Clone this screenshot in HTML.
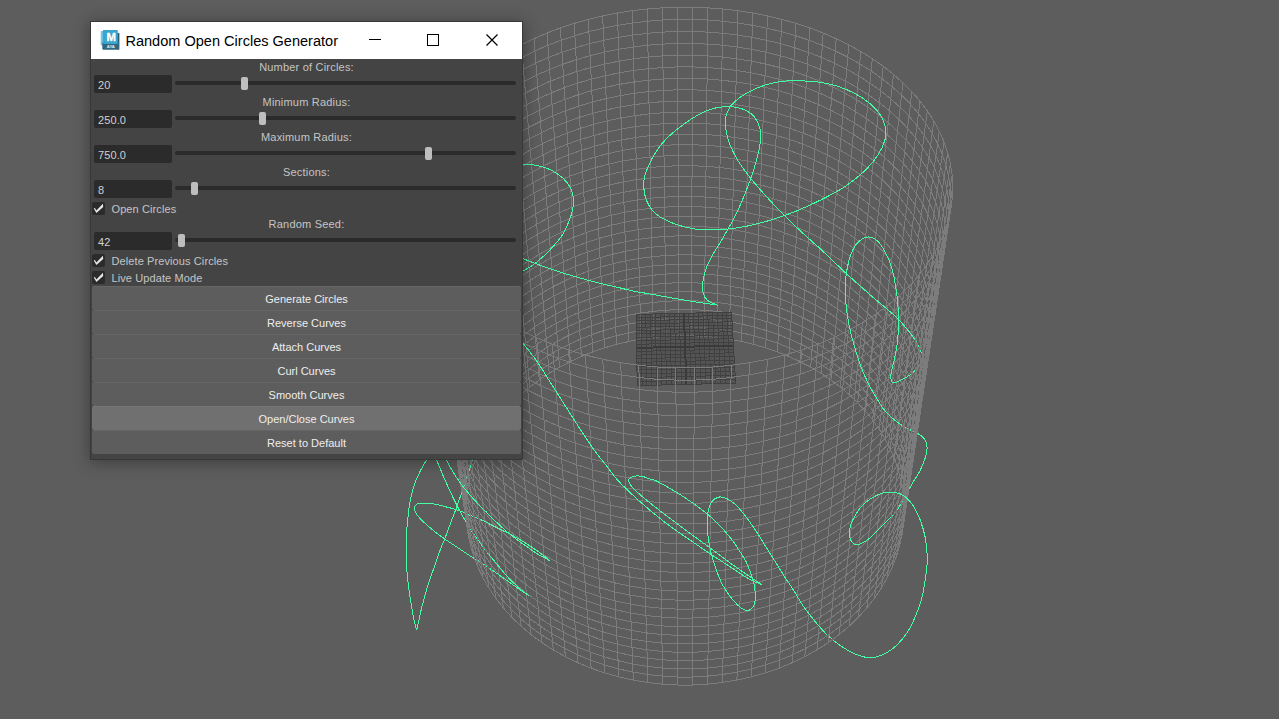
<!DOCTYPE html>
<html lang="en"><head><meta charset="utf-8"><title>Random Open Circles Generator</title>
<style>
html,body{margin:0;padding:0;}
body{width:1279px;height:719px;overflow:hidden;background:#5d5d5d;position:relative;font-family:"Liberation Sans",sans-serif;}
#vp{position:absolute;left:0;top:0;width:1279px;height:719px;}
#win{position:absolute;left:90px;top:21px;width:433px;height:439px;background:#383838;box-shadow:0 2px 15px 1px rgba(0,0,0,0.32);}
#tb{position:absolute;left:1px;top:1px;width:431px;height:37px;background:#fff;}
#ct{position:absolute;left:1px;top:38px;width:431px;height:400px;background:#444;}
#ttl{position:absolute;left:34.4px;top:9px;font:14.55px/20px "Liberation Sans",sans-serif;color:#000;white-space:nowrap;}
.ui{font:11px/14px "Liberation Sans",sans-serif;letter-spacing:0.1px;color:#c4c4c4;white-space:nowrap;}
.lbl{position:absolute;left:0;width:431px;text-align:center;letter-spacing:0.2px;}
.fld{position:absolute;left:3px;width:78px;height:18px;background:#2b2b2b;border-radius:2px;}
.fld span{position:absolute;left:4px;top:3px;color:#d0d0d0;}
.grv{position:absolute;left:84px;width:341px;height:4px;background:#2b2b2b;border-radius:2px;}
.hnd{position:absolute;width:7px;height:13px;background:#bebebe;border-radius:2px;}
.cb{position:absolute;left:1px;width:13px;height:13px;background:#2b2b2b;border-radius:2px;}
.cbl{position:absolute;left:20.5px;}
.btn{position:absolute;left:1px;width:429px;height:23px;background:#5d5d5d;border-top:1px solid #666;border-radius:2px;text-align:center;color:#eeeeee;}
.btn span{position:relative;top:5px;letter-spacing:0;}
.btn.hv{background:#707070;border-top-color:#777;}

</style></head><body>
<svg id="vp" width="1279" height="719" viewBox="0 0 1279 719">
<defs><clipPath id="bd"><path d="M416.0,188.5 464.5,511.7 464.6,514.4 464.7,517.2 464.9,520.0 465.1,522.7 465.3,525.5 465.7,528.3 466.1,531.0 466.5,533.8 467.0,536.6 467.6,539.3 468.2,542.1 468.8,544.9 469.6,547.6 470.3,550.3 471.2,553.1 472.1,555.8 473.0,558.5 474.0,561.2 475.1,563.9 476.2,566.6 477.4,569.3 478.6,572.0 479.9,574.6 481.2,577.3 482.6,579.9 484.1,582.5 485.6,585.1 487.1,587.7 488.7,590.2 490.4,592.8 492.1,595.3 493.9,597.8 495.8,600.3 497.6,602.7 499.6,605.1 501.6,607.6 503.6,609.9 505.7,612.3 507.8,614.6 510.0,617.0 512.3,619.2 514.6,621.5 516.9,623.7 519.3,625.9 521.7,628.1 524.2,630.2 526.8,632.3 529.3,634.4 532.0,636.5 534.6,638.5 537.4,640.4 553.9,638.4 551.1,636.5 548.5,634.5 545.8,632.4 543.3,630.3 540.7,628.2 538.2,626.1 535.8,623.9 533.4,621.7 531.1,619.5 528.8,617.2 526.5,615.0 524.3,612.6 522.2,610.3 520.1,607.9 518.1,605.6 516.1,603.1 514.1,600.7 512.3,598.3 510.4,595.8 508.6,593.3 506.9,590.8 505.2,588.2 503.6,585.7 502.1,583.1 500.6,580.5 499.1,577.9 497.7,575.3 496.4,572.6 495.1,570.0 493.9,567.3 492.7,564.6 491.6,561.9 490.5,559.2 489.5,556.5 488.6,553.8 487.7,551.1 486.8,548.3 486.1,545.6 485.3,542.9 484.7,540.1 484.1,537.3 483.5,534.6 483.0,531.8 482.6,529.0 482.2,526.3 481.8,523.5 481.6,520.7 481.4,518.0 481.2,515.2 481.1,512.4 481.0,509.7 432.5,186.5ZM954.2,188.5 905.7,511.7 905.6,514.4 905.5,517.2 905.3,520.0 905.1,522.7 904.9,525.5 904.5,528.3 904.1,531.0 903.7,533.8 903.2,536.6 902.6,539.3 902.0,542.1 901.4,544.9 900.6,547.6 899.9,550.3 899.0,553.1 898.1,555.8 897.2,558.5 896.2,561.2 895.1,563.9 894.0,566.6 892.8,569.3 891.6,572.0 890.3,574.6 889.0,577.3 887.6,579.9 886.1,582.5 884.6,585.1 883.1,587.7 881.5,590.2 879.8,592.8 878.1,595.3 876.3,597.8 874.4,600.3 872.6,602.7 870.6,605.1 868.6,607.6 866.6,609.9 864.5,612.3 862.4,614.6 860.2,617.0 857.9,619.2 855.6,621.5 853.3,623.7 850.9,625.9 848.5,628.1 846.0,630.2 843.4,632.3 840.9,634.4 838.2,636.5 835.6,638.5 832.8,640.4 816.3,638.4 819.1,636.5 821.7,634.5 824.4,632.4 826.9,630.3 829.5,628.2 832.0,626.1 834.4,623.9 836.8,621.7 839.1,619.5 841.4,617.2 843.7,615.0 845.9,612.6 848.0,610.3 850.1,607.9 852.1,605.6 854.1,603.1 856.1,600.7 857.9,598.3 859.8,595.8 861.6,593.3 863.3,590.8 865.0,588.2 866.6,585.7 868.1,583.1 869.6,580.5 871.1,577.9 872.5,575.3 873.8,572.6 875.1,570.0 876.3,567.3 877.5,564.6 878.6,561.9 879.7,559.2 880.7,556.5 881.6,553.8 882.5,551.1 883.4,548.3 884.1,545.6 884.9,542.9 885.5,540.1 886.1,537.3 886.7,534.6 887.2,531.8 887.6,529.0 888.0,526.3 888.4,523.5 888.6,520.7 888.8,518.0 889.0,515.2 889.1,512.4 889.2,509.7 937.7,186.5Z"/></clipPath><clipPath id="fc"><rect x="630" y="362" width="112" height="30"/></clipPath></defs>
<path id="cyl" d="M694.4,367.9 713.0,367.0 731.4,365.3 749.5,362.7 767.4,359.3 784.8,355.0 801.7,350.0 817.9,344.2 833.6,337.7 848.4,330.5 862.5,322.7 875.6,314.3 887.9,305.3 899.1,295.9 909.4,286.0 918.6,275.7 926.7,265.2 933.7,254.3 939.7,243.2 944.5,232.0 948.2,220.6 950.8,209.2 952.3,197.7 952.7,186.3 952.1,175.0 950.4,163.7 947.7,152.7 944.0,141.8 939.3,131.2 933.8,120.9 927.3,110.8 920.0,101.1 911.9,91.8 903.0,82.9 893.5,74.4 883.2,66.3 872.3,58.6 860.8,51.5 848.8,44.8 836.2,38.7 823.2,33.0 809.8,27.9 796.0,23.4 781.9,19.4 767.5,15.9 752.8,13.0 738.0,10.7 723.0,9.0 707.9,7.8 692.7,7.2 677.5,7.2 662.3,7.8 647.2,9.0 632.2,10.7 617.4,13.0 602.7,15.9 588.3,19.4 574.2,23.4 560.4,27.9 547.0,33.0 534.0,38.7 521.4,44.8 509.4,51.5 497.9,58.6 487.0,66.3 476.7,74.4 467.2,82.9 458.3,91.8 450.2,101.1 442.9,110.8 436.4,120.9 430.9,131.2 426.2,141.8 422.5,152.7 419.8,163.7 418.1,175.0 417.5,186.3 417.9,197.7 419.4,209.2 422.0,220.6 425.7,232.0 430.5,243.2 436.5,254.3 443.5,265.2 451.6,275.7 460.8,286.0 471.1,295.9 482.3,305.3 494.6,314.3 507.7,322.7 521.8,330.5 536.6,337.7 552.3,344.2 568.5,350.0 585.4,355.0 602.8,359.3 620.7,362.7 638.8,365.3 657.2,367.0 675.8,367.9ZM694.3,380.1 712.8,379.3 731.0,377.5 749.1,374.9 766.8,371.5 784.0,367.3 800.8,362.2 817.0,356.5 832.4,350.0 847.2,342.8 861.1,335.0 874.2,326.6 886.4,317.6 897.6,308.2 907.8,298.3 916.9,288.1 925.0,277.5 932.0,266.6 937.9,255.6 942.7,244.3 946.4,232.9 948.9,221.5 950.4,210.1 950.9,198.7 950.2,187.3 948.6,176.1 945.9,165.0 942.2,154.2 937.6,143.6 932.1,133.2 925.7,123.2 918.5,113.5 910.4,104.1 901.6,95.2 892.1,86.7 881.9,78.6 871.1,70.9 859.7,63.8 847.7,57.1 835.3,50.9 822.3,45.3 809.0,40.2 795.3,35.6 781.3,31.6 766.9,28.2 752.4,25.3 737.6,23.0 722.7,21.2 707.7,20.0 692.6,19.5 677.6,19.5 662.5,20.0 647.5,21.2 632.6,23.0 617.8,25.3 603.3,28.2 588.9,31.6 574.9,35.6 561.2,40.2 547.9,45.3 534.9,50.9 522.5,57.1 510.5,63.8 499.1,70.9 488.3,78.6 478.1,86.7 468.6,95.2 459.8,104.1 451.7,113.5 444.5,123.2 438.1,133.2 432.6,143.6 428.0,154.2 424.3,165.0 421.6,176.1 420.0,187.3 419.3,198.7 419.8,210.1 421.3,221.5 423.8,232.9 427.5,244.3 432.3,255.6 438.2,266.6 445.2,277.5 453.3,288.1 462.4,298.3 472.6,308.2 483.8,317.6 496.0,326.6 509.1,335.0 523.0,342.8 537.8,350.0 553.2,356.5 569.4,362.2 586.2,367.3 603.4,371.5 621.1,374.9 639.2,377.5 657.4,379.3 675.9,380.1ZM694.3,392.2 712.5,391.3 730.7,389.6 748.6,387.0 766.1,383.6 783.3,379.3 799.9,374.3 816.0,368.5 831.4,362.1 846.0,354.9 859.9,347.1 872.8,338.7 884.9,329.8 896.0,320.3 906.1,310.5 915.2,300.2 923.3,289.7 930.2,278.8 936.1,267.7 940.9,256.5 944.5,245.1 947.1,233.7 948.6,222.3 949.1,210.8 948.4,199.5 946.8,188.3 944.1,177.2 940.5,166.4 936.0,155.7 930.5,145.4 924.1,135.4 917.0,125.6 909.0,116.3 900.2,107.4 890.8,98.8 880.7,90.7 869.9,83.1 858.6,75.9 846.7,69.2 834.3,63.1 821.5,57.4 808.2,52.3 794.6,47.7 780.7,43.7 766.4,40.3 752.0,37.4 737.3,35.0 722.5,33.3 707.6,32.1 692.6,31.5 677.6,31.5 662.6,32.1 647.7,33.3 632.9,35.0 618.2,37.4 603.8,40.3 589.5,43.7 575.6,47.7 562.0,52.3 548.7,57.4 535.9,63.1 523.5,69.2 511.6,75.9 500.3,83.1 489.5,90.7 479.4,98.8 470.0,107.4 461.2,116.3 453.2,125.6 446.1,135.4 439.7,145.4 434.2,155.7 429.7,166.4 426.1,177.2 423.4,188.3 421.8,199.5 421.1,210.8 421.6,222.3 423.1,233.7 425.7,245.1 429.3,256.5 434.1,267.7 440.0,278.8 446.9,289.7 455.0,300.2 464.1,310.5 474.2,320.3 485.3,329.8 497.4,338.7 510.3,347.1 524.2,354.9 538.8,362.1 554.2,368.5 570.3,374.3 586.9,379.3 604.1,383.6 621.6,387.0 639.5,389.6 657.7,391.3 675.9,392.2ZM694.2,404.0 712.3,403.2 730.3,401.4 748.1,398.9 765.5,395.5 782.6,391.2 799.1,386.2 815.0,380.5 830.3,374.0 844.8,366.8 858.6,359.0 871.5,350.6 883.5,341.7 894.5,332.3 904.6,322.4 913.6,312.2 921.6,301.6 928.5,290.8 934.3,279.7 939.1,268.5 942.7,257.1 945.3,245.7 946.8,234.3 947.3,222.9 946.7,211.5 945.0,200.3 942.4,189.3 938.8,178.4 934.3,167.8 928.9,157.4 922.6,147.4 915.5,137.7 907.5,128.3 898.9,119.4 889.5,110.8 879.4,102.7 868.8,95.1 857.5,87.9 845.7,81.2 833.4,75.0 820.6,69.4 807.5,64.3 793.9,59.7 780.1,55.7 765.9,52.2 751.6,49.3 737.0,47.0 722.3,45.2 707.4,44.1 692.6,43.5 677.6,43.5 662.8,44.1 647.9,45.2 633.2,47.0 618.6,49.3 604.3,52.2 590.1,55.7 576.3,59.7 562.7,64.3 549.6,69.4 536.8,75.0 524.5,81.2 512.7,87.9 501.4,95.1 490.8,102.7 480.7,110.8 471.3,119.4 462.7,128.3 454.7,137.7 447.6,147.4 441.3,157.4 435.9,167.8 431.4,178.4 427.8,189.3 425.2,200.3 423.5,211.5 422.9,222.9 423.4,234.3 424.9,245.7 427.5,257.1 431.1,268.5 435.9,279.7 441.7,290.8 448.6,301.6 456.6,312.2 465.6,322.4 475.7,332.3 486.7,341.7 498.7,350.6 511.6,359.0 525.4,366.8 539.9,374.0 555.2,380.5 571.1,386.2 587.6,391.2 604.7,395.5 622.1,398.9 639.9,401.4 657.9,403.2 676.0,404.0ZM694.1,415.7 712.1,414.9 730.0,413.1 747.6,410.6 764.9,407.2 781.8,402.9 798.2,397.9 814.1,392.2 829.2,385.7 843.7,378.6 857.3,370.8 870.1,362.4 882.0,353.5 893.0,344.1 903.0,334.3 912.0,324.0 919.9,313.5 926.8,302.6 932.6,291.6 937.3,280.3 941.0,269.0 943.5,257.6 945.0,246.1 945.5,234.7 944.9,223.4 943.3,212.2 940.7,201.1 937.2,190.3 932.7,179.6 927.3,169.3 921.0,159.2 914.0,149.5 906.1,140.2 897.5,131.2 888.2,122.7 878.2,114.6 867.6,106.9 856.4,99.7 844.7,93.0 832.5,86.9 819.8,81.2 806.7,76.1 793.3,71.5 779.5,67.5 765.4,64.0 751.2,61.1 736.7,58.8 722.0,57.0 707.3,55.9 692.5,55.3 677.7,55.3 662.9,55.9 648.2,57.0 633.5,58.8 619.0,61.1 604.8,64.0 590.7,67.5 576.9,71.5 563.5,76.1 550.4,81.2 537.7,86.9 525.5,93.0 513.8,99.7 502.6,106.9 492.0,114.6 482.0,122.7 472.7,131.2 464.1,140.2 456.2,149.5 449.2,159.2 442.9,169.3 437.5,179.6 433.0,190.3 429.5,201.1 426.9,212.2 425.3,223.4 424.7,234.7 425.2,246.1 426.7,257.6 429.2,269.0 432.9,280.3 437.6,291.6 443.4,302.6 450.3,313.5 458.2,324.0 467.2,334.3 477.2,344.1 488.2,353.5 500.1,362.4 512.9,370.8 526.5,378.6 541.0,385.7 556.1,392.2 572.0,397.9 588.4,402.9 605.3,407.2 622.6,410.6 640.2,413.1 658.1,414.9 676.1,415.7ZM694.1,427.3 711.9,426.4 729.7,424.7 747.2,422.1 764.4,418.7 781.1,414.5 797.4,409.5 813.1,403.7 828.2,397.3 842.5,390.1 856.1,382.4 868.8,374.0 880.6,365.1 891.5,355.7 901.5,345.9 910.4,335.7 918.3,325.1 925.1,314.3 930.9,303.3 935.6,292.0 939.2,280.7 941.8,269.3 943.3,257.8 943.8,246.4 943.2,235.1 941.6,223.9 939.0,212.8 935.5,202.0 931.1,191.4 925.7,181.0 919.5,170.9 912.5,161.2 904.7,151.9 896.2,142.9 886.9,134.4 877.0,126.2 866.5,118.6 855.3,111.4 843.7,104.7 831.6,98.5 819.0,92.9 806.0,87.7 792.6,83.2 778.9,79.1 764.9,75.7 750.8,72.8 736.4,70.4 721.8,68.7 707.2,67.5 692.5,66.9 677.7,66.9 663.0,67.5 648.4,68.7 633.8,70.4 619.4,72.8 605.3,75.7 591.3,79.1 577.6,83.2 564.2,87.7 551.2,92.9 538.6,98.5 526.5,104.7 514.9,111.4 503.7,118.6 493.2,126.2 483.3,134.4 474.0,142.9 465.5,151.9 457.7,161.2 450.7,170.9 444.5,181.0 439.1,191.4 434.7,202.0 431.2,212.8 428.6,223.9 427.0,235.1 426.4,246.4 426.9,257.8 428.4,269.3 431.0,280.7 434.6,292.0 439.3,303.3 445.1,314.3 451.9,325.1 459.8,335.7 468.7,345.9 478.7,355.7 489.6,365.1 501.4,374.0 514.1,382.4 527.7,390.1 542.0,397.3 557.1,403.7 572.8,409.5 589.1,414.5 605.8,418.7 623.0,422.1 640.5,424.7 658.3,426.4 676.1,427.3ZM694.0,438.6 711.7,437.8 729.3,436.0 746.7,433.5 763.8,430.1 780.4,425.9 796.6,420.9 812.2,415.1 827.2,408.7 841.4,401.6 854.9,393.8 867.5,385.4 879.3,376.6 890.1,367.2 900.0,357.4 908.8,347.2 916.7,336.6 923.5,325.8 929.2,314.8 933.9,303.6 937.5,292.2 940.1,280.8 941.6,269.4 942.0,258.0 941.5,246.7 939.9,235.4 937.4,224.4 933.9,213.5 929.5,202.9 924.2,192.6 918.0,182.5 911.1,172.8 903.3,163.4 894.8,154.5 885.7,145.9 875.8,137.8 865.3,130.1 854.3,122.9 842.7,116.3 830.7,110.1 818.1,104.4 805.2,99.3 791.9,94.7 778.3,90.6 764.5,87.2 750.4,84.3 736.1,81.9 721.6,80.2 707.0,79.0 692.4,78.4 677.8,78.4 663.2,79.0 648.6,80.2 634.1,81.9 619.8,84.3 605.7,87.2 591.9,90.6 578.3,94.7 565.0,99.3 552.1,104.4 539.5,110.1 527.5,116.3 515.9,122.9 504.9,130.1 494.4,137.8 484.5,145.9 475.4,154.5 466.9,163.4 459.1,172.8 452.2,182.5 446.0,192.6 440.7,202.9 436.3,213.5 432.8,224.4 430.3,235.4 428.7,246.7 428.2,258.0 428.6,269.4 430.1,280.8 432.7,292.2 436.3,303.6 441.0,314.8 446.7,325.8 453.5,336.6 461.4,347.2 470.2,357.4 480.1,367.2 490.9,376.6 502.7,385.4 515.3,393.8 528.8,401.6 543.0,408.7 558.0,415.1 573.6,420.9 589.8,425.9 606.4,430.1 623.5,433.5 640.9,436.0 658.5,437.8 676.2,438.6ZM693.9,449.8 711.5,448.9 729.0,447.2 746.3,444.7 763.2,441.3 779.8,437.1 795.8,432.1 811.3,426.4 826.1,419.9 840.3,412.8 853.7,405.1 866.2,396.7 877.9,387.8 888.7,378.5 898.5,368.7 907.3,358.5 915.1,348.0 921.8,337.2 927.5,326.1 932.2,314.9 935.8,303.6 938.4,292.2 939.9,280.8 940.3,269.4 939.8,258.1 938.3,246.9 935.7,235.8 932.3,224.9 927.9,214.3 922.7,204.0 916.6,193.9 909.6,184.2 902.0,174.8 893.5,165.9 884.4,157.3 874.6,149.2 864.2,141.5 853.3,134.3 841.8,127.6 829.8,121.5 817.3,115.8 804.5,110.7 791.3,106.1 777.8,102.0 764.0,98.6 750.0,95.6 735.7,93.3 721.4,91.6 706.9,90.4 692.4,89.8 677.8,89.8 663.3,90.4 648.8,91.6 634.5,93.3 620.2,95.6 606.2,98.6 592.4,102.0 578.9,106.1 565.7,110.7 552.9,115.8 540.4,121.5 528.4,127.6 516.9,134.3 506.0,141.5 495.6,149.2 485.8,157.3 476.7,165.9 468.2,174.8 460.6,184.2 453.6,193.9 447.5,204.0 442.3,214.3 437.9,224.9 434.5,235.8 431.9,246.9 430.4,258.1 429.9,269.4 430.3,280.8 431.8,292.2 434.4,303.6 438.0,314.9 442.7,326.1 448.4,337.2 455.1,348.0 462.9,358.5 471.7,368.7 481.5,378.5 492.3,387.8 504.0,396.7 516.5,405.1 529.9,412.8 544.1,419.9 558.9,426.4 574.4,432.1 590.4,437.1 607.0,441.3 623.9,444.7 641.2,447.2 658.7,448.9 676.3,449.8ZM693.9,460.8 711.4,460.0 728.7,458.3 745.8,455.7 762.7,452.3 779.1,448.1 795.0,443.2 810.4,437.4 825.1,431.0 839.2,423.9 852.5,416.2 864.9,407.8 876.6,399.0 887.2,389.6 897.0,379.8 905.7,369.6 913.5,359.1 920.2,348.3 925.9,337.3 930.5,326.1 934.1,314.8 936.7,303.4 938.2,292.0 938.7,280.6 938.1,269.3 936.6,258.1 934.1,247.1 930.7,236.2 926.4,225.6 921.2,215.2 915.1,205.2 908.2,195.5 900.6,186.1 892.2,177.1 883.2,168.6 873.5,160.5 863.1,152.8 852.2,145.6 840.8,138.9 828.9,132.7 816.5,127.0 803.8,121.9 790.7,117.3 777.2,113.3 763.5,109.8 749.6,106.9 735.4,104.6 721.2,102.8 706.8,101.6 692.3,101.0 677.9,101.0 663.4,101.6 649.0,102.8 634.8,104.6 620.6,106.9 606.7,109.8 593.0,113.3 579.5,117.3 566.4,121.9 553.7,127.0 541.3,132.7 529.4,138.9 518.0,145.6 507.1,152.8 496.7,160.5 487.0,168.6 478.0,177.1 469.6,186.1 462.0,195.5 455.1,205.2 449.0,215.2 443.8,225.6 439.5,236.2 436.1,247.1 433.6,258.1 432.1,269.3 431.5,280.6 432.0,292.0 433.5,303.4 436.1,314.8 439.7,326.1 444.3,337.3 450.0,348.3 456.7,359.1 464.5,369.6 473.2,379.8 483.0,389.6 493.6,399.0 505.3,407.8 517.7,416.2 531.0,423.9 545.1,431.0 559.8,437.4 575.2,443.2 591.1,448.1 607.5,452.3 624.4,455.7 641.5,458.3 658.8,460.0 676.3,460.8ZM693.8,471.7 711.2,470.9 728.4,469.1 745.4,466.6 762.1,463.2 778.4,459.0 794.2,454.1 809.5,448.4 824.2,441.9 838.1,434.8 851.3,427.1 863.7,418.8 875.2,409.9 885.8,400.6 895.5,390.8 904.2,380.7 911.9,370.2 918.6,359.4 924.3,348.4 928.9,337.2 932.5,325.9 935.0,314.5 936.5,303.1 937.0,291.7 936.5,280.4 935.0,269.2 932.5,258.2 929.1,247.3 924.8,236.7 919.7,226.4 913.7,216.3 906.9,206.6 899.3,197.2 891.0,188.3 882.0,179.7 872.3,171.6 862.1,163.9 851.2,156.7 839.9,150.0 828.0,143.8 815.8,138.2 803.1,133.0 790.0,128.4 776.7,124.4 763.1,120.9 749.2,118.0 735.1,115.7 721.0,113.9 706.7,112.7 692.3,112.1 677.9,112.1 663.5,112.7 649.2,113.9 635.1,115.7 621.0,118.0 607.1,120.9 593.5,124.4 580.2,128.4 567.1,133.0 554.4,138.2 542.2,143.8 530.3,150.0 519.0,156.7 508.1,163.9 497.9,171.6 488.2,179.7 479.2,188.3 470.9,197.2 463.3,206.6 456.5,216.3 450.5,226.4 445.4,236.7 441.1,247.3 437.7,258.2 435.2,269.2 433.7,280.4 433.2,291.7 433.7,303.1 435.2,314.5 437.7,325.9 441.3,337.2 445.9,348.4 451.6,359.4 458.3,370.2 466.0,380.7 474.7,390.8 484.4,400.6 495.0,409.9 506.5,418.8 518.9,427.1 532.1,434.8 546.0,441.9 560.7,448.4 576.0,454.1 591.8,459.0 608.1,463.2 624.8,466.6 641.8,469.1 659.0,470.9 676.4,471.7ZM693.7,482.4 711.0,481.6 728.1,479.9 745.0,477.3 761.6,473.9 777.8,469.8 793.5,464.8 808.6,459.1 823.2,452.7 837.0,445.6 850.2,437.9 862.5,429.6 873.9,420.8 884.5,411.4 894.1,401.7 902.8,391.5 910.4,381.0 917.1,370.3 922.7,359.3 927.3,348.1 930.9,336.8 933.4,325.5 934.9,314.1 935.4,302.7 934.9,291.4 933.4,280.2 931.0,269.2 927.6,258.3 923.3,247.7 918.2,237.4 912.2,227.3 905.5,217.6 898.0,208.2 889.7,199.3 880.8,190.7 871.2,182.6 861.0,174.9 850.2,167.7 838.9,161.0 827.2,154.8 815.0,149.1 802.4,144.0 789.4,139.4 776.1,135.4 762.6,131.9 748.8,129.0 734.9,126.6 720.7,124.9 706.5,123.7 692.2,123.1 678.0,123.1 663.7,123.7 649.5,124.9 635.3,126.6 621.4,129.0 607.6,131.9 594.1,135.4 580.8,139.4 567.8,144.0 555.2,149.1 543.0,154.8 531.3,161.0 520.0,167.7 509.2,174.9 499.0,182.6 489.4,190.7 480.5,199.3 472.2,208.2 464.7,217.6 458.0,227.3 452.0,237.4 446.9,247.7 442.6,258.3 439.2,269.2 436.8,280.2 435.3,291.4 434.8,302.7 435.3,314.1 436.8,325.5 439.3,336.8 442.9,348.1 447.5,359.3 453.1,370.3 459.8,381.0 467.4,391.5 476.1,401.7 485.7,411.4 496.3,420.8 507.7,429.6 520.0,437.9 533.2,445.6 547.0,452.7 561.6,459.1 576.7,464.8 592.4,469.8 608.6,473.9 625.2,477.3 642.1,479.9 659.2,481.6 676.5,482.4ZM693.7,493.0 710.8,492.1 727.8,490.4 744.6,487.9 761.0,484.5 777.1,480.4 792.7,475.4 807.8,469.7 822.2,463.3 836.0,456.3 849.0,448.6 861.2,440.3 872.6,431.5 883.1,422.1 892.7,412.4 901.3,402.3 908.9,391.8 915.5,381.0 921.1,370.0 925.7,358.9 929.2,347.6 931.8,336.3 933.3,324.9 933.8,313.5 933.3,302.2 931.8,291.0 929.4,280.0 926.1,269.2 921.8,258.6 916.8,248.2 910.8,238.2 904.1,228.5 896.6,219.1 888.5,210.1 879.6,201.6 870.1,193.4 859.9,185.8 849.2,178.6 838.0,171.9 826.3,165.7 814.2,160.0 801.7,154.9 788.8,150.3 775.6,146.2 762.1,142.7 748.4,139.8 734.6,137.5 720.5,135.7 706.4,134.6 692.2,134.0 678.0,134.0 663.8,134.6 649.7,135.7 635.6,137.5 621.8,139.8 608.1,142.7 594.6,146.2 581.4,150.3 568.5,154.9 556.0,160.0 543.9,165.7 532.2,171.9 521.0,178.6 510.3,185.8 500.1,193.4 490.6,201.6 481.7,210.1 473.6,219.1 466.1,228.5 459.4,238.2 453.4,248.2 448.4,258.6 444.1,269.2 440.8,280.0 438.4,291.0 436.9,302.2 436.4,313.5 436.9,324.9 438.4,336.3 441.0,347.6 444.5,358.9 449.1,370.0 454.7,381.0 461.3,391.8 468.9,402.3 477.5,412.4 487.1,422.1 497.6,431.5 509.0,440.3 521.2,448.6 534.2,456.3 548.0,463.3 562.4,469.7 577.5,475.4 593.1,480.4 609.2,484.5 625.6,487.9 642.4,490.4 659.4,492.1 676.5,493.0ZM693.6,503.4 710.6,502.6 727.5,500.9 744.1,498.3 760.5,495.0 776.5,490.8 792.0,485.9 806.9,480.2 821.3,473.8 835.0,466.8 847.9,459.1 860.0,450.8 871.4,442.0 881.8,432.7 891.3,423.0 899.8,412.8 907.4,402.4 914.0,391.6 919.6,380.7 924.1,369.5 927.7,358.3 930.2,346.9 931.7,335.5 932.2,324.2 931.7,312.9 930.3,301.7 927.9,290.7 924.6,279.9 920.4,269.3 915.3,258.9 909.5,248.9 902.8,239.2 895.4,229.8 887.2,220.9 878.4,212.3 868.9,204.2 858.9,196.5 848.3,189.3 837.1,182.6 825.5,176.4 813.4,170.7 801.0,165.6 788.2,161.0 775.1,156.9 761.7,153.5 748.1,150.5 734.3,148.2 720.3,146.4 706.3,145.3 692.2,144.7 678.0,144.7 663.9,145.3 649.9,146.4 635.9,148.2 622.1,150.5 608.5,153.5 595.1,156.9 582.0,161.0 569.2,165.6 556.8,170.7 544.7,176.4 533.1,182.6 521.9,189.3 511.3,196.5 501.3,204.2 491.8,212.3 483.0,220.9 474.8,229.8 467.4,239.2 460.7,248.9 454.9,258.9 449.8,269.3 445.6,279.9 442.3,290.7 439.9,301.7 438.5,312.9 438.0,324.2 438.5,335.5 440.0,346.9 442.5,358.3 446.1,369.5 450.6,380.7 456.2,391.6 462.8,402.4 470.4,412.8 478.9,423.0 488.4,432.7 498.8,442.0 510.2,450.8 522.3,459.1 535.2,466.8 548.9,473.8 563.3,480.2 578.2,485.9 593.7,490.8 609.7,495.0 626.1,498.3 642.7,500.9 659.6,502.6 676.6,503.4ZM693.6,513.7 710.4,512.8 727.2,511.1 743.7,508.6 760.0,505.3 775.8,501.1 791.2,496.2 806.1,490.5 820.3,484.1 833.9,477.1 846.8,469.4 858.9,461.2 870.1,452.4 880.5,443.1 889.9,433.4 898.4,423.3 905.9,412.8 912.5,402.1 918.0,391.1 922.6,380.0 926.1,368.8 928.6,357.4 930.1,346.1 930.6,334.7 930.1,323.5 928.7,312.3 926.4,301.3 923.1,290.4 918.9,279.9 913.9,269.5 908.1,259.5 901.5,249.8 894.1,240.4 886.0,231.5 877.2,222.9 867.8,214.8 857.9,207.1 847.3,199.9 836.2,193.2 824.7,187.0 812.7,181.3 800.3,176.2 787.6,171.6 774.6,167.5 761.2,164.1 747.7,161.1 734.0,158.8 720.1,157.0 706.2,155.9 692.1,155.3 678.1,155.3 664.0,155.9 650.1,157.0 636.2,158.8 622.5,161.1 609.0,164.1 595.6,167.5 582.6,171.6 569.9,176.2 557.5,181.3 545.5,187.0 534.0,193.2 522.9,199.9 512.3,207.1 502.4,214.8 493.0,222.9 484.2,231.5 476.1,240.4 468.7,249.8 462.1,259.5 456.3,269.5 451.3,279.9 447.1,290.4 443.8,301.3 441.5,312.3 440.1,323.5 439.6,334.7 440.1,346.1 441.6,357.4 444.1,368.8 447.6,380.0 452.2,391.1 457.7,402.1 464.3,412.8 471.8,423.3 480.3,433.4 489.7,443.1 500.1,452.4 511.3,461.2 523.4,469.4 536.3,477.1 549.9,484.1 564.1,490.5 579.0,496.2 594.4,501.1 610.2,505.3 626.5,508.6 643.0,511.1 659.8,512.8 676.6,513.7ZM693.5,523.8 710.3,523.0 726.9,521.3 743.3,518.8 759.5,515.4 775.2,511.3 790.5,506.4 805.3,500.7 819.4,494.3 832.9,487.3 845.7,479.6 857.7,471.4 868.9,462.6 879.2,453.4 888.6,443.7 897.0,433.6 904.5,423.1 911.0,412.4 916.5,401.5 921.0,390.4 924.5,379.1 927.0,367.8 928.5,356.5 929.1,345.1 928.6,333.9 927.2,322.7 924.9,311.7 921.6,300.9 917.5,290.3 912.5,280.0 906.7,269.9 900.2,260.2 892.8,250.9 884.8,241.9 876.1,233.4 866.8,225.3 856.8,217.6 846.3,210.4 835.3,203.7 823.9,197.5 812.0,191.8 799.7,186.7 787.0,182.1 774.0,178.0 760.8,174.5 747.4,171.6 733.7,169.3 719.9,167.5 706.0,166.3 692.1,165.8 678.1,165.8 664.2,166.3 650.3,167.5 636.5,169.3 622.8,171.6 609.4,174.5 596.2,178.0 583.2,182.1 570.5,186.7 558.2,191.8 546.3,197.5 534.9,203.7 523.9,210.4 513.4,217.6 503.4,225.3 494.1,233.4 485.4,241.9 477.4,250.9 470.0,260.2 463.5,269.9 457.7,280.0 452.7,290.3 448.6,300.9 445.3,311.7 443.0,322.7 441.6,333.9 441.1,345.1 441.7,356.5 443.2,367.8 445.7,379.1 449.2,390.4 453.7,401.5 459.2,412.4 465.7,423.1 473.2,433.6 481.6,443.7 491.0,453.4 501.3,462.6 512.5,471.4 524.5,479.6 537.3,487.3 550.8,494.3 564.9,500.7 579.7,506.4 595.0,511.3 610.7,515.4 626.9,518.8 643.3,521.3 659.9,523.0 676.7,523.8ZM693.4,533.8 710.1,533.0 726.6,531.3 742.9,528.8 759.0,525.4 774.6,521.3 789.8,516.4 804.4,510.7 818.5,504.4 831.9,497.4 844.6,489.7 856.5,481.5 867.6,472.7 877.9,463.5 887.2,453.8 895.6,443.7 903.1,433.3 909.5,422.6 915.0,411.7 919.5,400.6 923.0,389.4 925.5,378.1 927.0,366.7 927.5,355.4 927.1,344.2 925.7,333.0 923.4,322.0 920.2,311.2 916.1,300.6 911.1,290.3 905.4,280.3 898.9,270.6 891.6,261.2 883.6,252.3 875.0,243.7 865.7,235.6 855.8,227.9 845.4,220.7 834.5,214.0 823.1,207.8 811.2,202.2 799.0,197.0 786.4,192.4 773.5,188.4 760.4,184.9 747.0,182.0 733.4,179.6 719.7,177.9 705.9,176.7 692.0,176.1 678.2,176.1 664.3,176.7 650.5,177.9 636.8,179.6 623.2,182.0 609.8,184.9 596.7,188.4 583.8,192.4 571.2,197.0 559.0,202.2 547.1,207.8 535.7,214.0 524.8,220.7 514.4,227.9 504.5,235.6 495.2,243.7 486.6,252.3 478.6,261.2 471.3,270.6 464.8,280.3 459.1,290.3 454.1,300.6 450.0,311.2 446.8,322.0 444.5,333.0 443.1,344.2 442.7,355.4 443.2,366.7 444.7,378.1 447.2,389.4 450.7,400.6 455.2,411.7 460.7,422.6 467.1,433.3 474.6,443.7 483.0,453.8 492.3,463.5 502.6,472.7 513.7,481.5 525.6,489.7 538.3,497.4 551.7,504.4 565.8,510.7 580.4,516.4 595.6,521.3 611.2,525.4 627.3,528.8 643.6,531.3 660.1,533.0 676.8,533.8ZM693.4,543.7 709.9,542.8 726.3,541.1 742.5,538.6 758.5,535.3 774.0,531.2 789.1,526.3 803.6,520.6 817.6,514.3 830.9,507.3 843.6,499.7 855.4,491.5 866.4,482.7 876.6,473.5 885.9,463.8 894.2,453.8 901.7,443.4 908.1,432.7 913.6,421.8 918.0,410.7 921.5,399.5 924.0,388.2 925.5,376.9 926.0,365.6 925.6,354.3 924.2,343.2 921.9,332.2 918.7,321.4 914.7,310.8 909.8,300.5 904.1,290.5 897.6,280.8 890.4,271.5 882.4,262.5 873.9,254.0 864.6,245.8 854.8,238.2 844.5,231.0 833.6,224.3 822.3,218.1 810.5,212.4 798.3,207.3 785.8,202.7 773.0,198.6 759.9,195.1 746.6,192.2 733.2,189.9 719.5,188.1 705.8,186.9 692.0,186.4 678.2,186.4 664.4,186.9 650.7,188.1 637.0,189.9 623.6,192.2 610.3,195.1 597.2,198.6 584.4,202.7 571.9,207.3 559.7,212.4 547.9,218.1 536.6,224.3 525.7,231.0 515.4,238.2 505.6,245.8 496.3,254.0 487.8,262.5 479.8,271.5 472.6,280.8 466.1,290.5 460.4,300.5 455.5,310.8 451.5,321.4 448.3,332.2 446.0,343.2 444.6,354.3 444.2,365.6 444.7,376.9 446.2,388.2 448.7,399.5 452.2,410.7 456.6,421.8 462.1,432.7 468.5,443.4 476.0,453.8 484.3,463.8 493.6,473.5 503.8,482.7 514.8,491.5 526.6,499.7 539.3,507.3 552.6,514.3 566.6,520.6 581.1,526.3 596.2,531.2 611.7,535.3 627.7,538.6 643.9,541.1 660.3,542.8 676.8,543.7ZM693.3,553.4 709.8,552.6 726.1,550.9 742.2,548.4 758.0,545.0 773.4,540.9 788.4,536.0 802.9,530.4 816.7,524.1 830.0,517.1 842.5,509.5 854.3,501.3 865.2,492.6 875.4,483.4 884.6,473.7 892.9,463.7 900.3,453.3 906.7,442.6 912.1,431.7 916.5,420.7 920.0,409.5 922.5,398.2 924.0,386.9 924.5,375.6 924.1,364.4 922.7,353.2 920.5,342.3 917.3,331.5 913.3,320.9 908.4,310.6 902.8,300.6 896.3,290.9 889.2,281.6 881.3,272.6 872.8,264.1 863.6,256.0 853.8,248.3 843.6,241.1 832.8,234.4 821.5,228.2 809.8,222.5 797.7,217.4 785.3,212.8 772.5,208.7 759.5,205.3 746.3,202.3 732.9,200.0 719.3,198.2 705.7,197.1 692.0,196.5 678.2,196.5 664.5,197.1 650.9,198.2 637.3,200.0 623.9,202.3 610.7,205.3 597.7,208.7 584.9,212.8 572.5,217.4 560.4,222.5 548.7,228.2 537.4,234.4 526.6,241.1 516.4,248.3 506.6,256.0 497.4,264.1 488.9,272.6 481.0,281.6 473.9,290.9 467.4,300.6 461.8,310.6 456.9,320.9 452.9,331.5 449.7,342.3 447.5,353.2 446.1,364.4 445.7,375.6 446.2,386.9 447.7,398.2 450.2,409.5 453.7,420.7 458.1,431.7 463.5,442.6 469.9,453.3 477.3,463.7 485.6,473.7 494.8,483.4 505.0,492.6 515.9,501.3 527.7,509.5 540.2,517.1 553.5,524.1 567.3,530.4 581.8,536.0 596.8,540.9 612.2,545.0 628.0,548.4 644.1,550.9 660.4,552.6 676.9,553.4ZM693.3,563.0 709.6,562.2 725.8,560.5 741.8,558.0 757.5,554.7 772.8,550.5 787.7,545.7 802.1,540.1 815.9,533.8 829.0,526.8 841.5,519.2 853.2,511.0 864.1,502.3 874.1,493.1 883.3,483.5 891.6,473.4 898.9,463.1 905.3,452.4 910.7,441.6 915.1,430.5 918.5,419.3 921.0,408.1 922.5,396.8 923.0,385.5 922.6,374.3 921.3,363.2 919.1,352.2 915.9,341.4 911.9,330.9 907.1,320.6 901.5,310.6 895.1,300.9 888.0,291.5 880.1,282.6 871.7,274.1 862.6,266.0 852.9,258.3 842.6,251.1 831.9,244.4 820.7,238.2 809.1,232.5 797.1,227.4 784.7,222.8 772.0,218.7 759.1,215.3 746.0,212.3 732.6,210.0 719.1,208.3 705.6,207.1 691.9,206.5 678.3,206.5 664.6,207.1 651.1,208.3 637.6,210.0 624.2,212.3 611.1,215.3 598.2,218.7 585.5,222.8 573.1,227.4 561.1,232.5 549.5,238.2 538.3,244.4 527.6,251.1 517.3,258.3 507.6,266.0 498.5,274.1 490.1,282.6 482.2,291.5 475.1,300.9 468.7,310.6 463.1,320.6 458.3,330.9 454.3,341.4 451.1,352.2 448.9,363.2 447.6,374.3 447.2,385.5 447.7,396.8 449.2,408.1 451.7,419.3 455.1,430.5 459.5,441.6 464.9,452.4 471.3,463.1 478.6,473.4 486.9,483.5 496.1,493.1 506.1,502.3 517.0,511.0 528.7,519.2 541.2,526.8 554.3,533.8 568.1,540.1 582.5,545.7 597.4,550.5 612.7,554.7 628.4,558.0 644.4,560.5 660.6,562.2 676.9,563.0ZM693.2,572.5 709.4,571.6 725.5,569.9 741.4,567.4 757.0,564.1 772.2,560.0 787.0,555.2 801.3,549.6 815.0,543.3 828.1,536.3 840.5,528.7 852.1,520.6 862.9,511.9 872.9,502.7 882.0,493.1 890.2,483.1 897.5,472.7 903.9,462.1 909.2,451.3 913.6,440.2 917.1,429.1 919.6,417.8 921.0,406.5 921.6,395.3 921.2,384.1 919.9,373.0 917.6,362.0 914.5,351.2 910.6,340.7 905.8,330.4 900.2,320.4 893.9,310.7 886.8,301.4 879.0,292.5 870.6,283.9 861.5,275.8 851.9,268.2 841.7,261.0 831.1,254.3 819.9,248.1 808.4,242.4 796.4,237.3 784.1,232.7 771.5,228.6 758.7,225.2 745.6,222.2 732.4,219.9 719.0,218.1 705.5,217.0 691.9,216.4 678.3,216.4 664.7,217.0 651.2,218.1 637.8,219.9 624.6,222.2 611.5,225.2 598.7,228.6 586.1,232.7 573.8,237.3 561.8,242.4 550.3,248.1 539.1,254.3 528.5,261.0 518.3,268.2 508.7,275.8 499.6,283.9 491.2,292.5 483.4,301.4 476.3,310.7 470.0,320.4 464.4,330.4 459.6,340.7 455.7,351.2 452.6,362.0 450.3,373.0 449.0,384.1 448.6,395.3 449.2,406.5 450.6,417.8 453.1,429.1 456.6,440.2 461.0,451.3 466.3,462.1 472.7,472.7 480.0,483.1 488.2,493.1 497.3,502.7 507.3,511.9 518.1,520.6 529.7,528.7 542.1,536.3 555.2,543.3 568.9,549.6 583.2,555.2 598.0,560.0 613.2,564.1 628.8,567.4 644.7,569.9 660.8,571.6 677.0,572.5ZM693.2,581.8 709.3,581.0 725.3,579.3 741.0,576.8 756.5,573.5 771.7,569.4 786.3,564.6 800.5,559.0 814.2,552.7 827.1,545.8 839.4,538.2 851.0,530.0 861.8,521.4 871.7,512.2 880.8,502.6 888.9,492.6 896.2,482.3 902.5,471.7 907.8,460.8 912.2,449.8 915.7,438.7 918.1,427.4 919.6,416.2 920.2,404.9 919.8,393.7 918.5,382.7 916.3,371.7 913.2,361.0 909.2,350.4 904.5,340.1 898.9,330.1 892.6,320.5 885.6,311.2 877.9,302.2 869.5,293.7 860.5,285.6 851.0,277.9 840.9,270.8 830.2,264.1 819.2,257.9 807.7,252.2 795.8,247.1 783.6,242.5 771.1,238.4 758.3,234.9 745.3,232.0 732.1,229.7 718.8,227.9 705.3,226.8 691.9,226.2 678.3,226.2 664.9,226.8 651.4,227.9 638.1,229.7 624.9,232.0 611.9,234.9 599.1,238.4 586.6,242.5 574.4,247.1 562.5,252.2 551.0,257.9 540.0,264.1 529.3,270.8 519.2,277.9 509.7,285.6 500.7,293.7 492.3,302.2 484.6,311.2 477.6,320.5 471.3,330.1 465.7,340.1 461.0,350.4 457.0,361.0 453.9,371.7 451.7,382.7 450.4,393.7 450.0,404.9 450.6,416.2 452.1,427.4 454.5,438.7 458.0,449.8 462.4,460.8 467.7,471.7 474.0,482.3 481.3,492.6 489.4,502.6 498.5,512.2 508.4,521.4 519.2,530.0 530.8,538.2 543.1,545.8 556.0,552.7 569.7,559.0 583.9,564.6 598.5,569.4 613.7,573.5 629.2,576.8 644.9,579.3 660.9,581.0 677.0,581.8ZM693.1,591.0 709.1,590.2 725.0,588.5 740.7,586.0 756.1,582.7 771.1,578.7 785.7,573.8 799.8,568.3 813.3,562.0 826.2,555.1 838.5,547.5 849.9,539.4 860.6,530.7 870.5,521.6 879.5,512.0 887.6,502.0 894.9,491.7 901.1,481.1 906.5,470.3 910.8,459.3 914.2,448.2 916.7,437.0 918.2,425.7 918.7,414.5 918.4,403.3 917.1,392.2 914.9,381.3 911.8,370.5 907.9,360.0 903.2,349.8 897.7,339.8 891.4,330.1 884.5,320.8 876.8,311.9 868.5,303.4 859.5,295.3 850.0,287.6 840.0,280.4 829.4,273.7 818.4,267.6 807.0,261.9 795.2,256.7 783.0,252.1 770.6,248.1 757.9,244.6 744.9,241.7 731.8,239.4 718.6,237.6 705.2,236.4 691.8,235.9 678.4,235.9 665.0,236.4 651.6,237.6 638.4,239.4 625.3,241.7 612.3,244.6 599.6,248.1 587.2,252.1 575.0,256.7 563.2,261.9 551.8,267.6 540.8,273.7 530.2,280.4 520.2,287.6 510.7,295.3 501.7,303.4 493.4,311.9 485.7,320.8 478.8,330.1 472.5,339.8 467.0,349.8 462.3,360.0 458.4,370.5 455.3,381.3 453.1,392.2 451.8,403.3 451.5,414.5 452.0,425.7 453.5,437.0 456.0,448.2 459.4,459.3 463.7,470.3 469.1,481.1 475.3,491.7 482.6,502.0 490.7,512.0 499.7,521.6 509.6,530.7 520.3,539.4 531.7,547.5 544.0,555.1 556.9,562.0 570.4,568.3 584.5,573.8 599.1,578.7 614.1,582.7 629.5,586.0 645.2,588.5 661.1,590.2 677.1,591.0ZM693.1,600.1 709.0,599.3 724.7,597.6 740.3,595.1 755.6,591.9 770.5,587.8 785.0,583.0 799.0,577.4 812.5,571.1 825.3,564.2 837.5,556.7 848.9,548.6 859.5,539.9 869.3,530.8 878.3,521.3 886.4,511.3 893.5,501.0 899.8,490.5 905.1,479.7 909.4,468.7 912.8,457.6 915.3,446.4 916.8,435.1 917.3,423.9 917.0,412.7 915.7,401.7 913.5,390.8 910.5,380.0 906.6,369.5 901.9,359.3 896.5,349.3 890.2,339.6 883.3,330.3 875.7,321.4 867.4,312.9 858.5,304.8 849.1,297.2 839.1,290.0 828.6,283.3 817.7,277.1 806.3,271.4 794.6,266.3 782.5,261.7 770.1,257.7 757.5,254.2 744.6,251.3 731.6,248.9 718.4,247.2 705.1,246.0 691.8,245.4 678.4,245.4 665.1,246.0 651.8,247.2 638.6,248.9 625.6,251.3 612.7,254.2 600.1,257.7 587.7,261.7 575.6,266.3 563.9,271.4 552.5,277.1 541.6,283.3 531.1,290.0 521.1,297.2 511.7,304.8 502.8,312.9 494.5,321.4 486.9,330.3 480.0,339.6 473.7,349.3 468.3,359.3 463.6,369.5 459.7,380.0 456.7,390.8 454.5,401.7 453.2,412.7 452.9,423.9 453.4,435.1 454.9,446.4 457.4,457.6 460.8,468.7 465.1,479.7 470.4,490.5 476.7,501.0 483.8,511.3 491.9,521.3 500.9,530.8 510.7,539.9 521.3,548.6 532.7,556.7 544.9,564.2 557.7,571.1 571.2,577.4 585.2,583.0 599.7,587.8 614.6,591.9 629.9,595.1 645.5,597.6 661.2,599.3 677.1,600.1ZM693.0,609.1 708.8,608.3 724.5,606.6 739.9,604.1 755.1,600.9 770.0,596.8 784.4,592.0 798.3,586.4 811.7,580.2 824.4,573.3 836.5,565.8 847.8,557.7 858.4,549.1 868.2,540.0 877.1,530.4 885.1,520.5 892.3,510.2 898.5,499.7 903.7,488.9 908.1,477.9 911.5,466.8 913.9,455.6 915.4,444.4 915.9,433.2 915.6,422.1 914.3,411.0 912.2,400.1 909.2,389.4 905.3,378.9 900.7,368.6 895.2,358.7 889.1,349.0 882.2,339.8 874.6,330.8 866.4,322.3 857.6,314.2 848.2,306.6 838.2,299.4 827.8,292.8 816.9,286.6 805.6,280.9 794.0,275.8 782.0,271.2 769.7,267.1 757.1,263.7 744.3,260.8 731.3,258.4 718.2,256.7 705.0,255.5 691.7,254.9 678.5,254.9 665.2,255.5 652.0,256.7 638.9,258.4 625.9,260.8 613.1,263.7 600.5,267.1 588.2,271.2 576.2,275.8 564.6,280.9 553.3,286.6 542.4,292.8 532.0,299.4 522.0,306.6 512.6,314.2 503.8,322.3 495.6,330.8 488.0,339.8 481.1,349.0 475.0,358.7 469.5,368.6 464.9,378.9 461.0,389.4 458.0,400.1 455.9,411.0 454.6,422.1 454.3,433.2 454.8,444.4 456.3,455.6 458.7,466.8 462.1,477.9 466.5,488.9 471.7,499.7 477.9,510.2 485.1,520.5 493.1,530.4 502.0,540.0 511.8,549.1 522.4,557.7 533.7,565.8 545.8,573.3 558.5,580.2 571.9,586.4 585.8,592.0 600.2,596.8 615.1,600.9 630.3,604.1 645.7,606.6 661.4,608.3 677.2,609.1ZM693.0,618.0 708.7,617.1 724.2,615.5 739.6,613.0 754.7,609.7 769.4,605.7 783.8,600.9 797.6,595.4 810.9,589.1 823.5,582.2 835.5,574.7 846.8,566.7 857.3,558.1 867.0,549.0 875.9,539.4 883.9,529.5 891.0,519.3 897.2,508.8 902.4,498.0 906.7,487.1 910.1,476.0 912.5,464.8 914.0,453.6 914.6,442.4 914.2,431.3 913.0,420.3 910.8,409.4 907.9,398.7 904.1,388.2 899.4,377.9 894.0,368.0 887.9,358.4 881.1,349.1 873.5,340.2 865.4,331.7 856.6,323.6 847.3,315.9 837.4,308.8 827.0,302.1 816.2,295.9 805.0,290.3 793.4,285.1 781.4,280.5 769.2,276.5 756.7,273.0 744.0,270.1 731.1,267.8 718.0,266.0 704.9,264.9 691.7,264.3 678.5,264.3 665.3,264.9 652.2,266.0 639.1,267.8 626.2,270.1 613.5,273.0 601.0,276.5 588.8,280.5 576.8,285.1 565.2,290.3 554.0,295.9 543.2,302.1 532.8,308.8 522.9,315.9 513.6,323.6 504.8,331.7 496.7,340.2 489.1,349.1 482.3,358.4 476.2,368.0 470.8,377.9 466.1,388.2 462.3,398.7 459.4,409.4 457.2,420.3 456.0,431.3 455.6,442.4 456.2,453.6 457.7,464.8 460.1,476.0 463.5,487.1 467.8,498.0 473.0,508.8 479.2,519.3 486.3,529.5 494.3,539.4 503.2,549.0 512.9,558.1 523.4,566.7 534.7,574.7 546.7,582.2 559.3,589.1 572.6,595.4 586.4,600.9 600.8,605.7 615.5,609.7 630.6,613.0 646.0,615.5 661.5,617.1 677.2,618.0ZM692.9,626.7 708.5,625.9 724.0,624.2 739.2,621.8 754.2,618.5 768.9,614.5 783.1,609.7 796.9,604.2 810.1,597.9 822.7,591.1 834.6,583.6 845.8,575.5 856.3,567.0 865.9,557.9 874.7,548.4 882.7,538.5 889.7,528.3 895.9,517.7 901.1,507.0 905.4,496.1 908.7,485.0 911.2,473.9 912.6,462.7 913.2,451.5 912.9,440.4 911.6,429.4 909.5,418.5 906.6,407.8 902.8,397.3 898.2,387.1 892.9,377.2 886.8,367.6 880.0,358.3 872.5,349.4 864.4,340.9 855.7,332.8 846.4,325.2 836.6,318.0 826.3,311.3 815.5,305.2 804.3,299.5 792.8,294.4 780.9,289.8 768.7,285.8 756.3,282.3 743.7,279.4 730.8,277.0 717.9,275.3 704.8,274.1 691.7,273.5 678.5,273.5 665.4,274.1 652.3,275.3 639.4,277.0 626.5,279.4 613.9,282.3 601.5,285.8 589.3,289.8 577.4,294.4 565.9,299.5 554.7,305.2 543.9,311.3 533.6,318.0 523.8,325.2 514.5,332.8 505.8,340.9 497.7,349.4 490.2,358.3 483.4,367.6 477.3,377.2 472.0,387.1 467.4,397.3 463.6,407.8 460.7,418.5 458.6,429.4 457.3,440.4 457.0,451.5 457.6,462.7 459.0,473.9 461.5,485.0 464.8,496.1 469.1,507.0 474.3,517.7 480.5,528.3 487.5,538.5 495.5,548.4 504.3,557.9 513.9,567.0 524.4,575.5 535.6,583.6 547.5,591.1 560.1,597.9 573.3,604.2 587.1,609.7 601.3,614.5 616.0,618.5 631.0,621.8 646.2,624.2 661.7,625.9 677.3,626.7ZM692.9,635.4 708.4,634.5 723.7,632.9 738.9,630.4 753.8,627.2 768.4,623.1 782.5,618.4 796.2,612.9 809.3,606.7 821.8,599.8 833.7,592.3 844.8,584.3 855.2,575.7 864.8,566.7 873.5,557.2 881.5,547.3 888.5,537.1 894.6,526.6 899.8,515.9 904.1,505.0 907.4,494.0 909.8,482.8 911.3,471.7 911.9,460.5 911.5,449.4 910.3,438.4 908.2,427.6 905.3,416.9 901.6,406.4 897.0,396.2 891.7,386.3 885.6,376.6 878.9,367.4 871.4,358.5 863.4,350.0 854.7,341.9 845.5,334.3 835.7,327.2 825.5,320.5 814.8,314.3 803.7,308.7 792.2,303.5 780.4,299.0 768.3,294.9 755.9,291.5 743.3,288.5 730.6,286.2 717.7,284.5 704.7,283.3 691.6,282.7 678.6,282.7 665.5,283.3 652.5,284.5 639.6,286.2 626.9,288.5 614.3,291.5 601.9,294.9 589.8,299.0 578.0,303.5 566.5,308.7 555.4,314.3 544.7,320.5 534.5,327.2 524.7,334.3 515.5,341.9 506.8,350.0 498.8,358.5 491.3,367.4 484.6,376.6 478.5,386.3 473.2,396.2 468.6,406.4 464.9,416.9 462.0,427.6 459.9,438.4 458.7,449.4 458.3,460.5 458.9,471.7 460.4,482.8 462.8,494.0 466.1,505.0 470.4,515.9 475.6,526.6 481.7,537.1 488.7,547.3 496.7,557.2 505.4,566.7 515.0,575.7 525.4,584.3 536.5,592.3 548.4,599.8 560.9,606.7 574.0,612.9 587.7,618.4 601.8,623.1 616.4,627.2 631.3,630.4 646.5,632.9 661.8,634.5 677.3,635.4ZM692.8,643.9 708.2,643.1 723.5,641.4 738.6,639.0 753.4,635.7 767.8,631.7 781.9,626.9 795.5,621.4 808.5,615.3 821.0,608.4 832.7,601.0 843.8,593.0 854.1,584.4 863.7,575.4 872.4,565.9 880.3,556.1 887.2,545.9 893.3,535.4 898.5,524.7 902.8,513.8 906.1,502.8 908.5,491.7 910.0,480.5 910.6,469.4 910.2,458.3 909.0,447.3 907.0,436.5 904.1,425.8 900.3,415.4 895.8,405.2 890.5,395.2 884.5,385.6 877.8,376.4 870.4,367.5 862.4,359.0 853.8,351.0 844.6,343.4 834.9,336.2 824.7,329.5 814.1,323.4 803.0,317.7 791.6,312.6 779.9,308.0 767.8,304.0 755.5,300.5 743.0,297.6 730.3,295.3 717.5,293.5 704.6,292.4 691.6,291.8 678.6,291.8 665.6,292.4 652.7,293.5 639.9,295.3 627.2,297.6 614.7,300.5 602.4,304.0 590.3,308.0 578.6,312.6 567.2,317.7 556.1,323.4 545.5,329.5 535.3,336.2 525.6,343.4 516.4,351.0 507.8,359.0 499.8,367.5 492.4,376.4 485.7,385.6 479.7,395.2 474.4,405.2 469.9,415.4 466.1,425.8 463.2,436.5 461.2,447.3 460.0,458.3 459.6,469.4 460.2,480.5 461.7,491.7 464.1,502.8 467.4,513.8 471.7,524.7 476.9,535.4 483.0,545.9 489.9,556.1 497.8,565.9 506.5,575.4 516.1,584.4 526.4,593.0 537.5,601.0 549.2,608.4 561.7,615.3 574.7,621.4 588.3,626.9 602.4,631.7 616.8,635.7 631.6,639.0 646.7,641.4 662.0,643.1 677.4,643.9ZM692.8,652.3 708.1,651.5 723.2,649.8 738.2,647.4 752.9,644.2 767.3,640.2 781.3,635.4 794.8,629.9 807.8,623.8 820.1,616.9 831.8,609.5 842.8,601.5 853.1,593.0 862.6,584.0 871.3,574.5 879.1,564.7 886.0,554.5 892.1,544.1 897.2,533.4 901.5,522.5 904.8,511.5 907.2,500.4 908.7,489.3 909.2,478.2 908.9,467.1 907.7,456.2 905.7,445.3 902.8,434.7 899.1,424.2 894.6,414.0 889.4,404.1 883.4,394.5 876.7,385.3 869.4,376.4 861.4,367.9 852.9,359.9 843.7,352.3 834.1,345.1 824.0,338.5 813.4,332.3 802.4,326.7 791.1,321.6 779.4,317.0 767.4,313.0 755.2,309.5 742.7,306.6 730.1,304.3 717.3,302.5 704.5,301.3 691.6,300.7 678.6,300.7 665.7,301.3 652.9,302.5 640.1,304.3 627.5,306.6 615.0,309.5 602.8,313.0 590.8,317.0 579.1,321.6 567.8,326.7 556.8,332.3 546.2,338.5 536.1,345.1 526.5,352.3 517.3,359.9 508.8,367.9 500.8,376.4 493.5,385.3 486.8,394.5 480.8,404.1 475.6,414.0 471.1,424.2 467.4,434.7 464.5,445.3 462.5,456.2 461.3,467.1 461.0,478.2 461.5,489.3 463.0,500.4 465.4,511.5 468.7,522.5 473.0,533.4 478.1,544.1 484.2,554.5 491.1,564.7 498.9,574.5 507.6,584.0 517.1,593.0 527.4,601.5 538.4,609.5 550.1,616.9 562.4,623.8 575.4,629.9 588.9,635.4 602.9,640.2 617.3,644.2 632.0,647.4 647.0,649.8 662.1,651.5 677.4,652.3ZM692.7,660.6 707.9,659.8 723.0,658.2 737.9,655.7 752.5,652.5 766.8,648.5 780.7,643.8 794.1,638.3 807.0,632.1 819.3,625.3 830.9,617.9 841.9,609.9 852.1,601.4 861.5,592.4 870.1,583.0 877.9,573.2 884.8,563.1 890.8,552.6 896.0,542.0 900.2,531.1 903.5,520.1 905.9,509.1 907.4,498.0 908.0,486.9 907.6,475.8 906.5,464.9 904.4,454.1 901.6,443.4 897.9,433.0 893.4,422.8 888.2,412.9 882.3,403.3 875.7,394.1 868.4,385.2 860.5,376.8 851.9,368.7 842.9,361.1 833.3,354.0 823.2,347.3 812.7,341.2 801.8,335.5 790.5,330.4 778.9,325.9 767.0,321.8 754.8,318.4 742.4,315.5 729.9,313.1 717.2,311.4 704.4,310.2 691.5,309.6 678.7,309.6 665.8,310.2 653.0,311.4 640.3,313.1 627.8,315.5 615.4,318.4 603.2,321.8 591.3,325.9 579.7,330.4 568.4,335.5 557.5,341.2 547.0,347.3 536.9,354.0 527.3,361.1 518.3,368.7 509.7,376.8 501.8,385.2 494.5,394.1 487.9,403.3 482.0,412.9 476.8,422.8 472.3,433.0 468.6,443.4 465.8,454.1 463.7,464.9 462.6,475.8 462.2,486.9 462.8,498.0 464.3,509.1 466.7,520.1 470.0,531.1 474.2,542.0 479.4,552.6 485.4,563.1 492.3,573.2 500.1,583.0 508.7,592.4 518.1,601.4 528.3,609.9 539.3,617.9 550.9,625.3 563.2,632.1 576.1,638.3 589.5,643.8 603.4,648.5 617.7,652.5 632.3,655.7 647.2,658.2 662.3,659.8 677.5,660.6ZM692.7,668.8 707.8,668.0 722.8,666.4 737.6,664.0 752.1,660.7 766.3,656.7 780.1,652.0 793.4,646.6 806.2,640.4 818.5,633.6 830.0,626.2 840.9,618.3 851.1,609.8 860.5,600.8 869.0,591.4 876.8,581.6 883.6,571.5 889.6,561.1 894.7,550.4 898.9,539.6 902.2,528.7 904.6,517.6 906.1,506.5 906.7,495.4 906.4,484.4 905.2,473.5 903.2,462.7 900.4,452.1 896.7,441.6 892.3,431.5 887.1,421.6 881.2,412.0 874.6,402.8 867.4,394.0 859.5,385.5 851.0,377.5 842.0,369.9 832.5,362.7 822.5,356.1 812.0,349.9 801.2,344.3 789.9,339.2 778.4,334.6 766.5,330.6 754.4,327.1 742.1,324.2 729.6,321.9 717.0,320.2 704.3,319.0 691.5,318.4 678.7,318.4 665.9,319.0 653.2,320.2 640.6,321.9 628.1,324.2 615.8,327.1 603.7,330.6 591.8,334.6 580.3,339.2 569.0,344.3 558.2,349.9 547.7,356.1 537.7,362.7 528.2,369.9 519.2,377.5 510.7,385.5 502.8,394.0 495.6,402.8 489.0,412.0 483.1,421.6 477.9,431.5 473.5,441.6 469.8,452.1 467.0,462.7 465.0,473.5 463.8,484.4 463.5,495.4 464.1,506.5 465.6,517.6 468.0,528.7 471.3,539.6 475.5,550.4 480.6,561.1 486.6,571.5 493.4,581.6 501.2,591.4 509.7,600.8 519.1,609.8 529.3,618.3 540.2,626.2 551.7,633.6 564.0,640.4 576.8,646.6 590.1,652.0 603.9,656.7 618.1,660.7 632.6,664.0 647.4,666.4 662.4,668.0 677.5,668.8ZM692.6,677.0 707.6,676.1 722.5,674.5 737.2,672.1 751.7,668.9 765.8,664.9 779.5,660.2 792.8,654.7 805.5,648.6 817.7,641.8 829.2,634.5 840.0,626.5 850.1,618.0 859.4,609.1 867.9,599.7 875.6,589.9 882.5,579.8 888.4,569.5 893.5,558.8 897.7,548.0 901.0,537.1 903.3,526.1 904.8,515.0 905.4,503.9 905.1,492.9 904.0,482.0 902.0,471.2 899.2,460.6 895.5,450.2 891.1,440.1 886.0,430.2 880.1,420.6 873.6,411.4 866.4,402.6 858.6,394.1 850.1,386.1 841.2,378.5 831.7,371.4 821.7,364.8 811.3,358.6 800.5,353.0 789.4,347.9 777.9,343.3 766.1,339.3 754.1,335.8 741.8,332.9 729.4,330.6 716.8,328.9 704.2,327.7 691.5,327.1 678.7,327.1 666.0,327.7 653.4,328.9 640.8,330.6 628.4,332.9 616.1,335.8 604.1,339.3 592.3,343.3 580.8,347.9 569.7,353.0 558.9,358.6 548.5,364.8 538.5,371.4 529.0,378.5 520.1,386.1 511.6,394.1 503.8,402.6 496.6,411.4 490.1,420.6 484.2,430.2 479.1,440.1 474.7,450.2 471.0,460.6 468.2,471.2 466.2,482.0 465.1,492.9 464.8,503.9 465.4,515.0 466.9,526.1 469.2,537.1 472.5,548.0 476.7,558.8 481.8,569.5 487.7,579.8 494.6,589.9 502.3,599.7 510.8,609.1 520.1,618.0 530.2,626.5 541.0,634.5 552.5,641.8 564.7,648.6 577.4,654.7 590.7,660.2 604.4,664.9 618.5,668.9 633.0,672.1 647.7,674.5 662.6,676.1 677.6,677.0ZM692.6,685.0 707.5,684.2 722.3,682.5 736.9,680.1 751.3,676.9 765.3,672.9 779.0,668.2 792.1,662.8 804.8,656.7 816.9,649.9 828.3,642.6 839.1,634.7 849.1,626.2 858.4,617.3 866.8,607.9 874.5,598.2 881.3,588.1 887.2,577.7 892.3,567.1 896.5,556.3 899.7,545.4 902.1,534.4 903.6,523.4 904.2,512.3 903.9,501.3 902.7,490.4 900.8,479.7 898.0,469.1 894.4,458.7 890.0,448.5 884.9,438.7 879.1,429.1 872.6,419.9 865.4,411.1 857.6,402.7 849.3,394.7 840.3,387.1 830.9,380.0 821.0,373.3 810.7,367.2 799.9,361.6 788.8,356.5 777.4,351.9 765.7,347.9 753.7,344.4 741.5,341.5 729.2,339.2 716.7,337.5 704.1,336.3 691.4,335.7 678.8,335.7 666.1,336.3 653.5,337.5 641.0,339.2 628.7,341.5 616.5,344.4 604.5,347.9 592.8,351.9 581.4,356.5 570.3,361.6 559.5,367.2 549.2,373.3 539.3,380.0 529.9,387.1 520.9,394.7 512.6,402.7 504.8,411.1 497.6,419.9 491.1,429.1 485.3,438.7 480.2,448.5 475.8,458.7 472.2,469.1 469.4,479.7 467.5,490.4 466.3,501.3 466.0,512.3 466.6,523.4 468.1,534.4 470.5,545.4 473.7,556.3 477.9,567.1 483.0,577.7 488.9,588.1 495.7,598.2 503.4,607.9 511.8,617.3 521.1,626.2 531.1,634.7 541.9,642.6 553.3,649.9 565.4,656.7 578.1,662.8 591.2,668.2 604.9,672.9 618.9,676.9 633.3,680.1 647.9,682.5 662.7,684.2 677.6,685.0ZM694.4,367.9L692.6,685.0M713.0,367.0L707.5,684.2M731.4,365.3L722.3,682.5M749.5,362.7L736.9,680.1M767.4,359.3L751.3,676.9M784.8,355.0L765.3,672.9M801.7,350.0L779.0,668.2M817.9,344.2L792.1,662.8M833.6,337.7L804.8,656.7M848.4,330.5L816.9,649.9M862.5,322.7L828.3,642.6M875.6,314.3L839.1,634.7M887.9,305.3L849.1,626.2M899.1,295.9L858.4,617.3M909.4,286.0L866.8,607.9M918.6,275.7L874.5,598.2M926.7,265.2L881.3,588.1M933.7,254.3L887.2,577.7M939.7,243.2L892.3,567.1M944.5,232.0L896.5,556.3M948.2,220.6L899.7,545.4M950.8,209.2L902.1,534.4M952.3,197.7L903.6,523.4M952.7,186.3L904.2,512.3M952.1,175.0L903.9,501.3M950.4,163.7L902.7,490.4M947.7,152.7L900.8,479.7M944.0,141.8L898.0,469.1M939.3,131.2L894.4,458.7M933.8,120.9L890.0,448.5M927.3,110.8L884.9,438.7M920.0,101.1L879.1,429.1M911.9,91.8L872.6,419.9M903.0,82.9L865.4,411.1M893.5,74.4L857.6,402.7M883.2,66.3L849.3,394.7M872.3,58.6L840.3,387.1M860.8,51.5L830.9,380.0M848.8,44.8L821.0,373.3M836.2,38.7L810.7,367.2M823.2,33.0L799.9,361.6M809.8,27.9L788.8,356.5M796.0,23.4L777.4,351.9M781.9,19.4L765.7,347.9M767.5,15.9L753.7,344.4M752.8,13.0L741.5,341.5M738.0,10.7L729.2,339.2M723.0,9.0L716.7,337.5M707.9,7.8L704.1,336.3M692.7,7.2L691.4,335.7M677.5,7.2L678.8,335.7M662.3,7.8L666.1,336.3M647.2,9.0L653.5,337.5M632.2,10.7L641.0,339.2M617.4,13.0L628.7,341.5M602.7,15.9L616.5,344.4M588.3,19.4L604.5,347.9M574.2,23.4L592.8,351.9M560.4,27.9L581.4,356.5M547.0,33.0L570.3,361.6M534.0,38.7L559.5,367.2M521.4,44.8L549.2,373.3M509.4,51.5L539.3,380.0M497.9,58.6L529.9,387.1M487.0,66.3L520.9,394.7M476.7,74.4L512.6,402.7M467.2,82.9L504.8,411.1M458.3,91.8L497.6,419.9M450.2,101.1L491.1,429.1M442.9,110.8L485.3,438.7M436.4,120.9L480.2,448.5M430.9,131.2L475.8,458.7M426.2,141.8L472.2,469.1M422.5,152.7L469.4,479.7M419.8,163.7L467.5,490.4M418.1,175.0L466.3,501.3M417.5,186.3L466.0,512.3M417.9,197.7L466.6,523.4M419.4,209.2L468.1,534.4M422.0,220.6L470.5,545.4M425.7,232.0L473.7,556.3M430.5,243.2L477.9,567.1M436.5,254.3L483.0,577.7M443.5,265.2L488.9,588.1M451.6,275.7L495.7,598.2M460.8,286.0L503.4,607.9M471.1,295.9L511.8,617.3M482.3,305.3L521.1,626.2M494.6,314.3L531.1,634.7M507.7,322.7L541.9,642.6M521.8,330.5L553.3,649.9M536.6,337.7L565.4,656.7M552.3,344.2L578.1,662.8M568.5,350.0L591.2,668.2M585.4,355.0L604.9,672.9M602.8,359.3L618.9,676.9M620.7,362.7L633.3,680.1M638.8,365.3L647.9,682.5M657.2,367.0L662.7,684.2M675.8,367.9L677.6,685.0" fill="none" stroke="#7c7c7c" stroke-width="1" shape-rendering="crispEdges"/>
<g fill="none" stroke-width="1"><path d="M637.8,314.4L638.8,385.6M636.3,315.4L731.6,313.2M639.4,314.3L640.5,385.5M636.3,316.5L731.6,314.3M642.6,314.3L643.8,385.4M636.3,318.6L731.7,316.4M644.2,314.2L645.4,385.4M636.3,319.7L731.8,317.5M647.4,314.1L648.7,385.3M636.3,321.8L731.9,319.6M649.0,314.1L650.3,385.3M636.4,322.9L732.0,320.7M652.1,314.0L653.6,385.2M636.4,325.1L732.1,322.8M653.7,314.0L655.2,385.2M636.4,326.2L732.2,323.9M656.9,313.9L658.5,385.1M636.4,328.4L732.3,326.1M658.5,313.9L660.2,385.0M636.5,329.5L732.4,327.2M661.6,313.8L663.4,385.0M636.5,331.7L732.5,329.5M663.2,313.8L665.1,384.9M636.5,332.8L732.6,330.6M666.4,313.7L668.4,384.8M636.5,335.1L732.7,332.8M668.0,313.7L670.0,384.8M636.5,336.2L732.8,334.0M671.2,313.6L673.3,384.7M636.6,338.5L732.9,336.3M672.8,313.6L674.9,384.7M636.6,339.7L733.0,337.4M675.9,313.5L678.2,384.6M636.6,342.0L733.1,339.7M677.5,313.4L679.8,384.6M636.6,343.2L733.2,340.9M680.7,313.4L683.1,384.5M636.7,345.5L733.3,343.2M682.3,313.3L684.8,384.4M636.7,346.7L733.4,344.4M685.5,313.3L688.0,384.4M636.7,349.1L733.5,346.8M687.0,313.2L689.7,384.3M636.7,350.2L733.6,347.9M690.2,313.2L693.0,384.2M636.8,352.6L733.7,350.3M691.8,313.1L694.6,384.2M636.8,353.9L733.8,351.5M695.0,313.0L697.9,384.1M636.8,356.3L733.9,354.0M696.6,313.0L699.5,384.1M636.8,357.5L734.0,355.2M699.8,312.9L702.8,384.0M636.9,360.0L734.1,357.6M701.3,312.9L704.4,384.0M636.9,361.2L734.2,358.9M704.5,312.8L707.7,383.9M636.9,363.7L734.3,361.4M706.1,312.8L709.4,383.8M636.9,364.9L734.4,362.6M709.3,312.7L712.6,383.8M637.0,367.5L734.6,365.1M710.9,312.7L714.3,383.7M637.0,368.7L734.6,366.4M714.0,312.6L717.6,383.6M637.0,371.3L734.8,368.9M715.6,312.6L719.2,383.6M637.0,372.5L734.8,370.2M718.8,312.5L722.5,383.5M637.1,375.1L735.0,372.7M720.4,312.5L724.1,383.5M637.1,376.4L735.1,374.0M723.6,312.4L727.4,383.4M637.1,379.0L735.2,376.6M725.1,312.3L729.0,383.4M637.1,380.3L735.3,377.9M728.3,312.3L732.3,383.3M637.2,383.0L735.4,380.6M729.9,312.2L734.0,383.2M637.2,384.3L735.5,381.9" stroke="#4c4c4c" stroke-opacity="0.45"/><path d="M636.2,314.4L637.2,385.6M636.2,314.4L731.5,312.2M641.0,314.3L642.1,385.5M636.3,317.6L731.7,315.3M645.8,314.2L647.0,385.4M636.3,320.8L731.9,318.5M650.5,314.1L652.0,385.2M636.4,324.0L732.1,321.8M655.3,314.0L656.9,385.1M636.4,327.3L732.2,325.0M660.1,313.8L661.8,385.0M636.5,330.6L732.4,328.4M664.8,313.7L666.7,384.9M636.5,334.0L732.6,331.7M669.6,313.6L671.6,384.8M636.6,337.4L732.8,335.1M674.4,313.5L676.6,384.6M636.6,340.8L733.0,338.6M679.1,313.4L681.5,384.5M636.6,344.3L733.2,342.0M688.6,313.2L691.3,384.3M636.7,351.4L733.6,349.1M693.4,313.1L696.2,384.2M636.8,355.1L733.8,352.8M698.2,313.0L701.2,384.0M636.8,358.7L734.1,356.4M702.9,312.9L706.1,383.9M636.9,362.4L734.3,360.1M707.7,312.8L711.0,383.8M636.9,366.2L734.5,363.9M712.5,312.6L715.9,383.7M637.0,370.0L734.7,367.6M717.2,312.5L720.8,383.6M637.0,373.8L734.9,371.5M722.0,312.4L725.8,383.4M637.1,377.7L735.1,375.3M726.7,312.3L730.7,383.3M637.1,381.6L735.4,379.2M731.5,312.2L735.6,383.2M637.2,385.6L735.6,383.2" stroke="#404040" shape-rendering="crispEdges"/><path d="M683.9,313.3L686.4,384.4M636.7,347.9L733.4,345.6" stroke="#3a3a3a" stroke-width="2" shape-rendering="crispEdges"/></g>
<path d="M694.4,367.9 713.0,367.0 731.4,365.3 749.5,362.7 767.4,359.3 784.8,355.0 801.7,350.0 817.9,344.2 833.6,337.7 848.4,330.5 862.5,322.7 875.6,314.3 887.9,305.3 899.1,295.9 909.4,286.0 918.6,275.7 926.7,265.2 933.7,254.3 939.7,243.2 944.5,232.0 948.2,220.6 950.8,209.2 952.3,197.7 952.7,186.3 952.1,175.0 950.4,163.7 947.7,152.7 944.0,141.8 939.3,131.2 933.8,120.9 927.3,110.8 920.0,101.1 911.9,91.8 903.0,82.9 893.5,74.4 883.2,66.3 872.3,58.6 860.8,51.5 848.8,44.8 836.2,38.7 823.2,33.0 809.8,27.9 796.0,23.4 781.9,19.4 767.5,15.9 752.8,13.0 738.0,10.7 723.0,9.0 707.9,7.8 692.7,7.2 677.5,7.2 662.3,7.8 647.2,9.0 632.2,10.7 617.4,13.0 602.7,15.9 588.3,19.4 574.2,23.4 560.4,27.9 547.0,33.0 534.0,38.7 521.4,44.8 509.4,51.5 497.9,58.6 487.0,66.3 476.7,74.4 467.2,82.9 458.3,91.8 450.2,101.1 442.9,110.8 436.4,120.9 430.9,131.2 426.2,141.8 422.5,152.7 419.8,163.7 418.1,175.0 417.5,186.3 417.9,197.7 419.4,209.2 422.0,220.6 425.7,232.0 430.5,243.2 436.5,254.3 443.5,265.2 451.6,275.7 460.8,286.0 471.1,295.9 482.3,305.3 494.6,314.3 507.7,322.7 521.8,330.5 536.6,337.7 552.3,344.2 568.5,350.0 585.4,355.0 602.8,359.3 620.7,362.7 638.8,365.3 657.2,367.0 675.8,367.9ZM694.3,380.1 712.8,379.3 731.0,377.5 749.1,374.9 766.8,371.5 784.0,367.3 800.8,362.2 817.0,356.5 832.4,350.0 847.2,342.8 861.1,335.0 874.2,326.6 886.4,317.6 897.6,308.2 907.8,298.3 916.9,288.1 925.0,277.5 932.0,266.6 937.9,255.6 942.7,244.3 946.4,232.9 948.9,221.5 950.4,210.1 950.9,198.7 950.2,187.3 948.6,176.1 945.9,165.0 942.2,154.2 937.6,143.6 932.1,133.2 925.7,123.2 918.5,113.5 910.4,104.1 901.6,95.2 892.1,86.7 881.9,78.6 871.1,70.9 859.7,63.8 847.7,57.1 835.3,50.9 822.3,45.3 809.0,40.2 795.3,35.6 781.3,31.6 766.9,28.2 752.4,25.3 737.6,23.0 722.7,21.2 707.7,20.0 692.6,19.5 677.6,19.5 662.5,20.0 647.5,21.2 632.6,23.0 617.8,25.3 603.3,28.2 588.9,31.6 574.9,35.6 561.2,40.2 547.9,45.3 534.9,50.9 522.5,57.1 510.5,63.8 499.1,70.9 488.3,78.6 478.1,86.7 468.6,95.2 459.8,104.1 451.7,113.5 444.5,123.2 438.1,133.2 432.6,143.6 428.0,154.2 424.3,165.0 421.6,176.1 420.0,187.3 419.3,198.7 419.8,210.1 421.3,221.5 423.8,232.9 427.5,244.3 432.3,255.6 438.2,266.6 445.2,277.5 453.3,288.1 462.4,298.3 472.6,308.2 483.8,317.6 496.0,326.6 509.1,335.0 523.0,342.8 537.8,350.0 553.2,356.5 569.4,362.2 586.2,367.3 603.4,371.5 621.1,374.9 639.2,377.5 657.4,379.3 675.9,380.1ZM694.3,392.2 712.5,391.3 730.7,389.6 748.6,387.0 766.1,383.6 783.3,379.3 799.9,374.3 816.0,368.5 831.4,362.1 846.0,354.9 859.9,347.1 872.8,338.7 884.9,329.8 896.0,320.3 906.1,310.5 915.2,300.2 923.3,289.7 930.2,278.8 936.1,267.7 940.9,256.5 944.5,245.1 947.1,233.7 948.6,222.3 949.1,210.8 948.4,199.5 946.8,188.3 944.1,177.2 940.5,166.4 936.0,155.7 930.5,145.4 924.1,135.4 917.0,125.6 909.0,116.3 900.2,107.4 890.8,98.8 880.7,90.7 869.9,83.1 858.6,75.9 846.7,69.2 834.3,63.1 821.5,57.4 808.2,52.3 794.6,47.7 780.7,43.7 766.4,40.3 752.0,37.4 737.3,35.0 722.5,33.3 707.6,32.1 692.6,31.5 677.6,31.5 662.6,32.1 647.7,33.3 632.9,35.0 618.2,37.4 603.8,40.3 589.5,43.7 575.6,47.7 562.0,52.3 548.7,57.4 535.9,63.1 523.5,69.2 511.6,75.9 500.3,83.1 489.5,90.7 479.4,98.8 470.0,107.4 461.2,116.3 453.2,125.6 446.1,135.4 439.7,145.4 434.2,155.7 429.7,166.4 426.1,177.2 423.4,188.3 421.8,199.5 421.1,210.8 421.6,222.3 423.1,233.7 425.7,245.1 429.3,256.5 434.1,267.7 440.0,278.8 446.9,289.7 455.0,300.2 464.1,310.5 474.2,320.3 485.3,329.8 497.4,338.7 510.3,347.1 524.2,354.9 538.8,362.1 554.2,368.5 570.3,374.3 586.9,379.3 604.1,383.6 621.6,387.0 639.5,389.6 657.7,391.3 675.9,392.2ZM694.2,404.0 712.3,403.2 730.3,401.4 748.1,398.9 765.5,395.5 782.6,391.2 799.1,386.2 815.0,380.5 830.3,374.0 844.8,366.8 858.6,359.0 871.5,350.6 883.5,341.7 894.5,332.3 904.6,322.4 913.6,312.2 921.6,301.6 928.5,290.8 934.3,279.7 939.1,268.5 942.7,257.1 945.3,245.7 946.8,234.3 947.3,222.9 946.7,211.5 945.0,200.3 942.4,189.3 938.8,178.4 934.3,167.8 928.9,157.4 922.6,147.4 915.5,137.7 907.5,128.3 898.9,119.4 889.5,110.8 879.4,102.7 868.8,95.1 857.5,87.9 845.7,81.2 833.4,75.0 820.6,69.4 807.5,64.3 793.9,59.7 780.1,55.7 765.9,52.2 751.6,49.3 737.0,47.0 722.3,45.2 707.4,44.1 692.6,43.5 677.6,43.5 662.8,44.1 647.9,45.2 633.2,47.0 618.6,49.3 604.3,52.2 590.1,55.7 576.3,59.7 562.7,64.3 549.6,69.4 536.8,75.0 524.5,81.2 512.7,87.9 501.4,95.1 490.8,102.7 480.7,110.8 471.3,119.4 462.7,128.3 454.7,137.7 447.6,147.4 441.3,157.4 435.9,167.8 431.4,178.4 427.8,189.3 425.2,200.3 423.5,211.5 422.9,222.9 423.4,234.3 424.9,245.7 427.5,257.1 431.1,268.5 435.9,279.7 441.7,290.8 448.6,301.6 456.6,312.2 465.6,322.4 475.7,332.3 486.7,341.7 498.7,350.6 511.6,359.0 525.4,366.8 539.9,374.0 555.2,380.5 571.1,386.2 587.6,391.2 604.7,395.5 622.1,398.9 639.9,401.4 657.9,403.2 676.0,404.0ZM694.1,415.7 712.1,414.9 730.0,413.1 747.6,410.6 764.9,407.2 781.8,402.9 798.2,397.9 814.1,392.2 829.2,385.7 843.7,378.6 857.3,370.8 870.1,362.4 882.0,353.5 893.0,344.1 903.0,334.3 912.0,324.0 919.9,313.5 926.8,302.6 932.6,291.6 937.3,280.3 941.0,269.0 943.5,257.6 945.0,246.1 945.5,234.7 944.9,223.4 943.3,212.2 940.7,201.1 937.2,190.3 932.7,179.6 927.3,169.3 921.0,159.2 914.0,149.5 906.1,140.2 897.5,131.2 888.2,122.7 878.2,114.6 867.6,106.9 856.4,99.7 844.7,93.0 832.5,86.9 819.8,81.2 806.7,76.1 793.3,71.5 779.5,67.5 765.4,64.0 751.2,61.1 736.7,58.8 722.0,57.0 707.3,55.9 692.5,55.3 677.7,55.3 662.9,55.9 648.2,57.0 633.5,58.8 619.0,61.1 604.8,64.0 590.7,67.5 576.9,71.5 563.5,76.1 550.4,81.2 537.7,86.9 525.5,93.0 513.8,99.7 502.6,106.9 492.0,114.6 482.0,122.7 472.7,131.2 464.1,140.2 456.2,149.5 449.2,159.2 442.9,169.3 437.5,179.6 433.0,190.3 429.5,201.1 426.9,212.2 425.3,223.4 424.7,234.7 425.2,246.1 426.7,257.6 429.2,269.0 432.9,280.3 437.6,291.6 443.4,302.6 450.3,313.5 458.2,324.0 467.2,334.3 477.2,344.1 488.2,353.5 500.1,362.4 512.9,370.8 526.5,378.6 541.0,385.7 556.1,392.2 572.0,397.9 588.4,402.9 605.3,407.2 622.6,410.6 640.2,413.1 658.1,414.9 676.1,415.7ZM694.1,427.3 711.9,426.4 729.7,424.7 747.2,422.1 764.4,418.7 781.1,414.5 797.4,409.5 813.1,403.7 828.2,397.3 842.5,390.1 856.1,382.4 868.8,374.0 880.6,365.1 891.5,355.7 901.5,345.9 910.4,335.7 918.3,325.1 925.1,314.3 930.9,303.3 935.6,292.0 939.2,280.7 941.8,269.3 943.3,257.8 943.8,246.4 943.2,235.1 941.6,223.9 939.0,212.8 935.5,202.0 931.1,191.4 925.7,181.0 919.5,170.9 912.5,161.2 904.7,151.9 896.2,142.9 886.9,134.4 877.0,126.2 866.5,118.6 855.3,111.4 843.7,104.7 831.6,98.5 819.0,92.9 806.0,87.7 792.6,83.2 778.9,79.1 764.9,75.7 750.8,72.8 736.4,70.4 721.8,68.7 707.2,67.5 692.5,66.9 677.7,66.9 663.0,67.5 648.4,68.7 633.8,70.4 619.4,72.8 605.3,75.7 591.3,79.1 577.6,83.2 564.2,87.7 551.2,92.9 538.6,98.5 526.5,104.7 514.9,111.4 503.7,118.6 493.2,126.2 483.3,134.4 474.0,142.9 465.5,151.9 457.7,161.2 450.7,170.9 444.5,181.0 439.1,191.4 434.7,202.0 431.2,212.8 428.6,223.9 427.0,235.1 426.4,246.4 426.9,257.8 428.4,269.3 431.0,280.7 434.6,292.0 439.3,303.3 445.1,314.3 451.9,325.1 459.8,335.7 468.7,345.9 478.7,355.7 489.6,365.1 501.4,374.0 514.1,382.4 527.7,390.1 542.0,397.3 557.1,403.7 572.8,409.5 589.1,414.5 605.8,418.7 623.0,422.1 640.5,424.7 658.3,426.4 676.1,427.3ZM694.0,438.6 711.7,437.8 729.3,436.0 746.7,433.5 763.8,430.1 780.4,425.9 796.6,420.9 812.2,415.1 827.2,408.7 841.4,401.6 854.9,393.8 867.5,385.4 879.3,376.6 890.1,367.2 900.0,357.4 908.8,347.2 916.7,336.6 923.5,325.8 929.2,314.8 933.9,303.6 937.5,292.2 940.1,280.8 941.6,269.4 942.0,258.0 941.5,246.7 939.9,235.4 937.4,224.4 933.9,213.5 929.5,202.9 924.2,192.6 918.0,182.5 911.1,172.8 903.3,163.4 894.8,154.5 885.7,145.9 875.8,137.8 865.3,130.1 854.3,122.9 842.7,116.3 830.7,110.1 818.1,104.4 805.2,99.3 791.9,94.7 778.3,90.6 764.5,87.2 750.4,84.3 736.1,81.9 721.6,80.2 707.0,79.0 692.4,78.4 677.8,78.4 663.2,79.0 648.6,80.2 634.1,81.9 619.8,84.3 605.7,87.2 591.9,90.6 578.3,94.7 565.0,99.3 552.1,104.4 539.5,110.1 527.5,116.3 515.9,122.9 504.9,130.1 494.4,137.8 484.5,145.9 475.4,154.5 466.9,163.4 459.1,172.8 452.2,182.5 446.0,192.6 440.7,202.9 436.3,213.5 432.8,224.4 430.3,235.4 428.7,246.7 428.2,258.0 428.6,269.4 430.1,280.8 432.7,292.2 436.3,303.6 441.0,314.8 446.7,325.8 453.5,336.6 461.4,347.2 470.2,357.4 480.1,367.2 490.9,376.6 502.7,385.4 515.3,393.8 528.8,401.6 543.0,408.7 558.0,415.1 573.6,420.9 589.8,425.9 606.4,430.1 623.5,433.5 640.9,436.0 658.5,437.8 676.2,438.6ZM693.9,449.8 711.5,448.9 729.0,447.2 746.3,444.7 763.2,441.3 779.8,437.1 795.8,432.1 811.3,426.4 826.1,419.9 840.3,412.8 853.7,405.1 866.2,396.7 877.9,387.8 888.7,378.5 898.5,368.7 907.3,358.5 915.1,348.0 921.8,337.2 927.5,326.1 932.2,314.9 935.8,303.6 938.4,292.2 939.9,280.8 940.3,269.4 939.8,258.1 938.3,246.9 935.7,235.8 932.3,224.9 927.9,214.3 922.7,204.0 916.6,193.9 909.6,184.2 902.0,174.8 893.5,165.9 884.4,157.3 874.6,149.2 864.2,141.5 853.3,134.3 841.8,127.6 829.8,121.5 817.3,115.8 804.5,110.7 791.3,106.1 777.8,102.0 764.0,98.6 750.0,95.6 735.7,93.3 721.4,91.6 706.9,90.4 692.4,89.8 677.8,89.8 663.3,90.4 648.8,91.6 634.5,93.3 620.2,95.6 606.2,98.6 592.4,102.0 578.9,106.1 565.7,110.7 552.9,115.8 540.4,121.5 528.4,127.6 516.9,134.3 506.0,141.5 495.6,149.2 485.8,157.3 476.7,165.9 468.2,174.8 460.6,184.2 453.6,193.9 447.5,204.0 442.3,214.3 437.9,224.9 434.5,235.8 431.9,246.9 430.4,258.1 429.9,269.4 430.3,280.8 431.8,292.2 434.4,303.6 438.0,314.9 442.7,326.1 448.4,337.2 455.1,348.0 462.9,358.5 471.7,368.7 481.5,378.5 492.3,387.8 504.0,396.7 516.5,405.1 529.9,412.8 544.1,419.9 558.9,426.4 574.4,432.1 590.4,437.1 607.0,441.3 623.9,444.7 641.2,447.2 658.7,448.9 676.3,449.8ZM693.9,460.8 711.4,460.0 728.7,458.3 745.8,455.7 762.7,452.3 779.1,448.1 795.0,443.2 810.4,437.4 825.1,431.0 839.2,423.9 852.5,416.2 864.9,407.8 876.6,399.0 887.2,389.6 897.0,379.8 905.7,369.6 913.5,359.1 920.2,348.3 925.9,337.3 930.5,326.1 934.1,314.8 936.7,303.4 938.2,292.0 938.7,280.6 938.1,269.3 936.6,258.1 934.1,247.1 930.7,236.2 926.4,225.6 921.2,215.2 915.1,205.2 908.2,195.5 900.6,186.1 892.2,177.1 883.2,168.6 873.5,160.5 863.1,152.8 852.2,145.6 840.8,138.9 828.9,132.7 816.5,127.0 803.8,121.9 790.7,117.3 777.2,113.3 763.5,109.8 749.6,106.9 735.4,104.6 721.2,102.8 706.8,101.6 692.3,101.0 677.9,101.0 663.4,101.6 649.0,102.8 634.8,104.6 620.6,106.9 606.7,109.8 593.0,113.3 579.5,117.3 566.4,121.9 553.7,127.0 541.3,132.7 529.4,138.9 518.0,145.6 507.1,152.8 496.7,160.5 487.0,168.6 478.0,177.1 469.6,186.1 462.0,195.5 455.1,205.2 449.0,215.2 443.8,225.6 439.5,236.2 436.1,247.1 433.6,258.1 432.1,269.3 431.5,280.6 432.0,292.0 433.5,303.4 436.1,314.8 439.7,326.1 444.3,337.3 450.0,348.3 456.7,359.1 464.5,369.6 473.2,379.8 483.0,389.6 493.6,399.0 505.3,407.8 517.7,416.2 531.0,423.9 545.1,431.0 559.8,437.4 575.2,443.2 591.1,448.1 607.5,452.3 624.4,455.7 641.5,458.3 658.8,460.0 676.3,460.8ZM693.8,471.7 711.2,470.9 728.4,469.1 745.4,466.6 762.1,463.2 778.4,459.0 794.2,454.1 809.5,448.4 824.2,441.9 838.1,434.8 851.3,427.1 863.7,418.8 875.2,409.9 885.8,400.6 895.5,390.8 904.2,380.7 911.9,370.2 918.6,359.4 924.3,348.4 928.9,337.2 932.5,325.9 935.0,314.5 936.5,303.1 937.0,291.7 936.5,280.4 935.0,269.2 932.5,258.2 929.1,247.3 924.8,236.7 919.7,226.4 913.7,216.3 906.9,206.6 899.3,197.2 891.0,188.3 882.0,179.7 872.3,171.6 862.1,163.9 851.2,156.7 839.9,150.0 828.0,143.8 815.8,138.2 803.1,133.0 790.0,128.4 776.7,124.4 763.1,120.9 749.2,118.0 735.1,115.7 721.0,113.9 706.7,112.7 692.3,112.1 677.9,112.1 663.5,112.7 649.2,113.9 635.1,115.7 621.0,118.0 607.1,120.9 593.5,124.4 580.2,128.4 567.1,133.0 554.4,138.2 542.2,143.8 530.3,150.0 519.0,156.7 508.1,163.9 497.9,171.6 488.2,179.7 479.2,188.3 470.9,197.2 463.3,206.6 456.5,216.3 450.5,226.4 445.4,236.7 441.1,247.3 437.7,258.2 435.2,269.2 433.7,280.4 433.2,291.7 433.7,303.1 435.2,314.5 437.7,325.9 441.3,337.2 445.9,348.4 451.6,359.4 458.3,370.2 466.0,380.7 474.7,390.8 484.4,400.6 495.0,409.9 506.5,418.8 518.9,427.1 532.1,434.8 546.0,441.9 560.7,448.4 576.0,454.1 591.8,459.0 608.1,463.2 624.8,466.6 641.8,469.1 659.0,470.9 676.4,471.7ZM693.7,482.4 711.0,481.6 728.1,479.9 745.0,477.3 761.6,473.9 777.8,469.8 793.5,464.8 808.6,459.1 823.2,452.7 837.0,445.6 850.2,437.9 862.5,429.6 873.9,420.8 884.5,411.4 894.1,401.7 902.8,391.5 910.4,381.0 917.1,370.3 922.7,359.3 927.3,348.1 930.9,336.8 933.4,325.5 934.9,314.1 935.4,302.7 934.9,291.4 933.4,280.2 931.0,269.2 927.6,258.3 923.3,247.7 918.2,237.4 912.2,227.3 905.5,217.6 898.0,208.2 889.7,199.3 880.8,190.7 871.2,182.6 861.0,174.9 850.2,167.7 838.9,161.0 827.2,154.8 815.0,149.1 802.4,144.0 789.4,139.4 776.1,135.4 762.6,131.9 748.8,129.0 734.9,126.6 720.7,124.9 706.5,123.7 692.2,123.1 678.0,123.1 663.7,123.7 649.5,124.9 635.3,126.6 621.4,129.0 607.6,131.9 594.1,135.4 580.8,139.4 567.8,144.0 555.2,149.1 543.0,154.8 531.3,161.0 520.0,167.7 509.2,174.9 499.0,182.6 489.4,190.7 480.5,199.3 472.2,208.2 464.7,217.6 458.0,227.3 452.0,237.4 446.9,247.7 442.6,258.3 439.2,269.2 436.8,280.2 435.3,291.4 434.8,302.7 435.3,314.1 436.8,325.5 439.3,336.8 442.9,348.1 447.5,359.3 453.1,370.3 459.8,381.0 467.4,391.5 476.1,401.7 485.7,411.4 496.3,420.8 507.7,429.6 520.0,437.9 533.2,445.6 547.0,452.7 561.6,459.1 576.7,464.8 592.4,469.8 608.6,473.9 625.2,477.3 642.1,479.9 659.2,481.6 676.5,482.4ZM693.7,493.0 710.8,492.1 727.8,490.4 744.6,487.9 761.0,484.5 777.1,480.4 792.7,475.4 807.8,469.7 822.2,463.3 836.0,456.3 849.0,448.6 861.2,440.3 872.6,431.5 883.1,422.1 892.7,412.4 901.3,402.3 908.9,391.8 915.5,381.0 921.1,370.0 925.7,358.9 929.2,347.6 931.8,336.3 933.3,324.9 933.8,313.5 933.3,302.2 931.8,291.0 929.4,280.0 926.1,269.2 921.8,258.6 916.8,248.2 910.8,238.2 904.1,228.5 896.6,219.1 888.5,210.1 879.6,201.6 870.1,193.4 859.9,185.8 849.2,178.6 838.0,171.9 826.3,165.7 814.2,160.0 801.7,154.9 788.8,150.3 775.6,146.2 762.1,142.7 748.4,139.8 734.6,137.5 720.5,135.7 706.4,134.6 692.2,134.0 678.0,134.0 663.8,134.6 649.7,135.7 635.6,137.5 621.8,139.8 608.1,142.7 594.6,146.2 581.4,150.3 568.5,154.9 556.0,160.0 543.9,165.7 532.2,171.9 521.0,178.6 510.3,185.8 500.1,193.4 490.6,201.6 481.7,210.1 473.6,219.1 466.1,228.5 459.4,238.2 453.4,248.2 448.4,258.6 444.1,269.2 440.8,280.0 438.4,291.0 436.9,302.2 436.4,313.5 436.9,324.9 438.4,336.3 441.0,347.6 444.5,358.9 449.1,370.0 454.7,381.0 461.3,391.8 468.9,402.3 477.5,412.4 487.1,422.1 497.6,431.5 509.0,440.3 521.2,448.6 534.2,456.3 548.0,463.3 562.4,469.7 577.5,475.4 593.1,480.4 609.2,484.5 625.6,487.9 642.4,490.4 659.4,492.1 676.5,493.0ZM693.6,503.4 710.6,502.6 727.5,500.9 744.1,498.3 760.5,495.0 776.5,490.8 792.0,485.9 806.9,480.2 821.3,473.8 835.0,466.8 847.9,459.1 860.0,450.8 871.4,442.0 881.8,432.7 891.3,423.0 899.8,412.8 907.4,402.4 914.0,391.6 919.6,380.7 924.1,369.5 927.7,358.3 930.2,346.9 931.7,335.5 932.2,324.2 931.7,312.9 930.3,301.7 927.9,290.7 924.6,279.9 920.4,269.3 915.3,258.9 909.5,248.9 902.8,239.2 895.4,229.8 887.2,220.9 878.4,212.3 868.9,204.2 858.9,196.5 848.3,189.3 837.1,182.6 825.5,176.4 813.4,170.7 801.0,165.6 788.2,161.0 775.1,156.9 761.7,153.5 748.1,150.5 734.3,148.2 720.3,146.4 706.3,145.3 692.2,144.7 678.0,144.7 663.9,145.3 649.9,146.4 635.9,148.2 622.1,150.5 608.5,153.5 595.1,156.9 582.0,161.0 569.2,165.6 556.8,170.7 544.7,176.4 533.1,182.6 521.9,189.3 511.3,196.5 501.3,204.2 491.8,212.3 483.0,220.9 474.8,229.8 467.4,239.2 460.7,248.9 454.9,258.9 449.8,269.3 445.6,279.9 442.3,290.7 439.9,301.7 438.5,312.9 438.0,324.2 438.5,335.5 440.0,346.9 442.5,358.3 446.1,369.5 450.6,380.7 456.2,391.6 462.8,402.4 470.4,412.8 478.9,423.0 488.4,432.7 498.8,442.0 510.2,450.8 522.3,459.1 535.2,466.8 548.9,473.8 563.3,480.2 578.2,485.9 593.7,490.8 609.7,495.0 626.1,498.3 642.7,500.9 659.6,502.6 676.6,503.4ZM693.6,513.7 710.4,512.8 727.2,511.1 743.7,508.6 760.0,505.3 775.8,501.1 791.2,496.2 806.1,490.5 820.3,484.1 833.9,477.1 846.8,469.4 858.9,461.2 870.1,452.4 880.5,443.1 889.9,433.4 898.4,423.3 905.9,412.8 912.5,402.1 918.0,391.1 922.6,380.0 926.1,368.8 928.6,357.4 930.1,346.1 930.6,334.7 930.1,323.5 928.7,312.3 926.4,301.3 923.1,290.4 918.9,279.9 913.9,269.5 908.1,259.5 901.5,249.8 894.1,240.4 886.0,231.5 877.2,222.9 867.8,214.8 857.9,207.1 847.3,199.9 836.2,193.2 824.7,187.0 812.7,181.3 800.3,176.2 787.6,171.6 774.6,167.5 761.2,164.1 747.7,161.1 734.0,158.8 720.1,157.0 706.2,155.9 692.1,155.3 678.1,155.3 664.0,155.9 650.1,157.0 636.2,158.8 622.5,161.1 609.0,164.1 595.6,167.5 582.6,171.6 569.9,176.2 557.5,181.3 545.5,187.0 534.0,193.2 522.9,199.9 512.3,207.1 502.4,214.8 493.0,222.9 484.2,231.5 476.1,240.4 468.7,249.8 462.1,259.5 456.3,269.5 451.3,279.9 447.1,290.4 443.8,301.3 441.5,312.3 440.1,323.5 439.6,334.7 440.1,346.1 441.6,357.4 444.1,368.8 447.6,380.0 452.2,391.1 457.7,402.1 464.3,412.8 471.8,423.3 480.3,433.4 489.7,443.1 500.1,452.4 511.3,461.2 523.4,469.4 536.3,477.1 549.9,484.1 564.1,490.5 579.0,496.2 594.4,501.1 610.2,505.3 626.5,508.6 643.0,511.1 659.8,512.8 676.6,513.7ZM693.5,523.8 710.3,523.0 726.9,521.3 743.3,518.8 759.5,515.4 775.2,511.3 790.5,506.4 805.3,500.7 819.4,494.3 832.9,487.3 845.7,479.6 857.7,471.4 868.9,462.6 879.2,453.4 888.6,443.7 897.0,433.6 904.5,423.1 911.0,412.4 916.5,401.5 921.0,390.4 924.5,379.1 927.0,367.8 928.5,356.5 929.1,345.1 928.6,333.9 927.2,322.7 924.9,311.7 921.6,300.9 917.5,290.3 912.5,280.0 906.7,269.9 900.2,260.2 892.8,250.9 884.8,241.9 876.1,233.4 866.8,225.3 856.8,217.6 846.3,210.4 835.3,203.7 823.9,197.5 812.0,191.8 799.7,186.7 787.0,182.1 774.0,178.0 760.8,174.5 747.4,171.6 733.7,169.3 719.9,167.5 706.0,166.3 692.1,165.8 678.1,165.8 664.2,166.3 650.3,167.5 636.5,169.3 622.8,171.6 609.4,174.5 596.2,178.0 583.2,182.1 570.5,186.7 558.2,191.8 546.3,197.5 534.9,203.7 523.9,210.4 513.4,217.6 503.4,225.3 494.1,233.4 485.4,241.9 477.4,250.9 470.0,260.2 463.5,269.9 457.7,280.0 452.7,290.3 448.6,300.9 445.3,311.7 443.0,322.7 441.6,333.9 441.1,345.1 441.7,356.5 443.2,367.8 445.7,379.1 449.2,390.4 453.7,401.5 459.2,412.4 465.7,423.1 473.2,433.6 481.6,443.7 491.0,453.4 501.3,462.6 512.5,471.4 524.5,479.6 537.3,487.3 550.8,494.3 564.9,500.7 579.7,506.4 595.0,511.3 610.7,515.4 626.9,518.8 643.3,521.3 659.9,523.0 676.7,523.8ZM693.4,533.8 710.1,533.0 726.6,531.3 742.9,528.8 759.0,525.4 774.6,521.3 789.8,516.4 804.4,510.7 818.5,504.4 831.9,497.4 844.6,489.7 856.5,481.5 867.6,472.7 877.9,463.5 887.2,453.8 895.6,443.7 903.1,433.3 909.5,422.6 915.0,411.7 919.5,400.6 923.0,389.4 925.5,378.1 927.0,366.7 927.5,355.4 927.1,344.2 925.7,333.0 923.4,322.0 920.2,311.2 916.1,300.6 911.1,290.3 905.4,280.3 898.9,270.6 891.6,261.2 883.6,252.3 875.0,243.7 865.7,235.6 855.8,227.9 845.4,220.7 834.5,214.0 823.1,207.8 811.2,202.2 799.0,197.0 786.4,192.4 773.5,188.4 760.4,184.9 747.0,182.0 733.4,179.6 719.7,177.9 705.9,176.7 692.0,176.1 678.2,176.1 664.3,176.7 650.5,177.9 636.8,179.6 623.2,182.0 609.8,184.9 596.7,188.4 583.8,192.4 571.2,197.0 559.0,202.2 547.1,207.8 535.7,214.0 524.8,220.7 514.4,227.9 504.5,235.6 495.2,243.7 486.6,252.3 478.6,261.2 471.3,270.6 464.8,280.3 459.1,290.3 454.1,300.6 450.0,311.2 446.8,322.0 444.5,333.0 443.1,344.2 442.7,355.4 443.2,366.7 444.7,378.1 447.2,389.4 450.7,400.6 455.2,411.7 460.7,422.6 467.1,433.3 474.6,443.7 483.0,453.8 492.3,463.5 502.6,472.7 513.7,481.5 525.6,489.7 538.3,497.4 551.7,504.4 565.8,510.7 580.4,516.4 595.6,521.3 611.2,525.4 627.3,528.8 643.6,531.3 660.1,533.0 676.8,533.8ZM693.4,543.7 709.9,542.8 726.3,541.1 742.5,538.6 758.5,535.3 774.0,531.2 789.1,526.3 803.6,520.6 817.6,514.3 830.9,507.3 843.6,499.7 855.4,491.5 866.4,482.7 876.6,473.5 885.9,463.8 894.2,453.8 901.7,443.4 908.1,432.7 913.6,421.8 918.0,410.7 921.5,399.5 924.0,388.2 925.5,376.9 926.0,365.6 925.6,354.3 924.2,343.2 921.9,332.2 918.7,321.4 914.7,310.8 909.8,300.5 904.1,290.5 897.6,280.8 890.4,271.5 882.4,262.5 873.9,254.0 864.6,245.8 854.8,238.2 844.5,231.0 833.6,224.3 822.3,218.1 810.5,212.4 798.3,207.3 785.8,202.7 773.0,198.6 759.9,195.1 746.6,192.2 733.2,189.9 719.5,188.1 705.8,186.9 692.0,186.4 678.2,186.4 664.4,186.9 650.7,188.1 637.0,189.9 623.6,192.2 610.3,195.1 597.2,198.6 584.4,202.7 571.9,207.3 559.7,212.4 547.9,218.1 536.6,224.3 525.7,231.0 515.4,238.2 505.6,245.8 496.3,254.0 487.8,262.5 479.8,271.5 472.6,280.8 466.1,290.5 460.4,300.5 455.5,310.8 451.5,321.4 448.3,332.2 446.0,343.2 444.6,354.3 444.2,365.6 444.7,376.9 446.2,388.2 448.7,399.5 452.2,410.7 456.6,421.8 462.1,432.7 468.5,443.4 476.0,453.8 484.3,463.8 493.6,473.5 503.8,482.7 514.8,491.5 526.6,499.7 539.3,507.3 552.6,514.3 566.6,520.6 581.1,526.3 596.2,531.2 611.7,535.3 627.7,538.6 643.9,541.1 660.3,542.8 676.8,543.7ZM693.3,553.4 709.8,552.6 726.1,550.9 742.2,548.4 758.0,545.0 773.4,540.9 788.4,536.0 802.9,530.4 816.7,524.1 830.0,517.1 842.5,509.5 854.3,501.3 865.2,492.6 875.4,483.4 884.6,473.7 892.9,463.7 900.3,453.3 906.7,442.6 912.1,431.7 916.5,420.7 920.0,409.5 922.5,398.2 924.0,386.9 924.5,375.6 924.1,364.4 922.7,353.2 920.5,342.3 917.3,331.5 913.3,320.9 908.4,310.6 902.8,300.6 896.3,290.9 889.2,281.6 881.3,272.6 872.8,264.1 863.6,256.0 853.8,248.3 843.6,241.1 832.8,234.4 821.5,228.2 809.8,222.5 797.7,217.4 785.3,212.8 772.5,208.7 759.5,205.3 746.3,202.3 732.9,200.0 719.3,198.2 705.7,197.1 692.0,196.5 678.2,196.5 664.5,197.1 650.9,198.2 637.3,200.0 623.9,202.3 610.7,205.3 597.7,208.7 584.9,212.8 572.5,217.4 560.4,222.5 548.7,228.2 537.4,234.4 526.6,241.1 516.4,248.3 506.6,256.0 497.4,264.1 488.9,272.6 481.0,281.6 473.9,290.9 467.4,300.6 461.8,310.6 456.9,320.9 452.9,331.5 449.7,342.3 447.5,353.2 446.1,364.4 445.7,375.6 446.2,386.9 447.7,398.2 450.2,409.5 453.7,420.7 458.1,431.7 463.5,442.6 469.9,453.3 477.3,463.7 485.6,473.7 494.8,483.4 505.0,492.6 515.9,501.3 527.7,509.5 540.2,517.1 553.5,524.1 567.3,530.4 581.8,536.0 596.8,540.9 612.2,545.0 628.0,548.4 644.1,550.9 660.4,552.6 676.9,553.4ZM693.3,563.0 709.6,562.2 725.8,560.5 741.8,558.0 757.5,554.7 772.8,550.5 787.7,545.7 802.1,540.1 815.9,533.8 829.0,526.8 841.5,519.2 853.2,511.0 864.1,502.3 874.1,493.1 883.3,483.5 891.6,473.4 898.9,463.1 905.3,452.4 910.7,441.6 915.1,430.5 918.5,419.3 921.0,408.1 922.5,396.8 923.0,385.5 922.6,374.3 921.3,363.2 919.1,352.2 915.9,341.4 911.9,330.9 907.1,320.6 901.5,310.6 895.1,300.9 888.0,291.5 880.1,282.6 871.7,274.1 862.6,266.0 852.9,258.3 842.6,251.1 831.9,244.4 820.7,238.2 809.1,232.5 797.1,227.4 784.7,222.8 772.0,218.7 759.1,215.3 746.0,212.3 732.6,210.0 719.1,208.3 705.6,207.1 691.9,206.5 678.3,206.5 664.6,207.1 651.1,208.3 637.6,210.0 624.2,212.3 611.1,215.3 598.2,218.7 585.5,222.8 573.1,227.4 561.1,232.5 549.5,238.2 538.3,244.4 527.6,251.1 517.3,258.3 507.6,266.0 498.5,274.1 490.1,282.6 482.2,291.5 475.1,300.9 468.7,310.6 463.1,320.6 458.3,330.9 454.3,341.4 451.1,352.2 448.9,363.2 447.6,374.3 447.2,385.5 447.7,396.8 449.2,408.1 451.7,419.3 455.1,430.5 459.5,441.6 464.9,452.4 471.3,463.1 478.6,473.4 486.9,483.5 496.1,493.1 506.1,502.3 517.0,511.0 528.7,519.2 541.2,526.8 554.3,533.8 568.1,540.1 582.5,545.7 597.4,550.5 612.7,554.7 628.4,558.0 644.4,560.5 660.6,562.2 676.9,563.0ZM693.2,572.5 709.4,571.6 725.5,569.9 741.4,567.4 757.0,564.1 772.2,560.0 787.0,555.2 801.3,549.6 815.0,543.3 828.1,536.3 840.5,528.7 852.1,520.6 862.9,511.9 872.9,502.7 882.0,493.1 890.2,483.1 897.5,472.7 903.9,462.1 909.2,451.3 913.6,440.2 917.1,429.1 919.6,417.8 921.0,406.5 921.6,395.3 921.2,384.1 919.9,373.0 917.6,362.0 914.5,351.2 910.6,340.7 905.8,330.4 900.2,320.4 893.9,310.7 886.8,301.4 879.0,292.5 870.6,283.9 861.5,275.8 851.9,268.2 841.7,261.0 831.1,254.3 819.9,248.1 808.4,242.4 796.4,237.3 784.1,232.7 771.5,228.6 758.7,225.2 745.6,222.2 732.4,219.9 719.0,218.1 705.5,217.0 691.9,216.4 678.3,216.4 664.7,217.0 651.2,218.1 637.8,219.9 624.6,222.2 611.5,225.2 598.7,228.6 586.1,232.7 573.8,237.3 561.8,242.4 550.3,248.1 539.1,254.3 528.5,261.0 518.3,268.2 508.7,275.8 499.6,283.9 491.2,292.5 483.4,301.4 476.3,310.7 470.0,320.4 464.4,330.4 459.6,340.7 455.7,351.2 452.6,362.0 450.3,373.0 449.0,384.1 448.6,395.3 449.2,406.5 450.6,417.8 453.1,429.1 456.6,440.2 461.0,451.3 466.3,462.1 472.7,472.7 480.0,483.1 488.2,493.1 497.3,502.7 507.3,511.9 518.1,520.6 529.7,528.7 542.1,536.3 555.2,543.3 568.9,549.6 583.2,555.2 598.0,560.0 613.2,564.1 628.8,567.4 644.7,569.9 660.8,571.6 677.0,572.5ZM693.2,581.8 709.3,581.0 725.3,579.3 741.0,576.8 756.5,573.5 771.7,569.4 786.3,564.6 800.5,559.0 814.2,552.7 827.1,545.8 839.4,538.2 851.0,530.0 861.8,521.4 871.7,512.2 880.8,502.6 888.9,492.6 896.2,482.3 902.5,471.7 907.8,460.8 912.2,449.8 915.7,438.7 918.1,427.4 919.6,416.2 920.2,404.9 919.8,393.7 918.5,382.7 916.3,371.7 913.2,361.0 909.2,350.4 904.5,340.1 898.9,330.1 892.6,320.5 885.6,311.2 877.9,302.2 869.5,293.7 860.5,285.6 851.0,277.9 840.9,270.8 830.2,264.1 819.2,257.9 807.7,252.2 795.8,247.1 783.6,242.5 771.1,238.4 758.3,234.9 745.3,232.0 732.1,229.7 718.8,227.9 705.3,226.8 691.9,226.2 678.3,226.2 664.9,226.8 651.4,227.9 638.1,229.7 624.9,232.0 611.9,234.9 599.1,238.4 586.6,242.5 574.4,247.1 562.5,252.2 551.0,257.9 540.0,264.1 529.3,270.8 519.2,277.9 509.7,285.6 500.7,293.7 492.3,302.2 484.6,311.2 477.6,320.5 471.3,330.1 465.7,340.1 461.0,350.4 457.0,361.0 453.9,371.7 451.7,382.7 450.4,393.7 450.0,404.9 450.6,416.2 452.1,427.4 454.5,438.7 458.0,449.8 462.4,460.8 467.7,471.7 474.0,482.3 481.3,492.6 489.4,502.6 498.5,512.2 508.4,521.4 519.2,530.0 530.8,538.2 543.1,545.8 556.0,552.7 569.7,559.0 583.9,564.6 598.5,569.4 613.7,573.5 629.2,576.8 644.9,579.3 660.9,581.0 677.0,581.8ZM693.1,591.0 709.1,590.2 725.0,588.5 740.7,586.0 756.1,582.7 771.1,578.7 785.7,573.8 799.8,568.3 813.3,562.0 826.2,555.1 838.5,547.5 849.9,539.4 860.6,530.7 870.5,521.6 879.5,512.0 887.6,502.0 894.9,491.7 901.1,481.1 906.5,470.3 910.8,459.3 914.2,448.2 916.7,437.0 918.2,425.7 918.7,414.5 918.4,403.3 917.1,392.2 914.9,381.3 911.8,370.5 907.9,360.0 903.2,349.8 897.7,339.8 891.4,330.1 884.5,320.8 876.8,311.9 868.5,303.4 859.5,295.3 850.0,287.6 840.0,280.4 829.4,273.7 818.4,267.6 807.0,261.9 795.2,256.7 783.0,252.1 770.6,248.1 757.9,244.6 744.9,241.7 731.8,239.4 718.6,237.6 705.2,236.4 691.8,235.9 678.4,235.9 665.0,236.4 651.6,237.6 638.4,239.4 625.3,241.7 612.3,244.6 599.6,248.1 587.2,252.1 575.0,256.7 563.2,261.9 551.8,267.6 540.8,273.7 530.2,280.4 520.2,287.6 510.7,295.3 501.7,303.4 493.4,311.9 485.7,320.8 478.8,330.1 472.5,339.8 467.0,349.8 462.3,360.0 458.4,370.5 455.3,381.3 453.1,392.2 451.8,403.3 451.5,414.5 452.0,425.7 453.5,437.0 456.0,448.2 459.4,459.3 463.7,470.3 469.1,481.1 475.3,491.7 482.6,502.0 490.7,512.0 499.7,521.6 509.6,530.7 520.3,539.4 531.7,547.5 544.0,555.1 556.9,562.0 570.4,568.3 584.5,573.8 599.1,578.7 614.1,582.7 629.5,586.0 645.2,588.5 661.1,590.2 677.1,591.0ZM693.1,600.1 709.0,599.3 724.7,597.6 740.3,595.1 755.6,591.9 770.5,587.8 785.0,583.0 799.0,577.4 812.5,571.1 825.3,564.2 837.5,556.7 848.9,548.6 859.5,539.9 869.3,530.8 878.3,521.3 886.4,511.3 893.5,501.0 899.8,490.5 905.1,479.7 909.4,468.7 912.8,457.6 915.3,446.4 916.8,435.1 917.3,423.9 917.0,412.7 915.7,401.7 913.5,390.8 910.5,380.0 906.6,369.5 901.9,359.3 896.5,349.3 890.2,339.6 883.3,330.3 875.7,321.4 867.4,312.9 858.5,304.8 849.1,297.2 839.1,290.0 828.6,283.3 817.7,277.1 806.3,271.4 794.6,266.3 782.5,261.7 770.1,257.7 757.5,254.2 744.6,251.3 731.6,248.9 718.4,247.2 705.1,246.0 691.8,245.4 678.4,245.4 665.1,246.0 651.8,247.2 638.6,248.9 625.6,251.3 612.7,254.2 600.1,257.7 587.7,261.7 575.6,266.3 563.9,271.4 552.5,277.1 541.6,283.3 531.1,290.0 521.1,297.2 511.7,304.8 502.8,312.9 494.5,321.4 486.9,330.3 480.0,339.6 473.7,349.3 468.3,359.3 463.6,369.5 459.7,380.0 456.7,390.8 454.5,401.7 453.2,412.7 452.9,423.9 453.4,435.1 454.9,446.4 457.4,457.6 460.8,468.7 465.1,479.7 470.4,490.5 476.7,501.0 483.8,511.3 491.9,521.3 500.9,530.8 510.7,539.9 521.3,548.6 532.7,556.7 544.9,564.2 557.7,571.1 571.2,577.4 585.2,583.0 599.7,587.8 614.6,591.9 629.9,595.1 645.5,597.6 661.2,599.3 677.1,600.1ZM693.0,609.1 708.8,608.3 724.5,606.6 739.9,604.1 755.1,600.9 770.0,596.8 784.4,592.0 798.3,586.4 811.7,580.2 824.4,573.3 836.5,565.8 847.8,557.7 858.4,549.1 868.2,540.0 877.1,530.4 885.1,520.5 892.3,510.2 898.5,499.7 903.7,488.9 908.1,477.9 911.5,466.8 913.9,455.6 915.4,444.4 915.9,433.2 915.6,422.1 914.3,411.0 912.2,400.1 909.2,389.4 905.3,378.9 900.7,368.6 895.2,358.7 889.1,349.0 882.2,339.8 874.6,330.8 866.4,322.3 857.6,314.2 848.2,306.6 838.2,299.4 827.8,292.8 816.9,286.6 805.6,280.9 794.0,275.8 782.0,271.2 769.7,267.1 757.1,263.7 744.3,260.8 731.3,258.4 718.2,256.7 705.0,255.5 691.7,254.9 678.5,254.9 665.2,255.5 652.0,256.7 638.9,258.4 625.9,260.8 613.1,263.7 600.5,267.1 588.2,271.2 576.2,275.8 564.6,280.9 553.3,286.6 542.4,292.8 532.0,299.4 522.0,306.6 512.6,314.2 503.8,322.3 495.6,330.8 488.0,339.8 481.1,349.0 475.0,358.7 469.5,368.6 464.9,378.9 461.0,389.4 458.0,400.1 455.9,411.0 454.6,422.1 454.3,433.2 454.8,444.4 456.3,455.6 458.7,466.8 462.1,477.9 466.5,488.9 471.7,499.7 477.9,510.2 485.1,520.5 493.1,530.4 502.0,540.0 511.8,549.1 522.4,557.7 533.7,565.8 545.8,573.3 558.5,580.2 571.9,586.4 585.8,592.0 600.2,596.8 615.1,600.9 630.3,604.1 645.7,606.6 661.4,608.3 677.2,609.1ZM693.0,618.0 708.7,617.1 724.2,615.5 739.6,613.0 754.7,609.7 769.4,605.7 783.8,600.9 797.6,595.4 810.9,589.1 823.5,582.2 835.5,574.7 846.8,566.7 857.3,558.1 867.0,549.0 875.9,539.4 883.9,529.5 891.0,519.3 897.2,508.8 902.4,498.0 906.7,487.1 910.1,476.0 912.5,464.8 914.0,453.6 914.6,442.4 914.2,431.3 913.0,420.3 910.8,409.4 907.9,398.7 904.1,388.2 899.4,377.9 894.0,368.0 887.9,358.4 881.1,349.1 873.5,340.2 865.4,331.7 856.6,323.6 847.3,315.9 837.4,308.8 827.0,302.1 816.2,295.9 805.0,290.3 793.4,285.1 781.4,280.5 769.2,276.5 756.7,273.0 744.0,270.1 731.1,267.8 718.0,266.0 704.9,264.9 691.7,264.3 678.5,264.3 665.3,264.9 652.2,266.0 639.1,267.8 626.2,270.1 613.5,273.0 601.0,276.5 588.8,280.5 576.8,285.1 565.2,290.3 554.0,295.9 543.2,302.1 532.8,308.8 522.9,315.9 513.6,323.6 504.8,331.7 496.7,340.2 489.1,349.1 482.3,358.4 476.2,368.0 470.8,377.9 466.1,388.2 462.3,398.7 459.4,409.4 457.2,420.3 456.0,431.3 455.6,442.4 456.2,453.6 457.7,464.8 460.1,476.0 463.5,487.1 467.8,498.0 473.0,508.8 479.2,519.3 486.3,529.5 494.3,539.4 503.2,549.0 512.9,558.1 523.4,566.7 534.7,574.7 546.7,582.2 559.3,589.1 572.6,595.4 586.4,600.9 600.8,605.7 615.5,609.7 630.6,613.0 646.0,615.5 661.5,617.1 677.2,618.0ZM692.9,626.7 708.5,625.9 724.0,624.2 739.2,621.8 754.2,618.5 768.9,614.5 783.1,609.7 796.9,604.2 810.1,597.9 822.7,591.1 834.6,583.6 845.8,575.5 856.3,567.0 865.9,557.9 874.7,548.4 882.7,538.5 889.7,528.3 895.9,517.7 901.1,507.0 905.4,496.1 908.7,485.0 911.2,473.9 912.6,462.7 913.2,451.5 912.9,440.4 911.6,429.4 909.5,418.5 906.6,407.8 902.8,397.3 898.2,387.1 892.9,377.2 886.8,367.6 880.0,358.3 872.5,349.4 864.4,340.9 855.7,332.8 846.4,325.2 836.6,318.0 826.3,311.3 815.5,305.2 804.3,299.5 792.8,294.4 780.9,289.8 768.7,285.8 756.3,282.3 743.7,279.4 730.8,277.0 717.9,275.3 704.8,274.1 691.7,273.5 678.5,273.5 665.4,274.1 652.3,275.3 639.4,277.0 626.5,279.4 613.9,282.3 601.5,285.8 589.3,289.8 577.4,294.4 565.9,299.5 554.7,305.2 543.9,311.3 533.6,318.0 523.8,325.2 514.5,332.8 505.8,340.9 497.7,349.4 490.2,358.3 483.4,367.6 477.3,377.2 472.0,387.1 467.4,397.3 463.6,407.8 460.7,418.5 458.6,429.4 457.3,440.4 457.0,451.5 457.6,462.7 459.0,473.9 461.5,485.0 464.8,496.1 469.1,507.0 474.3,517.7 480.5,528.3 487.5,538.5 495.5,548.4 504.3,557.9 513.9,567.0 524.4,575.5 535.6,583.6 547.5,591.1 560.1,597.9 573.3,604.2 587.1,609.7 601.3,614.5 616.0,618.5 631.0,621.8 646.2,624.2 661.7,625.9 677.3,626.7ZM692.9,635.4 708.4,634.5 723.7,632.9 738.9,630.4 753.8,627.2 768.4,623.1 782.5,618.4 796.2,612.9 809.3,606.7 821.8,599.8 833.7,592.3 844.8,584.3 855.2,575.7 864.8,566.7 873.5,557.2 881.5,547.3 888.5,537.1 894.6,526.6 899.8,515.9 904.1,505.0 907.4,494.0 909.8,482.8 911.3,471.7 911.9,460.5 911.5,449.4 910.3,438.4 908.2,427.6 905.3,416.9 901.6,406.4 897.0,396.2 891.7,386.3 885.6,376.6 878.9,367.4 871.4,358.5 863.4,350.0 854.7,341.9 845.5,334.3 835.7,327.2 825.5,320.5 814.8,314.3 803.7,308.7 792.2,303.5 780.4,299.0 768.3,294.9 755.9,291.5 743.3,288.5 730.6,286.2 717.7,284.5 704.7,283.3 691.6,282.7 678.6,282.7 665.5,283.3 652.5,284.5 639.6,286.2 626.9,288.5 614.3,291.5 601.9,294.9 589.8,299.0 578.0,303.5 566.5,308.7 555.4,314.3 544.7,320.5 534.5,327.2 524.7,334.3 515.5,341.9 506.8,350.0 498.8,358.5 491.3,367.4 484.6,376.6 478.5,386.3 473.2,396.2 468.6,406.4 464.9,416.9 462.0,427.6 459.9,438.4 458.7,449.4 458.3,460.5 458.9,471.7 460.4,482.8 462.8,494.0 466.1,505.0 470.4,515.9 475.6,526.6 481.7,537.1 488.7,547.3 496.7,557.2 505.4,566.7 515.0,575.7 525.4,584.3 536.5,592.3 548.4,599.8 560.9,606.7 574.0,612.9 587.7,618.4 601.8,623.1 616.4,627.2 631.3,630.4 646.5,632.9 661.8,634.5 677.3,635.4ZM692.8,643.9 708.2,643.1 723.5,641.4 738.6,639.0 753.4,635.7 767.8,631.7 781.9,626.9 795.5,621.4 808.5,615.3 821.0,608.4 832.7,601.0 843.8,593.0 854.1,584.4 863.7,575.4 872.4,565.9 880.3,556.1 887.2,545.9 893.3,535.4 898.5,524.7 902.8,513.8 906.1,502.8 908.5,491.7 910.0,480.5 910.6,469.4 910.2,458.3 909.0,447.3 907.0,436.5 904.1,425.8 900.3,415.4 895.8,405.2 890.5,395.2 884.5,385.6 877.8,376.4 870.4,367.5 862.4,359.0 853.8,351.0 844.6,343.4 834.9,336.2 824.7,329.5 814.1,323.4 803.0,317.7 791.6,312.6 779.9,308.0 767.8,304.0 755.5,300.5 743.0,297.6 730.3,295.3 717.5,293.5 704.6,292.4 691.6,291.8 678.6,291.8 665.6,292.4 652.7,293.5 639.9,295.3 627.2,297.6 614.7,300.5 602.4,304.0 590.3,308.0 578.6,312.6 567.2,317.7 556.1,323.4 545.5,329.5 535.3,336.2 525.6,343.4 516.4,351.0 507.8,359.0 499.8,367.5 492.4,376.4 485.7,385.6 479.7,395.2 474.4,405.2 469.9,415.4 466.1,425.8 463.2,436.5 461.2,447.3 460.0,458.3 459.6,469.4 460.2,480.5 461.7,491.7 464.1,502.8 467.4,513.8 471.7,524.7 476.9,535.4 483.0,545.9 489.9,556.1 497.8,565.9 506.5,575.4 516.1,584.4 526.4,593.0 537.5,601.0 549.2,608.4 561.7,615.3 574.7,621.4 588.3,626.9 602.4,631.7 616.8,635.7 631.6,639.0 646.7,641.4 662.0,643.1 677.4,643.9ZM692.8,652.3 708.1,651.5 723.2,649.8 738.2,647.4 752.9,644.2 767.3,640.2 781.3,635.4 794.8,629.9 807.8,623.8 820.1,616.9 831.8,609.5 842.8,601.5 853.1,593.0 862.6,584.0 871.3,574.5 879.1,564.7 886.0,554.5 892.1,544.1 897.2,533.4 901.5,522.5 904.8,511.5 907.2,500.4 908.7,489.3 909.2,478.2 908.9,467.1 907.7,456.2 905.7,445.3 902.8,434.7 899.1,424.2 894.6,414.0 889.4,404.1 883.4,394.5 876.7,385.3 869.4,376.4 861.4,367.9 852.9,359.9 843.7,352.3 834.1,345.1 824.0,338.5 813.4,332.3 802.4,326.7 791.1,321.6 779.4,317.0 767.4,313.0 755.2,309.5 742.7,306.6 730.1,304.3 717.3,302.5 704.5,301.3 691.6,300.7 678.6,300.7 665.7,301.3 652.9,302.5 640.1,304.3 627.5,306.6 615.0,309.5 602.8,313.0 590.8,317.0 579.1,321.6 567.8,326.7 556.8,332.3 546.2,338.5 536.1,345.1 526.5,352.3 517.3,359.9 508.8,367.9 500.8,376.4 493.5,385.3 486.8,394.5 480.8,404.1 475.6,414.0 471.1,424.2 467.4,434.7 464.5,445.3 462.5,456.2 461.3,467.1 461.0,478.2 461.5,489.3 463.0,500.4 465.4,511.5 468.7,522.5 473.0,533.4 478.1,544.1 484.2,554.5 491.1,564.7 498.9,574.5 507.6,584.0 517.1,593.0 527.4,601.5 538.4,609.5 550.1,616.9 562.4,623.8 575.4,629.9 588.9,635.4 602.9,640.2 617.3,644.2 632.0,647.4 647.0,649.8 662.1,651.5 677.4,652.3ZM692.7,660.6 707.9,659.8 723.0,658.2 737.9,655.7 752.5,652.5 766.8,648.5 780.7,643.8 794.1,638.3 807.0,632.1 819.3,625.3 830.9,617.9 841.9,609.9 852.1,601.4 861.5,592.4 870.1,583.0 877.9,573.2 884.8,563.1 890.8,552.6 896.0,542.0 900.2,531.1 903.5,520.1 905.9,509.1 907.4,498.0 908.0,486.9 907.6,475.8 906.5,464.9 904.4,454.1 901.6,443.4 897.9,433.0 893.4,422.8 888.2,412.9 882.3,403.3 875.7,394.1 868.4,385.2 860.5,376.8 851.9,368.7 842.9,361.1 833.3,354.0 823.2,347.3 812.7,341.2 801.8,335.5 790.5,330.4 778.9,325.9 767.0,321.8 754.8,318.4 742.4,315.5 729.9,313.1 717.2,311.4 704.4,310.2 691.5,309.6 678.7,309.6 665.8,310.2 653.0,311.4 640.3,313.1 627.8,315.5 615.4,318.4 603.2,321.8 591.3,325.9 579.7,330.4 568.4,335.5 557.5,341.2 547.0,347.3 536.9,354.0 527.3,361.1 518.3,368.7 509.7,376.8 501.8,385.2 494.5,394.1 487.9,403.3 482.0,412.9 476.8,422.8 472.3,433.0 468.6,443.4 465.8,454.1 463.7,464.9 462.6,475.8 462.2,486.9 462.8,498.0 464.3,509.1 466.7,520.1 470.0,531.1 474.2,542.0 479.4,552.6 485.4,563.1 492.3,573.2 500.1,583.0 508.7,592.4 518.1,601.4 528.3,609.9 539.3,617.9 550.9,625.3 563.2,632.1 576.1,638.3 589.5,643.8 603.4,648.5 617.7,652.5 632.3,655.7 647.2,658.2 662.3,659.8 677.5,660.6ZM692.7,668.8 707.8,668.0 722.8,666.4 737.6,664.0 752.1,660.7 766.3,656.7 780.1,652.0 793.4,646.6 806.2,640.4 818.5,633.6 830.0,626.2 840.9,618.3 851.1,609.8 860.5,600.8 869.0,591.4 876.8,581.6 883.6,571.5 889.6,561.1 894.7,550.4 898.9,539.6 902.2,528.7 904.6,517.6 906.1,506.5 906.7,495.4 906.4,484.4 905.2,473.5 903.2,462.7 900.4,452.1 896.7,441.6 892.3,431.5 887.1,421.6 881.2,412.0 874.6,402.8 867.4,394.0 859.5,385.5 851.0,377.5 842.0,369.9 832.5,362.7 822.5,356.1 812.0,349.9 801.2,344.3 789.9,339.2 778.4,334.6 766.5,330.6 754.4,327.1 742.1,324.2 729.6,321.9 717.0,320.2 704.3,319.0 691.5,318.4 678.7,318.4 665.9,319.0 653.2,320.2 640.6,321.9 628.1,324.2 615.8,327.1 603.7,330.6 591.8,334.6 580.3,339.2 569.0,344.3 558.2,349.9 547.7,356.1 537.7,362.7 528.2,369.9 519.2,377.5 510.7,385.5 502.8,394.0 495.6,402.8 489.0,412.0 483.1,421.6 477.9,431.5 473.5,441.6 469.8,452.1 467.0,462.7 465.0,473.5 463.8,484.4 463.5,495.4 464.1,506.5 465.6,517.6 468.0,528.7 471.3,539.6 475.5,550.4 480.6,561.1 486.6,571.5 493.4,581.6 501.2,591.4 509.7,600.8 519.1,609.8 529.3,618.3 540.2,626.2 551.7,633.6 564.0,640.4 576.8,646.6 590.1,652.0 603.9,656.7 618.1,660.7 632.6,664.0 647.4,666.4 662.4,668.0 677.5,668.8ZM692.6,677.0 707.6,676.1 722.5,674.5 737.2,672.1 751.7,668.9 765.8,664.9 779.5,660.2 792.8,654.7 805.5,648.6 817.7,641.8 829.2,634.5 840.0,626.5 850.1,618.0 859.4,609.1 867.9,599.7 875.6,589.9 882.5,579.8 888.4,569.5 893.5,558.8 897.7,548.0 901.0,537.1 903.3,526.1 904.8,515.0 905.4,503.9 905.1,492.9 904.0,482.0 902.0,471.2 899.2,460.6 895.5,450.2 891.1,440.1 886.0,430.2 880.1,420.6 873.6,411.4 866.4,402.6 858.6,394.1 850.1,386.1 841.2,378.5 831.7,371.4 821.7,364.8 811.3,358.6 800.5,353.0 789.4,347.9 777.9,343.3 766.1,339.3 754.1,335.8 741.8,332.9 729.4,330.6 716.8,328.9 704.2,327.7 691.5,327.1 678.7,327.1 666.0,327.7 653.4,328.9 640.8,330.6 628.4,332.9 616.1,335.8 604.1,339.3 592.3,343.3 580.8,347.9 569.7,353.0 558.9,358.6 548.5,364.8 538.5,371.4 529.0,378.5 520.1,386.1 511.6,394.1 503.8,402.6 496.6,411.4 490.1,420.6 484.2,430.2 479.1,440.1 474.7,450.2 471.0,460.6 468.2,471.2 466.2,482.0 465.1,492.9 464.8,503.9 465.4,515.0 466.9,526.1 469.2,537.1 472.5,548.0 476.7,558.8 481.8,569.5 487.7,579.8 494.6,589.9 502.3,599.7 510.8,609.1 520.1,618.0 530.2,626.5 541.0,634.5 552.5,641.8 564.7,648.6 577.4,654.7 590.7,660.2 604.4,664.9 618.5,668.9 633.0,672.1 647.7,674.5 662.6,676.1 677.6,677.0ZM692.6,685.0 707.5,684.2 722.3,682.5 736.9,680.1 751.3,676.9 765.3,672.9 779.0,668.2 792.1,662.8 804.8,656.7 816.9,649.9 828.3,642.6 839.1,634.7 849.1,626.2 858.4,617.3 866.8,607.9 874.5,598.2 881.3,588.1 887.2,577.7 892.3,567.1 896.5,556.3 899.7,545.4 902.1,534.4 903.6,523.4 904.2,512.3 903.9,501.3 902.7,490.4 900.8,479.7 898.0,469.1 894.4,458.7 890.0,448.5 884.9,438.7 879.1,429.1 872.6,419.9 865.4,411.1 857.6,402.7 849.3,394.7 840.3,387.1 830.9,380.0 821.0,373.3 810.7,367.2 799.9,361.6 788.8,356.5 777.4,351.9 765.7,347.9 753.7,344.4 741.5,341.5 729.2,339.2 716.7,337.5 704.1,336.3 691.4,335.7 678.8,335.7 666.1,336.3 653.5,337.5 641.0,339.2 628.7,341.5 616.5,344.4 604.5,347.9 592.8,351.9 581.4,356.5 570.3,361.6 559.5,367.2 549.2,373.3 539.3,380.0 529.9,387.1 520.9,394.7 512.6,402.7 504.8,411.1 497.6,419.9 491.1,429.1 485.3,438.7 480.2,448.5 475.8,458.7 472.2,469.1 469.4,479.7 467.5,490.4 466.3,501.3 466.0,512.3 466.6,523.4 468.1,534.4 470.5,545.4 473.7,556.3 477.9,567.1 483.0,577.7 488.9,588.1 495.7,598.2 503.4,607.9 511.8,617.3 521.1,626.2 531.1,634.7 541.9,642.6 553.3,649.9 565.4,656.7 578.1,662.8 591.2,668.2 604.9,672.9 618.9,676.9 633.3,680.1 647.9,682.5 662.7,684.2 677.6,685.0ZM694.4,367.9L692.6,685.0M713.0,367.0L707.5,684.2M731.4,365.3L722.3,682.5M749.5,362.7L736.9,680.1M767.4,359.3L751.3,676.9M784.8,355.0L765.3,672.9M801.7,350.0L779.0,668.2M817.9,344.2L792.1,662.8M833.6,337.7L804.8,656.7M848.4,330.5L816.9,649.9M862.5,322.7L828.3,642.6M875.6,314.3L839.1,634.7M887.9,305.3L849.1,626.2M899.1,295.9L858.4,617.3M909.4,286.0L866.8,607.9M918.6,275.7L874.5,598.2M926.7,265.2L881.3,588.1M933.7,254.3L887.2,577.7M939.7,243.2L892.3,567.1M944.5,232.0L896.5,556.3M948.2,220.6L899.7,545.4M950.8,209.2L902.1,534.4M952.3,197.7L903.6,523.4M952.7,186.3L904.2,512.3M952.1,175.0L903.9,501.3M950.4,163.7L902.7,490.4M947.7,152.7L900.8,479.7M944.0,141.8L898.0,469.1M939.3,131.2L894.4,458.7M933.8,120.9L890.0,448.5M927.3,110.8L884.9,438.7M920.0,101.1L879.1,429.1M911.9,91.8L872.6,419.9M903.0,82.9L865.4,411.1M893.5,74.4L857.6,402.7M883.2,66.3L849.3,394.7M872.3,58.6L840.3,387.1M860.8,51.5L830.9,380.0M848.8,44.8L821.0,373.3M836.2,38.7L810.7,367.2M823.2,33.0L799.9,361.6M809.8,27.9L788.8,356.5M796.0,23.4L777.4,351.9M781.9,19.4L765.7,347.9M767.5,15.9L753.7,344.4M752.8,13.0L741.5,341.5M738.0,10.7L729.2,339.2M723.0,9.0L716.7,337.5M707.9,7.8L704.1,336.3M692.7,7.2L691.4,335.7M677.5,7.2L678.8,335.7M662.3,7.8L666.1,336.3M647.2,9.0L653.5,337.5M632.2,10.7L641.0,339.2M617.4,13.0L628.7,341.5M602.7,15.9L616.5,344.4M588.3,19.4L604.5,347.9M574.2,23.4L592.8,351.9M560.4,27.9L581.4,356.5M547.0,33.0L570.3,361.6M534.0,38.7L559.5,367.2M521.4,44.8L549.2,373.3M509.4,51.5L539.3,380.0M497.9,58.6L529.9,387.1M487.0,66.3L520.9,394.7M476.7,74.4L512.6,402.7M467.2,82.9L504.8,411.1M458.3,91.8L497.6,419.9M450.2,101.1L491.1,429.1M442.9,110.8L485.3,438.7M436.4,120.9L480.2,448.5M430.9,131.2L475.8,458.7M426.2,141.8L472.2,469.1M422.5,152.7L469.4,479.7M419.8,163.7L467.5,490.4M418.1,175.0L466.3,501.3M417.5,186.3L466.0,512.3M417.9,197.7L466.6,523.4M419.4,209.2L468.1,534.4M422.0,220.6L470.5,545.4M425.7,232.0L473.7,556.3M430.5,243.2L477.9,567.1M436.5,254.3L483.0,577.7M443.5,265.2L488.9,588.1M451.6,275.7L495.7,598.2M460.8,286.0L503.4,607.9M471.1,295.9L511.8,617.3M482.3,305.3L521.1,626.2M494.6,314.3L531.1,634.7M507.7,322.7L541.9,642.6M521.8,330.5L553.3,649.9M536.6,337.7L565.4,656.7M552.3,344.2L578.1,662.8M568.5,350.0L591.2,668.2M585.4,355.0L604.9,672.9M602.8,359.3L618.9,676.9M620.7,362.7L633.3,680.1M638.8,365.3L647.9,682.5M657.2,367.0L662.7,684.2M675.8,367.9L677.6,685.0" fill="none" stroke="#7c7c7c" stroke-width="1" shape-rendering="crispEdges" clip-path="url(#fc)"/>
<g fill="none" stroke="#43ffa3" stroke-width="1" shape-rendering="crispEdges"><path d="M717.6,305.1C716.4,304.6 712.2,303.4 710.1,302.1C708.0,300.9 706.4,299.6 705.1,297.6C703.9,295.6 703.0,293.0 702.6,290.1C702.3,287.2 702.5,283.8 703.1,280.1C703.8,276.3 704.8,271.7 706.4,267.6C708.0,263.4 710.3,259.2 712.6,255.0C714.9,250.9 717.2,247.5 720.2,242.5C723.1,237.6 726.8,231.5 730.2,225.2C733.5,219.0 736.8,212.7 740.2,205.2C743.5,197.7 747.5,187.7 750.2,180.2C752.9,172.7 754.8,166.4 756.5,160.2C758.1,153.9 759.7,148.0 760.2,142.6C760.8,137.2 760.8,132.0 759.7,127.6C758.7,123.2 756.4,119.3 754.0,116.3C751.5,113.4 748.3,111.6 745.2,110.1C742.1,108.5 738.5,107.6 735.2,107.1C731.8,106.5 728.5,106.7 725.2,106.8C721.8,107.0 719.3,106.9 715.1,108.1C711.0,109.2 705.5,111.0 700.1,113.8C694.7,116.7 688.4,120.7 682.6,125.1C676.8,129.5 670.1,134.7 665.1,140.1C660.1,145.5 655.9,151.8 652.5,157.6C649.2,163.5 646.5,170.2 645.0,175.2C643.6,180.2 643.4,183.1 643.8,187.7C644.2,192.3 645.2,198.1 647.5,202.7C649.8,207.3 653.0,211.7 657.6,215.2C662.1,218.8 668.8,221.7 675.1,224.0C681.3,226.3 687.6,228.0 695.1,229.0C702.6,230.0 711.8,230.2 720.2,229.8C728.5,229.3 736.8,228.1 745.2,226.5C753.5,224.9 761.9,222.7 770.2,220.2C778.6,217.7 786.9,214.8 795.3,211.5C803.6,208.1 812.0,204.4 820.3,200.2C828.6,196.0 837.8,191.4 845.3,186.4C852.8,181.4 859.9,175.4 865.4,170.2C870.8,164.9 874.6,160.2 877.9,155.1C881.1,150.1 883.6,144.7 884.9,140.1C886.1,135.5 886.1,131.8 885.4,127.6C884.6,123.4 882.9,119.0 880.4,115.1C877.9,111.1 874.5,107.4 870.4,103.8C866.2,100.3 860.8,96.7 855.4,93.8C849.9,90.9 844.1,88.3 837.8,86.3C831.6,84.3 824.1,83.0 817.8,82.0C811.5,81.1 806.1,80.9 800.3,80.8C794.4,80.7 788.6,80.6 782.7,81.3C776.9,82.0 771.1,83.2 765.2,85.0C759.4,86.9 752.7,89.8 747.7,92.5C742.7,95.3 738.4,98.4 735.2,101.3C731.9,104.2 729.8,106.7 728.2,110.1C726.5,113.4 725.4,117.6 725.2,121.3C724.9,125.1 725.6,128.6 726.4,132.6C727.2,136.6 728.3,140.5 730.2,145.1C732.0,149.7 734.3,154.7 737.7,160.2C741.0,165.6 745.6,171.8 750.2,177.7C754.8,183.5 759.4,188.7 765.2,195.2C771.1,201.7 777.7,209.0 785.2,216.5C792.8,224.0 804.4,234.6 810.3,240.0C816.1,245.4 814.5,243.4 820.3,248.8C826.1,254.2 837.0,264.8 845.3,272.6C853.7,280.3 862.0,287.8 870.4,295.1C878.7,302.4 889.2,310.5 895.4,316.4C901.7,322.2 904.4,325.8 907.9,330.2C911.5,334.5 914.5,338.9 916.7,342.7C918.9,346.4 920.5,351.0 921.2,352.7"/><path d="M522.9,258.5C525.1,259.4 530.2,261.6 535.9,263.7C541.5,265.8 549.8,268.8 556.7,271.0C563.7,273.3 570.6,275.3 577.6,277.3C584.6,279.3 591.5,281.2 598.5,282.9C605.4,284.7 613.3,286.3 619.3,287.7C625.4,289.2 630.7,290.6 635.0,291.5C639.3,292.4 639.2,292.1 645.0,293.1C650.9,294.1 661.7,296.1 670.1,297.6C678.4,299.1 687.2,300.6 695.1,301.9C703.0,303.1 713.9,304.6 717.6,305.1"/><path d="M521.3,164.6C523.0,164.6 528.2,164.3 531.7,164.6C535.2,165.0 538.7,165.7 542.1,166.7C545.6,167.7 549.1,169.0 552.6,170.9C556.0,172.8 560.0,175.4 563.0,178.2C566.0,181.0 568.6,184.3 570.3,187.6C572.0,190.9 573.1,194.2 573.4,198.0C573.8,201.8 573.3,206.3 572.4,210.5C571.5,214.7 570.0,218.9 568.2,223.0C566.5,227.2 564.6,231.6 562.0,235.6C559.3,239.6 555.9,243.4 552.6,247.0C549.3,250.7 545.6,254.3 542.1,257.5C538.7,260.6 535.2,263.4 531.7,265.8C528.2,268.3 523.0,271.0 521.3,272.1"/><path d="M916.7,369.0C915.7,369.9 913.1,372.8 910.4,374.7C907.7,376.6 903.3,378.9 900.4,380.2C897.5,381.6 894.5,383.6 892.9,382.7C891.3,381.9 890.7,379.0 890.9,375.2C891.1,371.5 893.1,365.6 894.2,360.2C895.2,354.8 896.7,348.5 897.4,342.7C898.1,336.8 898.3,331.4 898.4,325.1C898.5,318.9 898.4,311.8 897.9,305.1C897.4,298.4 896.5,291.3 895.4,285.1C894.4,278.8 893.3,273.0 891.7,267.6C890.0,262.1 887.7,256.9 885.4,252.5C883.1,248.2 880.8,243.9 877.9,241.3C875.0,238.7 871.2,236.8 867.9,237.0C864.5,237.2 860.6,239.9 857.9,242.5C855.1,245.1 853.4,248.4 851.6,252.5C849.8,256.7 848.4,262.1 847.3,267.6C846.3,273.0 845.5,278.8 845.3,285.1C845.1,291.3 845.5,298.4 846.1,305.1C846.7,311.8 847.8,318.5 849.1,325.1C850.4,331.8 852.2,338.5 854.1,345.2C856.0,351.8 857.9,358.5 860.4,365.2C862.9,371.9 866.2,379.4 869.1,385.2C872.0,391.1 875.2,395.9 877.9,400.3C880.6,404.6 882.0,407.6 885.3,411.3C888.6,415.0 893.2,419.2 897.8,422.5C902.4,425.9 909.1,429.2 912.8,431.3C916.6,433.4 918.2,433.6 920.3,435.1C922.4,436.5 924.2,438.0 925.3,440.1C926.5,442.1 927.1,444.7 927.1,447.6C927.1,450.5 926.5,453.8 925.3,457.6C924.2,461.3 922.4,465.9 920.3,470.1C918.2,474.3 914.9,479.1 912.8,482.6C910.7,486.2 909.9,487.6 907.8,491.4C905.7,495.1 902.8,501.2 900.3,505.2C897.8,509.1 896.1,511.4 892.8,515.2C889.5,518.9 884.0,523.9 880.3,527.7C876.5,531.4 873.6,535.0 870.3,537.7C866.9,540.4 863.0,542.9 860.2,544.0C857.5,545.0 855.7,544.8 854.0,544.0C852.3,543.1 851.0,541.3 850.2,539.0C849.5,536.7 849.1,533.3 849.5,530.2C849.9,527.1 850.9,523.9 852.7,520.2C854.5,516.4 857.3,511.2 860.2,507.7C863.2,504.1 866.5,501.3 870.3,498.9C874.0,496.5 878.6,494.2 882.8,493.1C886.9,492.1 891.7,492.2 895.3,492.6C898.8,493.1 901.1,493.8 904.1,495.9C907.0,498.0 910.1,501.1 912.8,505.2C915.5,509.2 918.2,514.8 920.3,520.2C922.4,525.6 924.2,531.2 925.3,537.7C926.5,544.2 927.3,552.1 927.3,559.0C927.3,565.9 926.3,572.4 925.3,579.1C924.4,585.7 923.3,592.8 921.6,599.1C919.9,605.3 917.6,611.2 915.3,616.6C913.0,622.0 910.7,627.0 907.8,631.6C904.9,636.2 901.3,640.6 897.8,644.2C894.2,647.7 890.3,650.8 886.5,652.9C882.8,655.1 878.8,656.5 875.3,657.2C871.7,657.9 869.0,657.9 865.2,657.2C861.5,656.5 856.9,654.9 852.7,652.9C848.6,651.0 844.4,648.3 840.2,645.4C836.0,642.5 831.9,639.4 827.7,635.4C823.5,631.4 819.3,626.6 815.2,621.6C811.0,616.6 806.1,610.3 802.7,605.3C799.2,600.4 797.7,596.6 794.7,592.0C791.8,587.3 788.3,582.4 785.0,577.4C781.8,572.3 778.5,567.0 775.3,561.8C772.0,556.6 768.8,551.4 765.5,546.2C762.3,541.0 759.0,535.5 755.8,530.6C752.5,525.8 749.3,521.2 746.1,517.0C742.8,512.8 739.6,508.4 736.3,505.3C733.1,502.2 729.5,499.9 726.6,498.5C723.7,497.1 721.2,496.7 718.8,497.1C716.4,497.6 713.8,499.1 712.0,501.4C710.2,503.8 708.9,507.6 708.1,511.2C707.3,514.7 707.1,518.6 707.1,522.8C707.1,527.1 707.6,532.3 708.1,536.5C708.6,540.7 709.2,544.3 710.0,548.2C710.8,552.1 711.8,555.9 713.0,559.8C714.1,563.7 715.2,567.3 716.8,571.5C718.5,575.7 720.4,580.9 722.7,585.2C725.0,589.4 727.9,593.4 730.5,596.8C733.1,600.3 735.7,603.3 738.3,605.6C740.9,607.9 743.8,610.0 746.1,610.5C748.3,611.0 750.4,609.8 751.9,608.5C753.4,607.2 754.3,605.3 754.8,602.7C755.4,600.1 755.4,596.2 755.2,593.0C755.0,589.7 754.6,586.5 753.8,583.2C753.1,580.0 752.2,577.0 750.9,573.5C749.6,569.9 747.8,565.4 746.1,561.8C744.3,558.2 742.5,555.6 740.2,552.1C737.9,548.5 735.3,544.3 732.4,540.4C729.5,536.5 725.9,532.3 722.7,528.7C719.4,525.1 716.5,522.2 713.0,518.9C709.4,515.7 705.5,512.5 701.3,509.2C697.0,506.0 692.5,502.7 687.6,499.5C682.8,496.2 677.2,492.8 672.1,489.7C666.9,486.7 660.0,482.7 656.5,481.0C653.0,479.2 653.0,479.9 650.9,479.2C648.9,478.6 646.2,477.5 644.1,476.9C642.0,476.4 640.2,476.0 638.3,475.9C636.3,475.9 634.0,476.0 632.4,476.7C630.8,477.4 628.7,478.5 628.5,480.0C628.3,481.5 629.4,483.6 631.2,485.8C632.9,488.1 635.7,490.7 638.9,493.6C642.2,496.6 645.8,499.5 650.6,503.4C655.5,507.3 662.0,512.3 668.2,517.0C674.3,521.7 680.8,526.6 687.6,531.6C694.4,536.6 702.2,542.2 709.1,547.2C715.9,552.2 722.0,557.1 728.5,561.8C735.0,566.5 742.3,571.5 748.0,575.4C753.7,579.3 760.2,583.5 762.6,585.2"/><path d="M762.6,585.2C760.2,584.0 753.7,581.6 748.0,578.3C742.3,575.1 735.0,569.9 728.5,565.7C722.0,561.5 715.9,557.6 709.1,553.0C702.2,548.5 694.4,543.1 687.6,538.4C680.8,533.7 674.7,529.7 668.2,524.8C661.7,519.9 655.2,514.7 648.7,509.2C642.2,503.7 634.4,496.6 629.2,491.7C624.0,486.8 621.2,484.2 617.5,480.0C613.8,475.8 611.1,471.7 607.1,466.6C603.1,461.4 598.3,455.9 593.5,449.1C588.6,442.2 582.8,433.2 577.9,425.7C573.0,418.2 568.8,411.4 564.3,404.3C559.7,397.1 555.2,390.0 550.6,382.8C546.1,375.7 541.5,367.9 537.0,361.4C532.5,354.9 526.3,347.7 523.4,343.9C520.4,340.1 520.1,339.4 519.5,338.4"/><path d="M428.2,457.0C426.9,459.4 422.5,466.4 420.2,471.1C417.8,475.9 415.8,480.2 414.1,485.3C412.4,490.3 411.2,495.7 410.1,501.4C409.0,507.1 408.3,513.9 407.7,519.6C407.1,525.3 406.6,529.7 406.5,535.7C406.3,541.8 406.7,551.2 406.7,555.9C406.6,560.5 406.3,560.2 406.4,563.6C406.5,567.0 407.0,572.0 407.4,576.2C407.8,580.4 408.2,584.3 408.8,588.7C409.4,593.1 410.1,597.7 410.9,602.6C411.7,607.5 412.6,613.3 413.6,617.9C414.6,622.5 416.2,628.3 416.7,630.4"/><path d="M416.7,630.4C417.0,629.0 417.9,625.1 418.5,622.1C419.1,619.1 419.8,615.8 420.6,612.3C421.4,608.8 422.3,605.1 423.4,601.2C424.4,597.3 425.6,592.9 426.9,588.7C428.2,584.5 429.5,580.6 431.0,576.2C432.5,571.8 434.3,566.9 435.9,562.3C437.5,557.6 439.4,552.1 440.8,548.3C442.2,544.5 442.8,543.9 444.4,539.7C446.0,535.6 448.4,529.0 450.4,523.6C452.5,518.2 454.6,512.5 456.5,507.5C458.3,502.4 460.0,497.7 461.5,493.3C463.1,489.0 464.2,485.3 465.6,481.2C466.9,477.2 468.4,472.8 469.6,469.1C470.8,465.5 472.0,461.5 472.6,459.4C473.3,457.4 473.3,457.4 473.4,457.0"/><path d="M444.8,457.0C446.1,459.4 449.8,466.8 452.5,471.1C455.1,475.5 457.8,479.5 460.5,483.2C463.2,486.9 465.9,490.1 468.6,493.3C471.3,496.5 473.6,499.2 476.7,502.4C479.7,505.6 483.4,509.1 486.8,512.5C490.1,515.9 493.5,519.4 496.9,522.6C500.2,525.8 503.6,528.8 506.9,531.7C510.3,534.5 513.7,537.2 517.0,539.7C520.4,542.3 523.8,544.5 527.1,546.8C530.5,549.2 534.2,552.0 537.2,553.9C540.2,555.7 543.3,556.7 545.3,557.9C547.3,559.1 548.6,560.4 549.3,560.9"/><path d="M549.3,560.9C548.6,560.3 547.3,558.6 545.3,556.9C543.3,555.2 540.6,553.2 537.2,550.8C533.8,548.5 529.1,545.3 525.1,542.8C521.1,540.3 517.0,537.9 513.0,535.7C509.0,533.5 504.6,531.5 500.9,529.7C497.2,527.8 494.2,526.3 490.8,524.6C487.4,522.9 484.1,521.1 480.7,519.6C477.3,518.1 473.6,516.8 470.6,515.5C467.6,514.3 465.2,513.0 462.6,511.9C459.9,510.8 457.5,510.0 454.5,509.1C451.5,508.2 447.8,507.3 444.4,506.5C441.0,505.6 437.7,504.6 434.3,504.0C430.9,503.5 427.1,503.0 424.2,503.0C421.4,503.0 418.8,503.3 417.2,504.0C415.5,504.8 414.7,505.9 414.5,507.5C414.4,509.0 414.9,511.3 416.1,513.5C417.4,515.7 419.5,517.9 422.2,520.6C424.9,523.3 428.6,526.6 432.3,529.7C436.0,532.7 440.4,535.9 444.4,538.7C448.4,541.6 452.5,544.1 456.5,546.8C460.5,549.5 465.2,552.7 468.6,554.9C472.0,557.1 474.0,558.2 476.7,559.9C479.4,561.6 481.7,562.9 484.7,565.0C487.8,567.0 491.5,569.7 494.8,572.0C498.2,574.4 501.6,576.7 504.9,579.1C508.3,581.4 511.6,583.8 515.0,586.2C518.4,588.5 522.7,591.6 525.1,593.2C527.5,594.8 528.5,595.2 529.1,595.6"/><path d="M529.1,595.6C528.5,595.2 527.1,594.8 525.1,593.2C523.1,591.6 520.1,589.0 517.0,586.2C514.0,583.3 510.3,579.8 506.9,576.1C503.6,572.4 500.2,568.0 496.9,564.0C493.5,559.9 489.8,555.7 486.8,551.9C483.7,548.0 481.4,544.5 478.7,540.8C476.0,537.1 473.0,533.2 470.6,529.7C468.3,526.1 466.6,523.1 464.6,519.6C462.6,516.0 460.5,512.3 458.5,508.5C456.5,504.6 454.5,500.6 452.5,496.4C450.4,492.2 448.4,487.8 446.4,483.2C444.4,478.7 442.0,473.1 440.4,469.1C438.7,465.2 437.1,461.5 436.3,459.4C435.5,457.4 435.6,457.4 435.5,457.0"/></g>
<path d="M694.4,367.9 713.0,367.0 731.4,365.3 749.5,362.7 767.4,359.3 784.8,355.0 801.7,350.0 817.9,344.2 833.6,337.7 848.4,330.5 862.5,322.7 875.6,314.3 887.9,305.3 899.1,295.9 909.4,286.0 918.6,275.7 926.7,265.2 933.7,254.3 939.7,243.2 944.5,232.0 948.2,220.6 950.8,209.2 952.3,197.7 952.7,186.3 952.1,175.0 950.4,163.7 947.7,152.7 944.0,141.8 939.3,131.2 933.8,120.9 927.3,110.8 920.0,101.1 911.9,91.8 903.0,82.9 893.5,74.4 883.2,66.3 872.3,58.6 860.8,51.5 848.8,44.8 836.2,38.7 823.2,33.0 809.8,27.9 796.0,23.4 781.9,19.4 767.5,15.9 752.8,13.0 738.0,10.7 723.0,9.0 707.9,7.8 692.7,7.2 677.5,7.2 662.3,7.8 647.2,9.0 632.2,10.7 617.4,13.0 602.7,15.9 588.3,19.4 574.2,23.4 560.4,27.9 547.0,33.0 534.0,38.7 521.4,44.8 509.4,51.5 497.9,58.6 487.0,66.3 476.7,74.4 467.2,82.9 458.3,91.8 450.2,101.1 442.9,110.8 436.4,120.9 430.9,131.2 426.2,141.8 422.5,152.7 419.8,163.7 418.1,175.0 417.5,186.3 417.9,197.7 419.4,209.2 422.0,220.6 425.7,232.0 430.5,243.2 436.5,254.3 443.5,265.2 451.6,275.7 460.8,286.0 471.1,295.9 482.3,305.3 494.6,314.3 507.7,322.7 521.8,330.5 536.6,337.7 552.3,344.2 568.5,350.0 585.4,355.0 602.8,359.3 620.7,362.7 638.8,365.3 657.2,367.0 675.8,367.9ZM694.3,380.1 712.8,379.3 731.0,377.5 749.1,374.9 766.8,371.5 784.0,367.3 800.8,362.2 817.0,356.5 832.4,350.0 847.2,342.8 861.1,335.0 874.2,326.6 886.4,317.6 897.6,308.2 907.8,298.3 916.9,288.1 925.0,277.5 932.0,266.6 937.9,255.6 942.7,244.3 946.4,232.9 948.9,221.5 950.4,210.1 950.9,198.7 950.2,187.3 948.6,176.1 945.9,165.0 942.2,154.2 937.6,143.6 932.1,133.2 925.7,123.2 918.5,113.5 910.4,104.1 901.6,95.2 892.1,86.7 881.9,78.6 871.1,70.9 859.7,63.8 847.7,57.1 835.3,50.9 822.3,45.3 809.0,40.2 795.3,35.6 781.3,31.6 766.9,28.2 752.4,25.3 737.6,23.0 722.7,21.2 707.7,20.0 692.6,19.5 677.6,19.5 662.5,20.0 647.5,21.2 632.6,23.0 617.8,25.3 603.3,28.2 588.9,31.6 574.9,35.6 561.2,40.2 547.9,45.3 534.9,50.9 522.5,57.1 510.5,63.8 499.1,70.9 488.3,78.6 478.1,86.7 468.6,95.2 459.8,104.1 451.7,113.5 444.5,123.2 438.1,133.2 432.6,143.6 428.0,154.2 424.3,165.0 421.6,176.1 420.0,187.3 419.3,198.7 419.8,210.1 421.3,221.5 423.8,232.9 427.5,244.3 432.3,255.6 438.2,266.6 445.2,277.5 453.3,288.1 462.4,298.3 472.6,308.2 483.8,317.6 496.0,326.6 509.1,335.0 523.0,342.8 537.8,350.0 553.2,356.5 569.4,362.2 586.2,367.3 603.4,371.5 621.1,374.9 639.2,377.5 657.4,379.3 675.9,380.1ZM694.3,392.2 712.5,391.3 730.7,389.6 748.6,387.0 766.1,383.6 783.3,379.3 799.9,374.3 816.0,368.5 831.4,362.1 846.0,354.9 859.9,347.1 872.8,338.7 884.9,329.8 896.0,320.3 906.1,310.5 915.2,300.2 923.3,289.7 930.2,278.8 936.1,267.7 940.9,256.5 944.5,245.1 947.1,233.7 948.6,222.3 949.1,210.8 948.4,199.5 946.8,188.3 944.1,177.2 940.5,166.4 936.0,155.7 930.5,145.4 924.1,135.4 917.0,125.6 909.0,116.3 900.2,107.4 890.8,98.8 880.7,90.7 869.9,83.1 858.6,75.9 846.7,69.2 834.3,63.1 821.5,57.4 808.2,52.3 794.6,47.7 780.7,43.7 766.4,40.3 752.0,37.4 737.3,35.0 722.5,33.3 707.6,32.1 692.6,31.5 677.6,31.5 662.6,32.1 647.7,33.3 632.9,35.0 618.2,37.4 603.8,40.3 589.5,43.7 575.6,47.7 562.0,52.3 548.7,57.4 535.9,63.1 523.5,69.2 511.6,75.9 500.3,83.1 489.5,90.7 479.4,98.8 470.0,107.4 461.2,116.3 453.2,125.6 446.1,135.4 439.7,145.4 434.2,155.7 429.7,166.4 426.1,177.2 423.4,188.3 421.8,199.5 421.1,210.8 421.6,222.3 423.1,233.7 425.7,245.1 429.3,256.5 434.1,267.7 440.0,278.8 446.9,289.7 455.0,300.2 464.1,310.5 474.2,320.3 485.3,329.8 497.4,338.7 510.3,347.1 524.2,354.9 538.8,362.1 554.2,368.5 570.3,374.3 586.9,379.3 604.1,383.6 621.6,387.0 639.5,389.6 657.7,391.3 675.9,392.2ZM694.2,404.0 712.3,403.2 730.3,401.4 748.1,398.9 765.5,395.5 782.6,391.2 799.1,386.2 815.0,380.5 830.3,374.0 844.8,366.8 858.6,359.0 871.5,350.6 883.5,341.7 894.5,332.3 904.6,322.4 913.6,312.2 921.6,301.6 928.5,290.8 934.3,279.7 939.1,268.5 942.7,257.1 945.3,245.7 946.8,234.3 947.3,222.9 946.7,211.5 945.0,200.3 942.4,189.3 938.8,178.4 934.3,167.8 928.9,157.4 922.6,147.4 915.5,137.7 907.5,128.3 898.9,119.4 889.5,110.8 879.4,102.7 868.8,95.1 857.5,87.9 845.7,81.2 833.4,75.0 820.6,69.4 807.5,64.3 793.9,59.7 780.1,55.7 765.9,52.2 751.6,49.3 737.0,47.0 722.3,45.2 707.4,44.1 692.6,43.5 677.6,43.5 662.8,44.1 647.9,45.2 633.2,47.0 618.6,49.3 604.3,52.2 590.1,55.7 576.3,59.7 562.7,64.3 549.6,69.4 536.8,75.0 524.5,81.2 512.7,87.9 501.4,95.1 490.8,102.7 480.7,110.8 471.3,119.4 462.7,128.3 454.7,137.7 447.6,147.4 441.3,157.4 435.9,167.8 431.4,178.4 427.8,189.3 425.2,200.3 423.5,211.5 422.9,222.9 423.4,234.3 424.9,245.7 427.5,257.1 431.1,268.5 435.9,279.7 441.7,290.8 448.6,301.6 456.6,312.2 465.6,322.4 475.7,332.3 486.7,341.7 498.7,350.6 511.6,359.0 525.4,366.8 539.9,374.0 555.2,380.5 571.1,386.2 587.6,391.2 604.7,395.5 622.1,398.9 639.9,401.4 657.9,403.2 676.0,404.0ZM694.1,415.7 712.1,414.9 730.0,413.1 747.6,410.6 764.9,407.2 781.8,402.9 798.2,397.9 814.1,392.2 829.2,385.7 843.7,378.6 857.3,370.8 870.1,362.4 882.0,353.5 893.0,344.1 903.0,334.3 912.0,324.0 919.9,313.5 926.8,302.6 932.6,291.6 937.3,280.3 941.0,269.0 943.5,257.6 945.0,246.1 945.5,234.7 944.9,223.4 943.3,212.2 940.7,201.1 937.2,190.3 932.7,179.6 927.3,169.3 921.0,159.2 914.0,149.5 906.1,140.2 897.5,131.2 888.2,122.7 878.2,114.6 867.6,106.9 856.4,99.7 844.7,93.0 832.5,86.9 819.8,81.2 806.7,76.1 793.3,71.5 779.5,67.5 765.4,64.0 751.2,61.1 736.7,58.8 722.0,57.0 707.3,55.9 692.5,55.3 677.7,55.3 662.9,55.9 648.2,57.0 633.5,58.8 619.0,61.1 604.8,64.0 590.7,67.5 576.9,71.5 563.5,76.1 550.4,81.2 537.7,86.9 525.5,93.0 513.8,99.7 502.6,106.9 492.0,114.6 482.0,122.7 472.7,131.2 464.1,140.2 456.2,149.5 449.2,159.2 442.9,169.3 437.5,179.6 433.0,190.3 429.5,201.1 426.9,212.2 425.3,223.4 424.7,234.7 425.2,246.1 426.7,257.6 429.2,269.0 432.9,280.3 437.6,291.6 443.4,302.6 450.3,313.5 458.2,324.0 467.2,334.3 477.2,344.1 488.2,353.5 500.1,362.4 512.9,370.8 526.5,378.6 541.0,385.7 556.1,392.2 572.0,397.9 588.4,402.9 605.3,407.2 622.6,410.6 640.2,413.1 658.1,414.9 676.1,415.7ZM694.1,427.3 711.9,426.4 729.7,424.7 747.2,422.1 764.4,418.7 781.1,414.5 797.4,409.5 813.1,403.7 828.2,397.3 842.5,390.1 856.1,382.4 868.8,374.0 880.6,365.1 891.5,355.7 901.5,345.9 910.4,335.7 918.3,325.1 925.1,314.3 930.9,303.3 935.6,292.0 939.2,280.7 941.8,269.3 943.3,257.8 943.8,246.4 943.2,235.1 941.6,223.9 939.0,212.8 935.5,202.0 931.1,191.4 925.7,181.0 919.5,170.9 912.5,161.2 904.7,151.9 896.2,142.9 886.9,134.4 877.0,126.2 866.5,118.6 855.3,111.4 843.7,104.7 831.6,98.5 819.0,92.9 806.0,87.7 792.6,83.2 778.9,79.1 764.9,75.7 750.8,72.8 736.4,70.4 721.8,68.7 707.2,67.5 692.5,66.9 677.7,66.9 663.0,67.5 648.4,68.7 633.8,70.4 619.4,72.8 605.3,75.7 591.3,79.1 577.6,83.2 564.2,87.7 551.2,92.9 538.6,98.5 526.5,104.7 514.9,111.4 503.7,118.6 493.2,126.2 483.3,134.4 474.0,142.9 465.5,151.9 457.7,161.2 450.7,170.9 444.5,181.0 439.1,191.4 434.7,202.0 431.2,212.8 428.6,223.9 427.0,235.1 426.4,246.4 426.9,257.8 428.4,269.3 431.0,280.7 434.6,292.0 439.3,303.3 445.1,314.3 451.9,325.1 459.8,335.7 468.7,345.9 478.7,355.7 489.6,365.1 501.4,374.0 514.1,382.4 527.7,390.1 542.0,397.3 557.1,403.7 572.8,409.5 589.1,414.5 605.8,418.7 623.0,422.1 640.5,424.7 658.3,426.4 676.1,427.3ZM694.0,438.6 711.7,437.8 729.3,436.0 746.7,433.5 763.8,430.1 780.4,425.9 796.6,420.9 812.2,415.1 827.2,408.7 841.4,401.6 854.9,393.8 867.5,385.4 879.3,376.6 890.1,367.2 900.0,357.4 908.8,347.2 916.7,336.6 923.5,325.8 929.2,314.8 933.9,303.6 937.5,292.2 940.1,280.8 941.6,269.4 942.0,258.0 941.5,246.7 939.9,235.4 937.4,224.4 933.9,213.5 929.5,202.9 924.2,192.6 918.0,182.5 911.1,172.8 903.3,163.4 894.8,154.5 885.7,145.9 875.8,137.8 865.3,130.1 854.3,122.9 842.7,116.3 830.7,110.1 818.1,104.4 805.2,99.3 791.9,94.7 778.3,90.6 764.5,87.2 750.4,84.3 736.1,81.9 721.6,80.2 707.0,79.0 692.4,78.4 677.8,78.4 663.2,79.0 648.6,80.2 634.1,81.9 619.8,84.3 605.7,87.2 591.9,90.6 578.3,94.7 565.0,99.3 552.1,104.4 539.5,110.1 527.5,116.3 515.9,122.9 504.9,130.1 494.4,137.8 484.5,145.9 475.4,154.5 466.9,163.4 459.1,172.8 452.2,182.5 446.0,192.6 440.7,202.9 436.3,213.5 432.8,224.4 430.3,235.4 428.7,246.7 428.2,258.0 428.6,269.4 430.1,280.8 432.7,292.2 436.3,303.6 441.0,314.8 446.7,325.8 453.5,336.6 461.4,347.2 470.2,357.4 480.1,367.2 490.9,376.6 502.7,385.4 515.3,393.8 528.8,401.6 543.0,408.7 558.0,415.1 573.6,420.9 589.8,425.9 606.4,430.1 623.5,433.5 640.9,436.0 658.5,437.8 676.2,438.6ZM693.9,449.8 711.5,448.9 729.0,447.2 746.3,444.7 763.2,441.3 779.8,437.1 795.8,432.1 811.3,426.4 826.1,419.9 840.3,412.8 853.7,405.1 866.2,396.7 877.9,387.8 888.7,378.5 898.5,368.7 907.3,358.5 915.1,348.0 921.8,337.2 927.5,326.1 932.2,314.9 935.8,303.6 938.4,292.2 939.9,280.8 940.3,269.4 939.8,258.1 938.3,246.9 935.7,235.8 932.3,224.9 927.9,214.3 922.7,204.0 916.6,193.9 909.6,184.2 902.0,174.8 893.5,165.9 884.4,157.3 874.6,149.2 864.2,141.5 853.3,134.3 841.8,127.6 829.8,121.5 817.3,115.8 804.5,110.7 791.3,106.1 777.8,102.0 764.0,98.6 750.0,95.6 735.7,93.3 721.4,91.6 706.9,90.4 692.4,89.8 677.8,89.8 663.3,90.4 648.8,91.6 634.5,93.3 620.2,95.6 606.2,98.6 592.4,102.0 578.9,106.1 565.7,110.7 552.9,115.8 540.4,121.5 528.4,127.6 516.9,134.3 506.0,141.5 495.6,149.2 485.8,157.3 476.7,165.9 468.2,174.8 460.6,184.2 453.6,193.9 447.5,204.0 442.3,214.3 437.9,224.9 434.5,235.8 431.9,246.9 430.4,258.1 429.9,269.4 430.3,280.8 431.8,292.2 434.4,303.6 438.0,314.9 442.7,326.1 448.4,337.2 455.1,348.0 462.9,358.5 471.7,368.7 481.5,378.5 492.3,387.8 504.0,396.7 516.5,405.1 529.9,412.8 544.1,419.9 558.9,426.4 574.4,432.1 590.4,437.1 607.0,441.3 623.9,444.7 641.2,447.2 658.7,448.9 676.3,449.8ZM693.9,460.8 711.4,460.0 728.7,458.3 745.8,455.7 762.7,452.3 779.1,448.1 795.0,443.2 810.4,437.4 825.1,431.0 839.2,423.9 852.5,416.2 864.9,407.8 876.6,399.0 887.2,389.6 897.0,379.8 905.7,369.6 913.5,359.1 920.2,348.3 925.9,337.3 930.5,326.1 934.1,314.8 936.7,303.4 938.2,292.0 938.7,280.6 938.1,269.3 936.6,258.1 934.1,247.1 930.7,236.2 926.4,225.6 921.2,215.2 915.1,205.2 908.2,195.5 900.6,186.1 892.2,177.1 883.2,168.6 873.5,160.5 863.1,152.8 852.2,145.6 840.8,138.9 828.9,132.7 816.5,127.0 803.8,121.9 790.7,117.3 777.2,113.3 763.5,109.8 749.6,106.9 735.4,104.6 721.2,102.8 706.8,101.6 692.3,101.0 677.9,101.0 663.4,101.6 649.0,102.8 634.8,104.6 620.6,106.9 606.7,109.8 593.0,113.3 579.5,117.3 566.4,121.9 553.7,127.0 541.3,132.7 529.4,138.9 518.0,145.6 507.1,152.8 496.7,160.5 487.0,168.6 478.0,177.1 469.6,186.1 462.0,195.5 455.1,205.2 449.0,215.2 443.8,225.6 439.5,236.2 436.1,247.1 433.6,258.1 432.1,269.3 431.5,280.6 432.0,292.0 433.5,303.4 436.1,314.8 439.7,326.1 444.3,337.3 450.0,348.3 456.7,359.1 464.5,369.6 473.2,379.8 483.0,389.6 493.6,399.0 505.3,407.8 517.7,416.2 531.0,423.9 545.1,431.0 559.8,437.4 575.2,443.2 591.1,448.1 607.5,452.3 624.4,455.7 641.5,458.3 658.8,460.0 676.3,460.8ZM693.8,471.7 711.2,470.9 728.4,469.1 745.4,466.6 762.1,463.2 778.4,459.0 794.2,454.1 809.5,448.4 824.2,441.9 838.1,434.8 851.3,427.1 863.7,418.8 875.2,409.9 885.8,400.6 895.5,390.8 904.2,380.7 911.9,370.2 918.6,359.4 924.3,348.4 928.9,337.2 932.5,325.9 935.0,314.5 936.5,303.1 937.0,291.7 936.5,280.4 935.0,269.2 932.5,258.2 929.1,247.3 924.8,236.7 919.7,226.4 913.7,216.3 906.9,206.6 899.3,197.2 891.0,188.3 882.0,179.7 872.3,171.6 862.1,163.9 851.2,156.7 839.9,150.0 828.0,143.8 815.8,138.2 803.1,133.0 790.0,128.4 776.7,124.4 763.1,120.9 749.2,118.0 735.1,115.7 721.0,113.9 706.7,112.7 692.3,112.1 677.9,112.1 663.5,112.7 649.2,113.9 635.1,115.7 621.0,118.0 607.1,120.9 593.5,124.4 580.2,128.4 567.1,133.0 554.4,138.2 542.2,143.8 530.3,150.0 519.0,156.7 508.1,163.9 497.9,171.6 488.2,179.7 479.2,188.3 470.9,197.2 463.3,206.6 456.5,216.3 450.5,226.4 445.4,236.7 441.1,247.3 437.7,258.2 435.2,269.2 433.7,280.4 433.2,291.7 433.7,303.1 435.2,314.5 437.7,325.9 441.3,337.2 445.9,348.4 451.6,359.4 458.3,370.2 466.0,380.7 474.7,390.8 484.4,400.6 495.0,409.9 506.5,418.8 518.9,427.1 532.1,434.8 546.0,441.9 560.7,448.4 576.0,454.1 591.8,459.0 608.1,463.2 624.8,466.6 641.8,469.1 659.0,470.9 676.4,471.7ZM693.7,482.4 711.0,481.6 728.1,479.9 745.0,477.3 761.6,473.9 777.8,469.8 793.5,464.8 808.6,459.1 823.2,452.7 837.0,445.6 850.2,437.9 862.5,429.6 873.9,420.8 884.5,411.4 894.1,401.7 902.8,391.5 910.4,381.0 917.1,370.3 922.7,359.3 927.3,348.1 930.9,336.8 933.4,325.5 934.9,314.1 935.4,302.7 934.9,291.4 933.4,280.2 931.0,269.2 927.6,258.3 923.3,247.7 918.2,237.4 912.2,227.3 905.5,217.6 898.0,208.2 889.7,199.3 880.8,190.7 871.2,182.6 861.0,174.9 850.2,167.7 838.9,161.0 827.2,154.8 815.0,149.1 802.4,144.0 789.4,139.4 776.1,135.4 762.6,131.9 748.8,129.0 734.9,126.6 720.7,124.9 706.5,123.7 692.2,123.1 678.0,123.1 663.7,123.7 649.5,124.9 635.3,126.6 621.4,129.0 607.6,131.9 594.1,135.4 580.8,139.4 567.8,144.0 555.2,149.1 543.0,154.8 531.3,161.0 520.0,167.7 509.2,174.9 499.0,182.6 489.4,190.7 480.5,199.3 472.2,208.2 464.7,217.6 458.0,227.3 452.0,237.4 446.9,247.7 442.6,258.3 439.2,269.2 436.8,280.2 435.3,291.4 434.8,302.7 435.3,314.1 436.8,325.5 439.3,336.8 442.9,348.1 447.5,359.3 453.1,370.3 459.8,381.0 467.4,391.5 476.1,401.7 485.7,411.4 496.3,420.8 507.7,429.6 520.0,437.9 533.2,445.6 547.0,452.7 561.6,459.1 576.7,464.8 592.4,469.8 608.6,473.9 625.2,477.3 642.1,479.9 659.2,481.6 676.5,482.4ZM693.7,493.0 710.8,492.1 727.8,490.4 744.6,487.9 761.0,484.5 777.1,480.4 792.7,475.4 807.8,469.7 822.2,463.3 836.0,456.3 849.0,448.6 861.2,440.3 872.6,431.5 883.1,422.1 892.7,412.4 901.3,402.3 908.9,391.8 915.5,381.0 921.1,370.0 925.7,358.9 929.2,347.6 931.8,336.3 933.3,324.9 933.8,313.5 933.3,302.2 931.8,291.0 929.4,280.0 926.1,269.2 921.8,258.6 916.8,248.2 910.8,238.2 904.1,228.5 896.6,219.1 888.5,210.1 879.6,201.6 870.1,193.4 859.9,185.8 849.2,178.6 838.0,171.9 826.3,165.7 814.2,160.0 801.7,154.9 788.8,150.3 775.6,146.2 762.1,142.7 748.4,139.8 734.6,137.5 720.5,135.7 706.4,134.6 692.2,134.0 678.0,134.0 663.8,134.6 649.7,135.7 635.6,137.5 621.8,139.8 608.1,142.7 594.6,146.2 581.4,150.3 568.5,154.9 556.0,160.0 543.9,165.7 532.2,171.9 521.0,178.6 510.3,185.8 500.1,193.4 490.6,201.6 481.7,210.1 473.6,219.1 466.1,228.5 459.4,238.2 453.4,248.2 448.4,258.6 444.1,269.2 440.8,280.0 438.4,291.0 436.9,302.2 436.4,313.5 436.9,324.9 438.4,336.3 441.0,347.6 444.5,358.9 449.1,370.0 454.7,381.0 461.3,391.8 468.9,402.3 477.5,412.4 487.1,422.1 497.6,431.5 509.0,440.3 521.2,448.6 534.2,456.3 548.0,463.3 562.4,469.7 577.5,475.4 593.1,480.4 609.2,484.5 625.6,487.9 642.4,490.4 659.4,492.1 676.5,493.0ZM693.6,503.4 710.6,502.6 727.5,500.9 744.1,498.3 760.5,495.0 776.5,490.8 792.0,485.9 806.9,480.2 821.3,473.8 835.0,466.8 847.9,459.1 860.0,450.8 871.4,442.0 881.8,432.7 891.3,423.0 899.8,412.8 907.4,402.4 914.0,391.6 919.6,380.7 924.1,369.5 927.7,358.3 930.2,346.9 931.7,335.5 932.2,324.2 931.7,312.9 930.3,301.7 927.9,290.7 924.6,279.9 920.4,269.3 915.3,258.9 909.5,248.9 902.8,239.2 895.4,229.8 887.2,220.9 878.4,212.3 868.9,204.2 858.9,196.5 848.3,189.3 837.1,182.6 825.5,176.4 813.4,170.7 801.0,165.6 788.2,161.0 775.1,156.9 761.7,153.5 748.1,150.5 734.3,148.2 720.3,146.4 706.3,145.3 692.2,144.7 678.0,144.7 663.9,145.3 649.9,146.4 635.9,148.2 622.1,150.5 608.5,153.5 595.1,156.9 582.0,161.0 569.2,165.6 556.8,170.7 544.7,176.4 533.1,182.6 521.9,189.3 511.3,196.5 501.3,204.2 491.8,212.3 483.0,220.9 474.8,229.8 467.4,239.2 460.7,248.9 454.9,258.9 449.8,269.3 445.6,279.9 442.3,290.7 439.9,301.7 438.5,312.9 438.0,324.2 438.5,335.5 440.0,346.9 442.5,358.3 446.1,369.5 450.6,380.7 456.2,391.6 462.8,402.4 470.4,412.8 478.9,423.0 488.4,432.7 498.8,442.0 510.2,450.8 522.3,459.1 535.2,466.8 548.9,473.8 563.3,480.2 578.2,485.9 593.7,490.8 609.7,495.0 626.1,498.3 642.7,500.9 659.6,502.6 676.6,503.4ZM693.6,513.7 710.4,512.8 727.2,511.1 743.7,508.6 760.0,505.3 775.8,501.1 791.2,496.2 806.1,490.5 820.3,484.1 833.9,477.1 846.8,469.4 858.9,461.2 870.1,452.4 880.5,443.1 889.9,433.4 898.4,423.3 905.9,412.8 912.5,402.1 918.0,391.1 922.6,380.0 926.1,368.8 928.6,357.4 930.1,346.1 930.6,334.7 930.1,323.5 928.7,312.3 926.4,301.3 923.1,290.4 918.9,279.9 913.9,269.5 908.1,259.5 901.5,249.8 894.1,240.4 886.0,231.5 877.2,222.9 867.8,214.8 857.9,207.1 847.3,199.9 836.2,193.2 824.7,187.0 812.7,181.3 800.3,176.2 787.6,171.6 774.6,167.5 761.2,164.1 747.7,161.1 734.0,158.8 720.1,157.0 706.2,155.9 692.1,155.3 678.1,155.3 664.0,155.9 650.1,157.0 636.2,158.8 622.5,161.1 609.0,164.1 595.6,167.5 582.6,171.6 569.9,176.2 557.5,181.3 545.5,187.0 534.0,193.2 522.9,199.9 512.3,207.1 502.4,214.8 493.0,222.9 484.2,231.5 476.1,240.4 468.7,249.8 462.1,259.5 456.3,269.5 451.3,279.9 447.1,290.4 443.8,301.3 441.5,312.3 440.1,323.5 439.6,334.7 440.1,346.1 441.6,357.4 444.1,368.8 447.6,380.0 452.2,391.1 457.7,402.1 464.3,412.8 471.8,423.3 480.3,433.4 489.7,443.1 500.1,452.4 511.3,461.2 523.4,469.4 536.3,477.1 549.9,484.1 564.1,490.5 579.0,496.2 594.4,501.1 610.2,505.3 626.5,508.6 643.0,511.1 659.8,512.8 676.6,513.7ZM693.5,523.8 710.3,523.0 726.9,521.3 743.3,518.8 759.5,515.4 775.2,511.3 790.5,506.4 805.3,500.7 819.4,494.3 832.9,487.3 845.7,479.6 857.7,471.4 868.9,462.6 879.2,453.4 888.6,443.7 897.0,433.6 904.5,423.1 911.0,412.4 916.5,401.5 921.0,390.4 924.5,379.1 927.0,367.8 928.5,356.5 929.1,345.1 928.6,333.9 927.2,322.7 924.9,311.7 921.6,300.9 917.5,290.3 912.5,280.0 906.7,269.9 900.2,260.2 892.8,250.9 884.8,241.9 876.1,233.4 866.8,225.3 856.8,217.6 846.3,210.4 835.3,203.7 823.9,197.5 812.0,191.8 799.7,186.7 787.0,182.1 774.0,178.0 760.8,174.5 747.4,171.6 733.7,169.3 719.9,167.5 706.0,166.3 692.1,165.8 678.1,165.8 664.2,166.3 650.3,167.5 636.5,169.3 622.8,171.6 609.4,174.5 596.2,178.0 583.2,182.1 570.5,186.7 558.2,191.8 546.3,197.5 534.9,203.7 523.9,210.4 513.4,217.6 503.4,225.3 494.1,233.4 485.4,241.9 477.4,250.9 470.0,260.2 463.5,269.9 457.7,280.0 452.7,290.3 448.6,300.9 445.3,311.7 443.0,322.7 441.6,333.9 441.1,345.1 441.7,356.5 443.2,367.8 445.7,379.1 449.2,390.4 453.7,401.5 459.2,412.4 465.7,423.1 473.2,433.6 481.6,443.7 491.0,453.4 501.3,462.6 512.5,471.4 524.5,479.6 537.3,487.3 550.8,494.3 564.9,500.7 579.7,506.4 595.0,511.3 610.7,515.4 626.9,518.8 643.3,521.3 659.9,523.0 676.7,523.8ZM693.4,533.8 710.1,533.0 726.6,531.3 742.9,528.8 759.0,525.4 774.6,521.3 789.8,516.4 804.4,510.7 818.5,504.4 831.9,497.4 844.6,489.7 856.5,481.5 867.6,472.7 877.9,463.5 887.2,453.8 895.6,443.7 903.1,433.3 909.5,422.6 915.0,411.7 919.5,400.6 923.0,389.4 925.5,378.1 927.0,366.7 927.5,355.4 927.1,344.2 925.7,333.0 923.4,322.0 920.2,311.2 916.1,300.6 911.1,290.3 905.4,280.3 898.9,270.6 891.6,261.2 883.6,252.3 875.0,243.7 865.7,235.6 855.8,227.9 845.4,220.7 834.5,214.0 823.1,207.8 811.2,202.2 799.0,197.0 786.4,192.4 773.5,188.4 760.4,184.9 747.0,182.0 733.4,179.6 719.7,177.9 705.9,176.7 692.0,176.1 678.2,176.1 664.3,176.7 650.5,177.9 636.8,179.6 623.2,182.0 609.8,184.9 596.7,188.4 583.8,192.4 571.2,197.0 559.0,202.2 547.1,207.8 535.7,214.0 524.8,220.7 514.4,227.9 504.5,235.6 495.2,243.7 486.6,252.3 478.6,261.2 471.3,270.6 464.8,280.3 459.1,290.3 454.1,300.6 450.0,311.2 446.8,322.0 444.5,333.0 443.1,344.2 442.7,355.4 443.2,366.7 444.7,378.1 447.2,389.4 450.7,400.6 455.2,411.7 460.7,422.6 467.1,433.3 474.6,443.7 483.0,453.8 492.3,463.5 502.6,472.7 513.7,481.5 525.6,489.7 538.3,497.4 551.7,504.4 565.8,510.7 580.4,516.4 595.6,521.3 611.2,525.4 627.3,528.8 643.6,531.3 660.1,533.0 676.8,533.8ZM693.4,543.7 709.9,542.8 726.3,541.1 742.5,538.6 758.5,535.3 774.0,531.2 789.1,526.3 803.6,520.6 817.6,514.3 830.9,507.3 843.6,499.7 855.4,491.5 866.4,482.7 876.6,473.5 885.9,463.8 894.2,453.8 901.7,443.4 908.1,432.7 913.6,421.8 918.0,410.7 921.5,399.5 924.0,388.2 925.5,376.9 926.0,365.6 925.6,354.3 924.2,343.2 921.9,332.2 918.7,321.4 914.7,310.8 909.8,300.5 904.1,290.5 897.6,280.8 890.4,271.5 882.4,262.5 873.9,254.0 864.6,245.8 854.8,238.2 844.5,231.0 833.6,224.3 822.3,218.1 810.5,212.4 798.3,207.3 785.8,202.7 773.0,198.6 759.9,195.1 746.6,192.2 733.2,189.9 719.5,188.1 705.8,186.9 692.0,186.4 678.2,186.4 664.4,186.9 650.7,188.1 637.0,189.9 623.6,192.2 610.3,195.1 597.2,198.6 584.4,202.7 571.9,207.3 559.7,212.4 547.9,218.1 536.6,224.3 525.7,231.0 515.4,238.2 505.6,245.8 496.3,254.0 487.8,262.5 479.8,271.5 472.6,280.8 466.1,290.5 460.4,300.5 455.5,310.8 451.5,321.4 448.3,332.2 446.0,343.2 444.6,354.3 444.2,365.6 444.7,376.9 446.2,388.2 448.7,399.5 452.2,410.7 456.6,421.8 462.1,432.7 468.5,443.4 476.0,453.8 484.3,463.8 493.6,473.5 503.8,482.7 514.8,491.5 526.6,499.7 539.3,507.3 552.6,514.3 566.6,520.6 581.1,526.3 596.2,531.2 611.7,535.3 627.7,538.6 643.9,541.1 660.3,542.8 676.8,543.7ZM693.3,553.4 709.8,552.6 726.1,550.9 742.2,548.4 758.0,545.0 773.4,540.9 788.4,536.0 802.9,530.4 816.7,524.1 830.0,517.1 842.5,509.5 854.3,501.3 865.2,492.6 875.4,483.4 884.6,473.7 892.9,463.7 900.3,453.3 906.7,442.6 912.1,431.7 916.5,420.7 920.0,409.5 922.5,398.2 924.0,386.9 924.5,375.6 924.1,364.4 922.7,353.2 920.5,342.3 917.3,331.5 913.3,320.9 908.4,310.6 902.8,300.6 896.3,290.9 889.2,281.6 881.3,272.6 872.8,264.1 863.6,256.0 853.8,248.3 843.6,241.1 832.8,234.4 821.5,228.2 809.8,222.5 797.7,217.4 785.3,212.8 772.5,208.7 759.5,205.3 746.3,202.3 732.9,200.0 719.3,198.2 705.7,197.1 692.0,196.5 678.2,196.5 664.5,197.1 650.9,198.2 637.3,200.0 623.9,202.3 610.7,205.3 597.7,208.7 584.9,212.8 572.5,217.4 560.4,222.5 548.7,228.2 537.4,234.4 526.6,241.1 516.4,248.3 506.6,256.0 497.4,264.1 488.9,272.6 481.0,281.6 473.9,290.9 467.4,300.6 461.8,310.6 456.9,320.9 452.9,331.5 449.7,342.3 447.5,353.2 446.1,364.4 445.7,375.6 446.2,386.9 447.7,398.2 450.2,409.5 453.7,420.7 458.1,431.7 463.5,442.6 469.9,453.3 477.3,463.7 485.6,473.7 494.8,483.4 505.0,492.6 515.9,501.3 527.7,509.5 540.2,517.1 553.5,524.1 567.3,530.4 581.8,536.0 596.8,540.9 612.2,545.0 628.0,548.4 644.1,550.9 660.4,552.6 676.9,553.4ZM693.3,563.0 709.6,562.2 725.8,560.5 741.8,558.0 757.5,554.7 772.8,550.5 787.7,545.7 802.1,540.1 815.9,533.8 829.0,526.8 841.5,519.2 853.2,511.0 864.1,502.3 874.1,493.1 883.3,483.5 891.6,473.4 898.9,463.1 905.3,452.4 910.7,441.6 915.1,430.5 918.5,419.3 921.0,408.1 922.5,396.8 923.0,385.5 922.6,374.3 921.3,363.2 919.1,352.2 915.9,341.4 911.9,330.9 907.1,320.6 901.5,310.6 895.1,300.9 888.0,291.5 880.1,282.6 871.7,274.1 862.6,266.0 852.9,258.3 842.6,251.1 831.9,244.4 820.7,238.2 809.1,232.5 797.1,227.4 784.7,222.8 772.0,218.7 759.1,215.3 746.0,212.3 732.6,210.0 719.1,208.3 705.6,207.1 691.9,206.5 678.3,206.5 664.6,207.1 651.1,208.3 637.6,210.0 624.2,212.3 611.1,215.3 598.2,218.7 585.5,222.8 573.1,227.4 561.1,232.5 549.5,238.2 538.3,244.4 527.6,251.1 517.3,258.3 507.6,266.0 498.5,274.1 490.1,282.6 482.2,291.5 475.1,300.9 468.7,310.6 463.1,320.6 458.3,330.9 454.3,341.4 451.1,352.2 448.9,363.2 447.6,374.3 447.2,385.5 447.7,396.8 449.2,408.1 451.7,419.3 455.1,430.5 459.5,441.6 464.9,452.4 471.3,463.1 478.6,473.4 486.9,483.5 496.1,493.1 506.1,502.3 517.0,511.0 528.7,519.2 541.2,526.8 554.3,533.8 568.1,540.1 582.5,545.7 597.4,550.5 612.7,554.7 628.4,558.0 644.4,560.5 660.6,562.2 676.9,563.0ZM693.2,572.5 709.4,571.6 725.5,569.9 741.4,567.4 757.0,564.1 772.2,560.0 787.0,555.2 801.3,549.6 815.0,543.3 828.1,536.3 840.5,528.7 852.1,520.6 862.9,511.9 872.9,502.7 882.0,493.1 890.2,483.1 897.5,472.7 903.9,462.1 909.2,451.3 913.6,440.2 917.1,429.1 919.6,417.8 921.0,406.5 921.6,395.3 921.2,384.1 919.9,373.0 917.6,362.0 914.5,351.2 910.6,340.7 905.8,330.4 900.2,320.4 893.9,310.7 886.8,301.4 879.0,292.5 870.6,283.9 861.5,275.8 851.9,268.2 841.7,261.0 831.1,254.3 819.9,248.1 808.4,242.4 796.4,237.3 784.1,232.7 771.5,228.6 758.7,225.2 745.6,222.2 732.4,219.9 719.0,218.1 705.5,217.0 691.9,216.4 678.3,216.4 664.7,217.0 651.2,218.1 637.8,219.9 624.6,222.2 611.5,225.2 598.7,228.6 586.1,232.7 573.8,237.3 561.8,242.4 550.3,248.1 539.1,254.3 528.5,261.0 518.3,268.2 508.7,275.8 499.6,283.9 491.2,292.5 483.4,301.4 476.3,310.7 470.0,320.4 464.4,330.4 459.6,340.7 455.7,351.2 452.6,362.0 450.3,373.0 449.0,384.1 448.6,395.3 449.2,406.5 450.6,417.8 453.1,429.1 456.6,440.2 461.0,451.3 466.3,462.1 472.7,472.7 480.0,483.1 488.2,493.1 497.3,502.7 507.3,511.9 518.1,520.6 529.7,528.7 542.1,536.3 555.2,543.3 568.9,549.6 583.2,555.2 598.0,560.0 613.2,564.1 628.8,567.4 644.7,569.9 660.8,571.6 677.0,572.5ZM693.2,581.8 709.3,581.0 725.3,579.3 741.0,576.8 756.5,573.5 771.7,569.4 786.3,564.6 800.5,559.0 814.2,552.7 827.1,545.8 839.4,538.2 851.0,530.0 861.8,521.4 871.7,512.2 880.8,502.6 888.9,492.6 896.2,482.3 902.5,471.7 907.8,460.8 912.2,449.8 915.7,438.7 918.1,427.4 919.6,416.2 920.2,404.9 919.8,393.7 918.5,382.7 916.3,371.7 913.2,361.0 909.2,350.4 904.5,340.1 898.9,330.1 892.6,320.5 885.6,311.2 877.9,302.2 869.5,293.7 860.5,285.6 851.0,277.9 840.9,270.8 830.2,264.1 819.2,257.9 807.7,252.2 795.8,247.1 783.6,242.5 771.1,238.4 758.3,234.9 745.3,232.0 732.1,229.7 718.8,227.9 705.3,226.8 691.9,226.2 678.3,226.2 664.9,226.8 651.4,227.9 638.1,229.7 624.9,232.0 611.9,234.9 599.1,238.4 586.6,242.5 574.4,247.1 562.5,252.2 551.0,257.9 540.0,264.1 529.3,270.8 519.2,277.9 509.7,285.6 500.7,293.7 492.3,302.2 484.6,311.2 477.6,320.5 471.3,330.1 465.7,340.1 461.0,350.4 457.0,361.0 453.9,371.7 451.7,382.7 450.4,393.7 450.0,404.9 450.6,416.2 452.1,427.4 454.5,438.7 458.0,449.8 462.4,460.8 467.7,471.7 474.0,482.3 481.3,492.6 489.4,502.6 498.5,512.2 508.4,521.4 519.2,530.0 530.8,538.2 543.1,545.8 556.0,552.7 569.7,559.0 583.9,564.6 598.5,569.4 613.7,573.5 629.2,576.8 644.9,579.3 660.9,581.0 677.0,581.8ZM693.1,591.0 709.1,590.2 725.0,588.5 740.7,586.0 756.1,582.7 771.1,578.7 785.7,573.8 799.8,568.3 813.3,562.0 826.2,555.1 838.5,547.5 849.9,539.4 860.6,530.7 870.5,521.6 879.5,512.0 887.6,502.0 894.9,491.7 901.1,481.1 906.5,470.3 910.8,459.3 914.2,448.2 916.7,437.0 918.2,425.7 918.7,414.5 918.4,403.3 917.1,392.2 914.9,381.3 911.8,370.5 907.9,360.0 903.2,349.8 897.7,339.8 891.4,330.1 884.5,320.8 876.8,311.9 868.5,303.4 859.5,295.3 850.0,287.6 840.0,280.4 829.4,273.7 818.4,267.6 807.0,261.9 795.2,256.7 783.0,252.1 770.6,248.1 757.9,244.6 744.9,241.7 731.8,239.4 718.6,237.6 705.2,236.4 691.8,235.9 678.4,235.9 665.0,236.4 651.6,237.6 638.4,239.4 625.3,241.7 612.3,244.6 599.6,248.1 587.2,252.1 575.0,256.7 563.2,261.9 551.8,267.6 540.8,273.7 530.2,280.4 520.2,287.6 510.7,295.3 501.7,303.4 493.4,311.9 485.7,320.8 478.8,330.1 472.5,339.8 467.0,349.8 462.3,360.0 458.4,370.5 455.3,381.3 453.1,392.2 451.8,403.3 451.5,414.5 452.0,425.7 453.5,437.0 456.0,448.2 459.4,459.3 463.7,470.3 469.1,481.1 475.3,491.7 482.6,502.0 490.7,512.0 499.7,521.6 509.6,530.7 520.3,539.4 531.7,547.5 544.0,555.1 556.9,562.0 570.4,568.3 584.5,573.8 599.1,578.7 614.1,582.7 629.5,586.0 645.2,588.5 661.1,590.2 677.1,591.0ZM693.1,600.1 709.0,599.3 724.7,597.6 740.3,595.1 755.6,591.9 770.5,587.8 785.0,583.0 799.0,577.4 812.5,571.1 825.3,564.2 837.5,556.7 848.9,548.6 859.5,539.9 869.3,530.8 878.3,521.3 886.4,511.3 893.5,501.0 899.8,490.5 905.1,479.7 909.4,468.7 912.8,457.6 915.3,446.4 916.8,435.1 917.3,423.9 917.0,412.7 915.7,401.7 913.5,390.8 910.5,380.0 906.6,369.5 901.9,359.3 896.5,349.3 890.2,339.6 883.3,330.3 875.7,321.4 867.4,312.9 858.5,304.8 849.1,297.2 839.1,290.0 828.6,283.3 817.7,277.1 806.3,271.4 794.6,266.3 782.5,261.7 770.1,257.7 757.5,254.2 744.6,251.3 731.6,248.9 718.4,247.2 705.1,246.0 691.8,245.4 678.4,245.4 665.1,246.0 651.8,247.2 638.6,248.9 625.6,251.3 612.7,254.2 600.1,257.7 587.7,261.7 575.6,266.3 563.9,271.4 552.5,277.1 541.6,283.3 531.1,290.0 521.1,297.2 511.7,304.8 502.8,312.9 494.5,321.4 486.9,330.3 480.0,339.6 473.7,349.3 468.3,359.3 463.6,369.5 459.7,380.0 456.7,390.8 454.5,401.7 453.2,412.7 452.9,423.9 453.4,435.1 454.9,446.4 457.4,457.6 460.8,468.7 465.1,479.7 470.4,490.5 476.7,501.0 483.8,511.3 491.9,521.3 500.9,530.8 510.7,539.9 521.3,548.6 532.7,556.7 544.9,564.2 557.7,571.1 571.2,577.4 585.2,583.0 599.7,587.8 614.6,591.9 629.9,595.1 645.5,597.6 661.2,599.3 677.1,600.1ZM693.0,609.1 708.8,608.3 724.5,606.6 739.9,604.1 755.1,600.9 770.0,596.8 784.4,592.0 798.3,586.4 811.7,580.2 824.4,573.3 836.5,565.8 847.8,557.7 858.4,549.1 868.2,540.0 877.1,530.4 885.1,520.5 892.3,510.2 898.5,499.7 903.7,488.9 908.1,477.9 911.5,466.8 913.9,455.6 915.4,444.4 915.9,433.2 915.6,422.1 914.3,411.0 912.2,400.1 909.2,389.4 905.3,378.9 900.7,368.6 895.2,358.7 889.1,349.0 882.2,339.8 874.6,330.8 866.4,322.3 857.6,314.2 848.2,306.6 838.2,299.4 827.8,292.8 816.9,286.6 805.6,280.9 794.0,275.8 782.0,271.2 769.7,267.1 757.1,263.7 744.3,260.8 731.3,258.4 718.2,256.7 705.0,255.5 691.7,254.9 678.5,254.9 665.2,255.5 652.0,256.7 638.9,258.4 625.9,260.8 613.1,263.7 600.5,267.1 588.2,271.2 576.2,275.8 564.6,280.9 553.3,286.6 542.4,292.8 532.0,299.4 522.0,306.6 512.6,314.2 503.8,322.3 495.6,330.8 488.0,339.8 481.1,349.0 475.0,358.7 469.5,368.6 464.9,378.9 461.0,389.4 458.0,400.1 455.9,411.0 454.6,422.1 454.3,433.2 454.8,444.4 456.3,455.6 458.7,466.8 462.1,477.9 466.5,488.9 471.7,499.7 477.9,510.2 485.1,520.5 493.1,530.4 502.0,540.0 511.8,549.1 522.4,557.7 533.7,565.8 545.8,573.3 558.5,580.2 571.9,586.4 585.8,592.0 600.2,596.8 615.1,600.9 630.3,604.1 645.7,606.6 661.4,608.3 677.2,609.1ZM693.0,618.0 708.7,617.1 724.2,615.5 739.6,613.0 754.7,609.7 769.4,605.7 783.8,600.9 797.6,595.4 810.9,589.1 823.5,582.2 835.5,574.7 846.8,566.7 857.3,558.1 867.0,549.0 875.9,539.4 883.9,529.5 891.0,519.3 897.2,508.8 902.4,498.0 906.7,487.1 910.1,476.0 912.5,464.8 914.0,453.6 914.6,442.4 914.2,431.3 913.0,420.3 910.8,409.4 907.9,398.7 904.1,388.2 899.4,377.9 894.0,368.0 887.9,358.4 881.1,349.1 873.5,340.2 865.4,331.7 856.6,323.6 847.3,315.9 837.4,308.8 827.0,302.1 816.2,295.9 805.0,290.3 793.4,285.1 781.4,280.5 769.2,276.5 756.7,273.0 744.0,270.1 731.1,267.8 718.0,266.0 704.9,264.9 691.7,264.3 678.5,264.3 665.3,264.9 652.2,266.0 639.1,267.8 626.2,270.1 613.5,273.0 601.0,276.5 588.8,280.5 576.8,285.1 565.2,290.3 554.0,295.9 543.2,302.1 532.8,308.8 522.9,315.9 513.6,323.6 504.8,331.7 496.7,340.2 489.1,349.1 482.3,358.4 476.2,368.0 470.8,377.9 466.1,388.2 462.3,398.7 459.4,409.4 457.2,420.3 456.0,431.3 455.6,442.4 456.2,453.6 457.7,464.8 460.1,476.0 463.5,487.1 467.8,498.0 473.0,508.8 479.2,519.3 486.3,529.5 494.3,539.4 503.2,549.0 512.9,558.1 523.4,566.7 534.7,574.7 546.7,582.2 559.3,589.1 572.6,595.4 586.4,600.9 600.8,605.7 615.5,609.7 630.6,613.0 646.0,615.5 661.5,617.1 677.2,618.0ZM692.9,626.7 708.5,625.9 724.0,624.2 739.2,621.8 754.2,618.5 768.9,614.5 783.1,609.7 796.9,604.2 810.1,597.9 822.7,591.1 834.6,583.6 845.8,575.5 856.3,567.0 865.9,557.9 874.7,548.4 882.7,538.5 889.7,528.3 895.9,517.7 901.1,507.0 905.4,496.1 908.7,485.0 911.2,473.9 912.6,462.7 913.2,451.5 912.9,440.4 911.6,429.4 909.5,418.5 906.6,407.8 902.8,397.3 898.2,387.1 892.9,377.2 886.8,367.6 880.0,358.3 872.5,349.4 864.4,340.9 855.7,332.8 846.4,325.2 836.6,318.0 826.3,311.3 815.5,305.2 804.3,299.5 792.8,294.4 780.9,289.8 768.7,285.8 756.3,282.3 743.7,279.4 730.8,277.0 717.9,275.3 704.8,274.1 691.7,273.5 678.5,273.5 665.4,274.1 652.3,275.3 639.4,277.0 626.5,279.4 613.9,282.3 601.5,285.8 589.3,289.8 577.4,294.4 565.9,299.5 554.7,305.2 543.9,311.3 533.6,318.0 523.8,325.2 514.5,332.8 505.8,340.9 497.7,349.4 490.2,358.3 483.4,367.6 477.3,377.2 472.0,387.1 467.4,397.3 463.6,407.8 460.7,418.5 458.6,429.4 457.3,440.4 457.0,451.5 457.6,462.7 459.0,473.9 461.5,485.0 464.8,496.1 469.1,507.0 474.3,517.7 480.5,528.3 487.5,538.5 495.5,548.4 504.3,557.9 513.9,567.0 524.4,575.5 535.6,583.6 547.5,591.1 560.1,597.9 573.3,604.2 587.1,609.7 601.3,614.5 616.0,618.5 631.0,621.8 646.2,624.2 661.7,625.9 677.3,626.7ZM692.9,635.4 708.4,634.5 723.7,632.9 738.9,630.4 753.8,627.2 768.4,623.1 782.5,618.4 796.2,612.9 809.3,606.7 821.8,599.8 833.7,592.3 844.8,584.3 855.2,575.7 864.8,566.7 873.5,557.2 881.5,547.3 888.5,537.1 894.6,526.6 899.8,515.9 904.1,505.0 907.4,494.0 909.8,482.8 911.3,471.7 911.9,460.5 911.5,449.4 910.3,438.4 908.2,427.6 905.3,416.9 901.6,406.4 897.0,396.2 891.7,386.3 885.6,376.6 878.9,367.4 871.4,358.5 863.4,350.0 854.7,341.9 845.5,334.3 835.7,327.2 825.5,320.5 814.8,314.3 803.7,308.7 792.2,303.5 780.4,299.0 768.3,294.9 755.9,291.5 743.3,288.5 730.6,286.2 717.7,284.5 704.7,283.3 691.6,282.7 678.6,282.7 665.5,283.3 652.5,284.5 639.6,286.2 626.9,288.5 614.3,291.5 601.9,294.9 589.8,299.0 578.0,303.5 566.5,308.7 555.4,314.3 544.7,320.5 534.5,327.2 524.7,334.3 515.5,341.9 506.8,350.0 498.8,358.5 491.3,367.4 484.6,376.6 478.5,386.3 473.2,396.2 468.6,406.4 464.9,416.9 462.0,427.6 459.9,438.4 458.7,449.4 458.3,460.5 458.9,471.7 460.4,482.8 462.8,494.0 466.1,505.0 470.4,515.9 475.6,526.6 481.7,537.1 488.7,547.3 496.7,557.2 505.4,566.7 515.0,575.7 525.4,584.3 536.5,592.3 548.4,599.8 560.9,606.7 574.0,612.9 587.7,618.4 601.8,623.1 616.4,627.2 631.3,630.4 646.5,632.9 661.8,634.5 677.3,635.4ZM692.8,643.9 708.2,643.1 723.5,641.4 738.6,639.0 753.4,635.7 767.8,631.7 781.9,626.9 795.5,621.4 808.5,615.3 821.0,608.4 832.7,601.0 843.8,593.0 854.1,584.4 863.7,575.4 872.4,565.9 880.3,556.1 887.2,545.9 893.3,535.4 898.5,524.7 902.8,513.8 906.1,502.8 908.5,491.7 910.0,480.5 910.6,469.4 910.2,458.3 909.0,447.3 907.0,436.5 904.1,425.8 900.3,415.4 895.8,405.2 890.5,395.2 884.5,385.6 877.8,376.4 870.4,367.5 862.4,359.0 853.8,351.0 844.6,343.4 834.9,336.2 824.7,329.5 814.1,323.4 803.0,317.7 791.6,312.6 779.9,308.0 767.8,304.0 755.5,300.5 743.0,297.6 730.3,295.3 717.5,293.5 704.6,292.4 691.6,291.8 678.6,291.8 665.6,292.4 652.7,293.5 639.9,295.3 627.2,297.6 614.7,300.5 602.4,304.0 590.3,308.0 578.6,312.6 567.2,317.7 556.1,323.4 545.5,329.5 535.3,336.2 525.6,343.4 516.4,351.0 507.8,359.0 499.8,367.5 492.4,376.4 485.7,385.6 479.7,395.2 474.4,405.2 469.9,415.4 466.1,425.8 463.2,436.5 461.2,447.3 460.0,458.3 459.6,469.4 460.2,480.5 461.7,491.7 464.1,502.8 467.4,513.8 471.7,524.7 476.9,535.4 483.0,545.9 489.9,556.1 497.8,565.9 506.5,575.4 516.1,584.4 526.4,593.0 537.5,601.0 549.2,608.4 561.7,615.3 574.7,621.4 588.3,626.9 602.4,631.7 616.8,635.7 631.6,639.0 646.7,641.4 662.0,643.1 677.4,643.9ZM692.8,652.3 708.1,651.5 723.2,649.8 738.2,647.4 752.9,644.2 767.3,640.2 781.3,635.4 794.8,629.9 807.8,623.8 820.1,616.9 831.8,609.5 842.8,601.5 853.1,593.0 862.6,584.0 871.3,574.5 879.1,564.7 886.0,554.5 892.1,544.1 897.2,533.4 901.5,522.5 904.8,511.5 907.2,500.4 908.7,489.3 909.2,478.2 908.9,467.1 907.7,456.2 905.7,445.3 902.8,434.7 899.1,424.2 894.6,414.0 889.4,404.1 883.4,394.5 876.7,385.3 869.4,376.4 861.4,367.9 852.9,359.9 843.7,352.3 834.1,345.1 824.0,338.5 813.4,332.3 802.4,326.7 791.1,321.6 779.4,317.0 767.4,313.0 755.2,309.5 742.7,306.6 730.1,304.3 717.3,302.5 704.5,301.3 691.6,300.7 678.6,300.7 665.7,301.3 652.9,302.5 640.1,304.3 627.5,306.6 615.0,309.5 602.8,313.0 590.8,317.0 579.1,321.6 567.8,326.7 556.8,332.3 546.2,338.5 536.1,345.1 526.5,352.3 517.3,359.9 508.8,367.9 500.8,376.4 493.5,385.3 486.8,394.5 480.8,404.1 475.6,414.0 471.1,424.2 467.4,434.7 464.5,445.3 462.5,456.2 461.3,467.1 461.0,478.2 461.5,489.3 463.0,500.4 465.4,511.5 468.7,522.5 473.0,533.4 478.1,544.1 484.2,554.5 491.1,564.7 498.9,574.5 507.6,584.0 517.1,593.0 527.4,601.5 538.4,609.5 550.1,616.9 562.4,623.8 575.4,629.9 588.9,635.4 602.9,640.2 617.3,644.2 632.0,647.4 647.0,649.8 662.1,651.5 677.4,652.3ZM692.7,660.6 707.9,659.8 723.0,658.2 737.9,655.7 752.5,652.5 766.8,648.5 780.7,643.8 794.1,638.3 807.0,632.1 819.3,625.3 830.9,617.9 841.9,609.9 852.1,601.4 861.5,592.4 870.1,583.0 877.9,573.2 884.8,563.1 890.8,552.6 896.0,542.0 900.2,531.1 903.5,520.1 905.9,509.1 907.4,498.0 908.0,486.9 907.6,475.8 906.5,464.9 904.4,454.1 901.6,443.4 897.9,433.0 893.4,422.8 888.2,412.9 882.3,403.3 875.7,394.1 868.4,385.2 860.5,376.8 851.9,368.7 842.9,361.1 833.3,354.0 823.2,347.3 812.7,341.2 801.8,335.5 790.5,330.4 778.9,325.9 767.0,321.8 754.8,318.4 742.4,315.5 729.9,313.1 717.2,311.4 704.4,310.2 691.5,309.6 678.7,309.6 665.8,310.2 653.0,311.4 640.3,313.1 627.8,315.5 615.4,318.4 603.2,321.8 591.3,325.9 579.7,330.4 568.4,335.5 557.5,341.2 547.0,347.3 536.9,354.0 527.3,361.1 518.3,368.7 509.7,376.8 501.8,385.2 494.5,394.1 487.9,403.3 482.0,412.9 476.8,422.8 472.3,433.0 468.6,443.4 465.8,454.1 463.7,464.9 462.6,475.8 462.2,486.9 462.8,498.0 464.3,509.1 466.7,520.1 470.0,531.1 474.2,542.0 479.4,552.6 485.4,563.1 492.3,573.2 500.1,583.0 508.7,592.4 518.1,601.4 528.3,609.9 539.3,617.9 550.9,625.3 563.2,632.1 576.1,638.3 589.5,643.8 603.4,648.5 617.7,652.5 632.3,655.7 647.2,658.2 662.3,659.8 677.5,660.6ZM692.7,668.8 707.8,668.0 722.8,666.4 737.6,664.0 752.1,660.7 766.3,656.7 780.1,652.0 793.4,646.6 806.2,640.4 818.5,633.6 830.0,626.2 840.9,618.3 851.1,609.8 860.5,600.8 869.0,591.4 876.8,581.6 883.6,571.5 889.6,561.1 894.7,550.4 898.9,539.6 902.2,528.7 904.6,517.6 906.1,506.5 906.7,495.4 906.4,484.4 905.2,473.5 903.2,462.7 900.4,452.1 896.7,441.6 892.3,431.5 887.1,421.6 881.2,412.0 874.6,402.8 867.4,394.0 859.5,385.5 851.0,377.5 842.0,369.9 832.5,362.7 822.5,356.1 812.0,349.9 801.2,344.3 789.9,339.2 778.4,334.6 766.5,330.6 754.4,327.1 742.1,324.2 729.6,321.9 717.0,320.2 704.3,319.0 691.5,318.4 678.7,318.4 665.9,319.0 653.2,320.2 640.6,321.9 628.1,324.2 615.8,327.1 603.7,330.6 591.8,334.6 580.3,339.2 569.0,344.3 558.2,349.9 547.7,356.1 537.7,362.7 528.2,369.9 519.2,377.5 510.7,385.5 502.8,394.0 495.6,402.8 489.0,412.0 483.1,421.6 477.9,431.5 473.5,441.6 469.8,452.1 467.0,462.7 465.0,473.5 463.8,484.4 463.5,495.4 464.1,506.5 465.6,517.6 468.0,528.7 471.3,539.6 475.5,550.4 480.6,561.1 486.6,571.5 493.4,581.6 501.2,591.4 509.7,600.8 519.1,609.8 529.3,618.3 540.2,626.2 551.7,633.6 564.0,640.4 576.8,646.6 590.1,652.0 603.9,656.7 618.1,660.7 632.6,664.0 647.4,666.4 662.4,668.0 677.5,668.8ZM692.6,677.0 707.6,676.1 722.5,674.5 737.2,672.1 751.7,668.9 765.8,664.9 779.5,660.2 792.8,654.7 805.5,648.6 817.7,641.8 829.2,634.5 840.0,626.5 850.1,618.0 859.4,609.1 867.9,599.7 875.6,589.9 882.5,579.8 888.4,569.5 893.5,558.8 897.7,548.0 901.0,537.1 903.3,526.1 904.8,515.0 905.4,503.9 905.1,492.9 904.0,482.0 902.0,471.2 899.2,460.6 895.5,450.2 891.1,440.1 886.0,430.2 880.1,420.6 873.6,411.4 866.4,402.6 858.6,394.1 850.1,386.1 841.2,378.5 831.7,371.4 821.7,364.8 811.3,358.6 800.5,353.0 789.4,347.9 777.9,343.3 766.1,339.3 754.1,335.8 741.8,332.9 729.4,330.6 716.8,328.9 704.2,327.7 691.5,327.1 678.7,327.1 666.0,327.7 653.4,328.9 640.8,330.6 628.4,332.9 616.1,335.8 604.1,339.3 592.3,343.3 580.8,347.9 569.7,353.0 558.9,358.6 548.5,364.8 538.5,371.4 529.0,378.5 520.1,386.1 511.6,394.1 503.8,402.6 496.6,411.4 490.1,420.6 484.2,430.2 479.1,440.1 474.7,450.2 471.0,460.6 468.2,471.2 466.2,482.0 465.1,492.9 464.8,503.9 465.4,515.0 466.9,526.1 469.2,537.1 472.5,548.0 476.7,558.8 481.8,569.5 487.7,579.8 494.6,589.9 502.3,599.7 510.8,609.1 520.1,618.0 530.2,626.5 541.0,634.5 552.5,641.8 564.7,648.6 577.4,654.7 590.7,660.2 604.4,664.9 618.5,668.9 633.0,672.1 647.7,674.5 662.6,676.1 677.6,677.0ZM692.6,685.0 707.5,684.2 722.3,682.5 736.9,680.1 751.3,676.9 765.3,672.9 779.0,668.2 792.1,662.8 804.8,656.7 816.9,649.9 828.3,642.6 839.1,634.7 849.1,626.2 858.4,617.3 866.8,607.9 874.5,598.2 881.3,588.1 887.2,577.7 892.3,567.1 896.5,556.3 899.7,545.4 902.1,534.4 903.6,523.4 904.2,512.3 903.9,501.3 902.7,490.4 900.8,479.7 898.0,469.1 894.4,458.7 890.0,448.5 884.9,438.7 879.1,429.1 872.6,419.9 865.4,411.1 857.6,402.7 849.3,394.7 840.3,387.1 830.9,380.0 821.0,373.3 810.7,367.2 799.9,361.6 788.8,356.5 777.4,351.9 765.7,347.9 753.7,344.4 741.5,341.5 729.2,339.2 716.7,337.5 704.1,336.3 691.4,335.7 678.8,335.7 666.1,336.3 653.5,337.5 641.0,339.2 628.7,341.5 616.5,344.4 604.5,347.9 592.8,351.9 581.4,356.5 570.3,361.6 559.5,367.2 549.2,373.3 539.3,380.0 529.9,387.1 520.9,394.7 512.6,402.7 504.8,411.1 497.6,419.9 491.1,429.1 485.3,438.7 480.2,448.5 475.8,458.7 472.2,469.1 469.4,479.7 467.5,490.4 466.3,501.3 466.0,512.3 466.6,523.4 468.1,534.4 470.5,545.4 473.7,556.3 477.9,567.1 483.0,577.7 488.9,588.1 495.7,598.2 503.4,607.9 511.8,617.3 521.1,626.2 531.1,634.7 541.9,642.6 553.3,649.9 565.4,656.7 578.1,662.8 591.2,668.2 604.9,672.9 618.9,676.9 633.3,680.1 647.9,682.5 662.7,684.2 677.6,685.0ZM694.4,367.9L692.6,685.0M713.0,367.0L707.5,684.2M731.4,365.3L722.3,682.5M749.5,362.7L736.9,680.1M767.4,359.3L751.3,676.9M784.8,355.0L765.3,672.9M801.7,350.0L779.0,668.2M817.9,344.2L792.1,662.8M833.6,337.7L804.8,656.7M848.4,330.5L816.9,649.9M862.5,322.7L828.3,642.6M875.6,314.3L839.1,634.7M887.9,305.3L849.1,626.2M899.1,295.9L858.4,617.3M909.4,286.0L866.8,607.9M918.6,275.7L874.5,598.2M926.7,265.2L881.3,588.1M933.7,254.3L887.2,577.7M939.7,243.2L892.3,567.1M944.5,232.0L896.5,556.3M948.2,220.6L899.7,545.4M950.8,209.2L902.1,534.4M952.3,197.7L903.6,523.4M952.7,186.3L904.2,512.3M952.1,175.0L903.9,501.3M950.4,163.7L902.7,490.4M947.7,152.7L900.8,479.7M944.0,141.8L898.0,469.1M939.3,131.2L894.4,458.7M933.8,120.9L890.0,448.5M927.3,110.8L884.9,438.7M920.0,101.1L879.1,429.1M911.9,91.8L872.6,419.9M903.0,82.9L865.4,411.1M893.5,74.4L857.6,402.7M883.2,66.3L849.3,394.7M872.3,58.6L840.3,387.1M860.8,51.5L830.9,380.0M848.8,44.8L821.0,373.3M836.2,38.7L810.7,367.2M823.2,33.0L799.9,361.6M809.8,27.9L788.8,356.5M796.0,23.4L777.4,351.9M781.9,19.4L765.7,347.9M767.5,15.9L753.7,344.4M752.8,13.0L741.5,341.5M738.0,10.7L729.2,339.2M723.0,9.0L716.7,337.5M707.9,7.8L704.1,336.3M692.7,7.2L691.4,335.7M677.5,7.2L678.8,335.7M662.3,7.8L666.1,336.3M647.2,9.0L653.5,337.5M632.2,10.7L641.0,339.2M617.4,13.0L628.7,341.5M602.7,15.9L616.5,344.4M588.3,19.4L604.5,347.9M574.2,23.4L592.8,351.9M560.4,27.9L581.4,356.5M547.0,33.0L570.3,361.6M534.0,38.7L559.5,367.2M521.4,44.8L549.2,373.3M509.4,51.5L539.3,380.0M497.9,58.6L529.9,387.1M487.0,66.3L520.9,394.7M476.7,74.4L512.6,402.7M467.2,82.9L504.8,411.1M458.3,91.8L497.6,419.9M450.2,101.1L491.1,429.1M442.9,110.8L485.3,438.7M436.4,120.9L480.2,448.5M430.9,131.2L475.8,458.7M426.2,141.8L472.2,469.1M422.5,152.7L469.4,479.7M419.8,163.7L467.5,490.4M418.1,175.0L466.3,501.3M417.5,186.3L466.0,512.3M417.9,197.7L466.6,523.4M419.4,209.2L468.1,534.4M422.0,220.6L470.5,545.4M425.7,232.0L473.7,556.3M430.5,243.2L477.9,567.1M436.5,254.3L483.0,577.7M443.5,265.2L488.9,588.1M451.6,275.7L495.7,598.2M460.8,286.0L503.4,607.9M471.1,295.9L511.8,617.3M482.3,305.3L521.1,626.2M494.6,314.3L531.1,634.7M507.7,322.7L541.9,642.6M521.8,330.5L553.3,649.9M536.6,337.7L565.4,656.7M552.3,344.2L578.1,662.8M568.5,350.0L591.2,668.2M585.4,355.0L604.9,672.9M602.8,359.3L618.9,676.9M620.7,362.7L633.3,680.1M638.8,365.3L647.9,682.5M657.2,367.0L662.7,684.2M675.8,367.9L677.6,685.0" fill="none" stroke="#7c7c7c" stroke-width="1" shape-rendering="crispEdges" clip-path="url(#bd)"/>
<g fill="none" stroke="#43ffa3" stroke-width="1" shape-rendering="crispEdges"><path d="M444.8,457.0C446.1,459.4 449.8,466.8 452.5,471.1C455.1,475.5 457.8,479.5 460.5,483.2C463.2,486.9 465.9,490.1 468.6,493.3C471.3,496.5 473.6,499.2 476.7,502.4C479.7,505.6 483.4,509.1 486.8,512.5C490.1,515.9 493.5,519.4 496.9,522.6C500.2,525.8 503.6,528.8 506.9,531.7C510.3,534.5 513.7,537.2 517.0,539.7C520.4,542.3 523.8,544.5 527.1,546.8C530.5,549.2 534.2,552.0 537.2,553.9C540.2,555.7 543.3,556.7 545.3,557.9C547.3,559.1 548.6,560.4 549.3,560.9"/><path d="M852.7,520.2C854.0,518.1 857.3,511.2 860.2,507.7C863.2,504.1 866.5,501.3 870.3,498.9C874.0,496.5 878.6,494.2 882.8,493.1C886.9,492.1 891.7,492.2 895.3,492.6C898.8,493.1 901.1,493.8 904.1,495.9C907.0,498.0 910.1,501.1 912.8,505.2C915.5,509.2 918.2,514.8 920.3,520.2C922.4,525.6 924.5,534.8 925.3,537.7"/></g>
</svg>
<div id="win">
<div id="tb">
<svg style="position:absolute;left:9px;top:7px" width="20" height="21" viewBox="100 29 20 21">
<rect x="100.7" y="31" width="3.4" height="14.6" rx="0.8" fill="#7cc4e0"/>
<rect x="117" y="33" width="2.4" height="16.6" rx="0.6" fill="#2d5c75"/>
<rect x="102.3" y="42" width="16.7" height="7.7" rx="1" fill="#32657f"/>
<rect x="102.8" y="29.9" width="15" height="14" rx="1" fill="#37a5cc"/>
<text x="111.1" y="41" text-anchor="middle" font-family="Liberation Sans,sans-serif" font-weight="bold" font-size="11.3" fill="#fff" stroke="#fff" stroke-width="0.3">M</text>
<text x="110.8" y="48.4" text-anchor="middle" font-family="Liberation Sans,sans-serif" font-weight="bold" font-size="4.2" fill="#e8eef2">AYA</text>
</svg>
<div id="ttl">Random Open Circles Generator</div>
<svg style="position:absolute;left:270px;top:8px" width="150" height="22" viewBox="361 30 150 22" fill="none" stroke="#000" stroke-width="1">
<path d="M369,39.5H381"/><rect x="427.5" y="34.5" width="11" height="11"/><path d="M486.5,34.5L497.5,45.5M497.5,34.5L486.5,45.5" stroke-width="1.2"/></svg>
</div>
<div id="ct" class="ui">
<div class="lbl" style="top:0.5px">Number of Circles:</div>
<div class="fld" style="top:16px"><span>20</span></div>
<div class="grv" style="top:22px"></div>
<div class="hnd" style="left:150.0px;top:18px"></div>
<div class="lbl" style="top:35.5px">Minimum Radius:</div>
<div class="fld" style="top:51px"><span>250.0</span></div>
<div class="grv" style="top:57px"></div>
<div class="hnd" style="left:168.0px;top:53px"></div>
<div class="lbl" style="top:70.5px">Maximum Radius:</div>
<div class="fld" style="top:86px"><span>750.0</span></div>
<div class="grv" style="top:92px"></div>
<div class="hnd" style="left:334.0px;top:88px"></div>
<div class="lbl" style="top:105.5px">Sections:</div>
<div class="fld" style="top:121px"><span>8</span></div>
<div class="grv" style="top:127px"></div>
<div class="hnd" style="left:100.0px;top:123px"></div>
<div class="lbl" style="top:157.5px">Random Seed:</div>
<div class="fld" style="top:173px"><span>42</span></div>
<div class="grv" style="top:179px"></div>
<div class="hnd" style="left:87.0px;top:175px"></div>
<div class="cb" style="top:143px"><svg width="13" height="13" viewBox="0 0 13 13" style="position:absolute;left:0;top:0"><path d="M1.8,6.4L4.4,11.1L11.2,4.9L10.9,1.8L4.4,8.5L2.9,6Z" fill="#e8e8e8"/></svg></div><div class="cbl" style="top:142.98px">Open Circles</div>
<div class="cb" style="top:195px"><svg width="13" height="13" viewBox="0 0 13 13" style="position:absolute;left:0;top:0"><path d="M1.8,6.4L4.4,11.1L11.2,4.9L10.9,1.8L4.4,8.5L2.9,6Z" fill="#e8e8e8"/></svg></div><div class="cbl" style="top:195.08px">Delete Previous Circles</div>
<div class="cb" style="top:212px"><svg width="13" height="13" viewBox="0 0 13 13" style="position:absolute;left:0;top:0"><path d="M1.8,6.4L4.4,11.1L11.2,4.9L10.9,1.8L4.4,8.5L2.9,6Z" fill="#e8e8e8"/></svg></div><div class="cbl" style="top:211.78px">Live Update Mode</div>
<div class="btn" style="top:227px"><span>Generate Circles</span></div>
<div class="btn" style="top:251px"><span>Reverse Curves</span></div>
<div class="btn" style="top:275px"><span>Attach Curves</span></div>
<div class="btn" style="top:299px"><span>Curl Curves</span></div>
<div class="btn" style="top:323px"><span>Smooth Curves</span></div>
<div class="btn hv" style="top:347px"><span>Open/Close Curves</span></div>
<div class="btn" style="top:371px"><span>Reset to Default</span></div>
</div></div>
</body></html>
